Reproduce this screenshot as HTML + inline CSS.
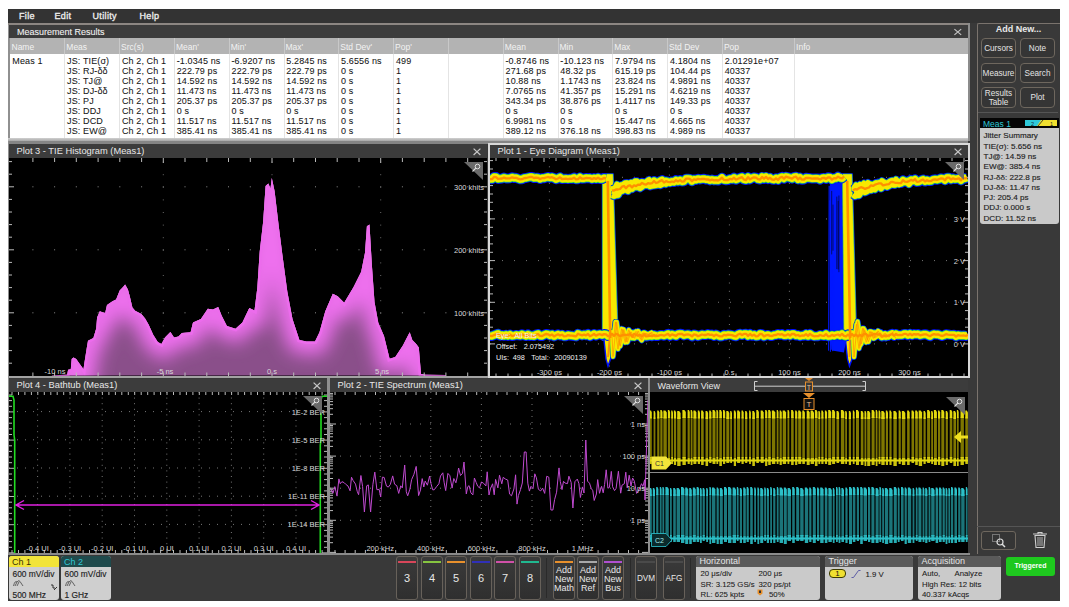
<!DOCTYPE html><html><head><meta charset="utf-8"><style>
html,body{margin:0;padding:0;background:#fff;width:1069px;height:607px;overflow:hidden;position:relative}
.b{position:absolute;box-sizing:border-box}
.t{position:absolute;white-space:pre;font-family:"Liberation Sans",sans-serif;line-height:1}
.s{-webkit-text-stroke:0.15px currentColor}
svg{position:absolute}
</style></head><body>
<div class="b" style="left:8px;top:9px;width:1052px;height:592px;background:#393939"></div>
<div class="b" style="left:8px;top:9px;width:1052px;height:14px;background:#333"></div>
<div class="t " style="left:19px;top:12.08px;font-size:9px;color:#ececec;font-weight:400;letter-spacing:0.35px;-webkit-text-stroke:0.35px #ececec">File</div>
<div class="t " style="left:54.5px;top:12.08px;font-size:9px;color:#ececec;font-weight:400;letter-spacing:0.35px;-webkit-text-stroke:0.35px #ececec">Edit</div>
<div class="t " style="left:92.5px;top:12.08px;font-size:9px;color:#ececec;font-weight:400;letter-spacing:0.35px;-webkit-text-stroke:0.35px #ececec">Utility</div>
<div class="t " style="left:139.5px;top:12.08px;font-size:9px;color:#ececec;font-weight:400;letter-spacing:0.35px;-webkit-text-stroke:0.35px #ececec">Help</div>
<div class="b" style="left:8px;top:23px;width:962px;height:2px;background:#8c8682"></div>
<div class="b" style="left:8px;top:25px;width:2px;height:116px;background:#909090"></div>
<div class="b" style="left:9px;top:25px;width:959px;height:13px;background:#3c3c3c"></div>
<div class="t " style="left:17px;top:28.08px;font-size:9px;color:#f0f0f0;font-weight:400;-webkit-text-stroke:0.1px #f0f0f0">Measurement Results</div>
<svg style="left:953px;top:27px" width="10" height="10"><path d="M1.4 2.1L8.2 7.9M8.2 2.1L1.4 7.9" stroke="#c4c4c4" stroke-width="1.2"/></svg>
<div class="b" style="left:968px;top:23px;width:2px;height:118px;background:#8c8c8c"></div>
<div class="b" style="left:10px;top:38px;width:958px;height:16px;background:#b3b3b3"></div>
<div class="b" style="left:10px;top:54px;width:958px;height:84px;background:#fff"></div>
<div class="b" style="left:8px;top:138px;width:960px;height:3px;background:linear-gradient(#d0d0d0,#a8a8a8)"></div>
<div class="b" style="left:8px;top:141px;width:960px;height:3px;background:#858585"></div>
<div class="t " style="left:11.5px;top:43.00px;font-size:8.5px;color:#f2f2f2;font-weight:400;">Name</div>
<div class="b" style="left:64px;top:38px;width:1px;height:16px;background:#c8c8c8"></div>
<div class="b" style="left:64px;top:54px;width:1px;height:84px;background:#e4e4e4"></div>
<div class="t " style="left:66.3px;top:43.00px;font-size:8.5px;color:#f2f2f2;font-weight:400;">Meas</div>
<div class="b" style="left:119px;top:38px;width:1px;height:16px;background:#c8c8c8"></div>
<div class="b" style="left:119px;top:54px;width:1px;height:84px;background:#e4e4e4"></div>
<div class="t " style="left:121.1px;top:43.00px;font-size:8.5px;color:#f2f2f2;font-weight:400;">Src(s)</div>
<div class="b" style="left:174px;top:38px;width:1px;height:16px;background:#c8c8c8"></div>
<div class="b" style="left:174px;top:54px;width:1px;height:84px;background:#e4e4e4"></div>
<div class="t " style="left:175.89999999999998px;top:43.00px;font-size:8.5px;color:#f2f2f2;font-weight:400;">Mean'</div>
<div class="b" style="left:229px;top:38px;width:1px;height:16px;background:#c8c8c8"></div>
<div class="b" style="left:229px;top:54px;width:1px;height:84px;background:#e4e4e4"></div>
<div class="t " style="left:230.7px;top:43.00px;font-size:8.5px;color:#f2f2f2;font-weight:400;">Min'</div>
<div class="b" style="left:284px;top:38px;width:1px;height:16px;background:#c8c8c8"></div>
<div class="b" style="left:284px;top:54px;width:1px;height:84px;background:#e4e4e4"></div>
<div class="t " style="left:285.5px;top:43.00px;font-size:8.5px;color:#f2f2f2;font-weight:400;">Max'</div>
<div class="b" style="left:338px;top:38px;width:1px;height:16px;background:#c8c8c8"></div>
<div class="b" style="left:338px;top:54px;width:1px;height:84px;background:#e4e4e4"></div>
<div class="t " style="left:340.29999999999995px;top:43.00px;font-size:8.5px;color:#f2f2f2;font-weight:400;">Std Dev'</div>
<div class="b" style="left:393px;top:38px;width:1px;height:16px;background:#c8c8c8"></div>
<div class="b" style="left:393px;top:54px;width:1px;height:84px;background:#e4e4e4"></div>
<div class="t " style="left:395.09999999999997px;top:43.00px;font-size:8.5px;color:#f2f2f2;font-weight:400;">Pop'</div>
<div class="b" style="left:448px;top:38px;width:1px;height:16px;background:#c8c8c8"></div>
<div class="b" style="left:448px;top:54px;width:1px;height:84px;background:#e4e4e4"></div>
<div class="t " style="left:449.9px;top:43.00px;font-size:8.5px;color:#f2f2f2;font-weight:400;"></div>
<div class="b" style="left:503px;top:38px;width:1px;height:16px;background:#c8c8c8"></div>
<div class="b" style="left:503px;top:54px;width:1px;height:84px;background:#e4e4e4"></div>
<div class="t " style="left:504.7px;top:43.00px;font-size:8.5px;color:#f2f2f2;font-weight:400;">Mean</div>
<div class="b" style="left:558px;top:38px;width:1px;height:16px;background:#c8c8c8"></div>
<div class="b" style="left:558px;top:54px;width:1px;height:84px;background:#e4e4e4"></div>
<div class="t " style="left:559.5px;top:43.00px;font-size:8.5px;color:#f2f2f2;font-weight:400;">Min</div>
<div class="b" style="left:612px;top:38px;width:1px;height:16px;background:#c8c8c8"></div>
<div class="b" style="left:612px;top:54px;width:1px;height:84px;background:#e4e4e4"></div>
<div class="t " style="left:614.3px;top:43.00px;font-size:8.5px;color:#f2f2f2;font-weight:400;">Max</div>
<div class="b" style="left:667px;top:38px;width:1px;height:16px;background:#c8c8c8"></div>
<div class="b" style="left:667px;top:54px;width:1px;height:84px;background:#e4e4e4"></div>
<div class="t " style="left:669.0999999999999px;top:43.00px;font-size:8.5px;color:#f2f2f2;font-weight:400;">Std Dev</div>
<div class="b" style="left:722px;top:38px;width:1px;height:16px;background:#c8c8c8"></div>
<div class="b" style="left:722px;top:54px;width:1px;height:84px;background:#e4e4e4"></div>
<div class="t " style="left:723.9px;top:43.00px;font-size:8.5px;color:#f2f2f2;font-weight:400;">Pop</div>
<div class="b" style="left:794px;top:38px;width:1px;height:16px;background:#c8c8c8"></div>
<div class="b" style="left:794px;top:54px;width:1px;height:84px;background:#e4e4e4"></div>
<div class="t " style="left:796.0999999999999px;top:43.00px;font-size:8.5px;color:#f2f2f2;font-weight:400;">Info</div>
<div class="t " style="left:12.299999999999999px;top:57.28px;font-size:9px;color:#141414;font-weight:400;letter-spacing:0.12px;-webkit-text-stroke:0.05px #141414">Meas 1</div>
<div class="t " style="left:67.1px;top:57.28px;font-size:9px;color:#141414;font-weight:400;letter-spacing:0.12px;-webkit-text-stroke:0.05px #141414">JS: TIE(σ)</div>
<div class="t " style="left:121.89999999999999px;top:57.28px;font-size:9px;color:#141414;font-weight:400;letter-spacing:0.12px;-webkit-text-stroke:0.05px #141414">Ch 2, Ch 1</div>
<div class="t " style="left:176.69999999999996px;top:57.28px;font-size:9px;color:#141414;font-weight:400;letter-spacing:0.12px;-webkit-text-stroke:0.05px #141414">-1.0345 ns</div>
<div class="t " style="left:231.49999999999997px;top:57.28px;font-size:9px;color:#141414;font-weight:400;letter-spacing:0.12px;-webkit-text-stroke:0.05px #141414">-6.9207 ns</div>
<div class="t " style="left:286.3px;top:57.28px;font-size:9px;color:#141414;font-weight:400;letter-spacing:0.12px;-webkit-text-stroke:0.05px #141414">5.2845 ns</div>
<div class="t " style="left:341.09999999999997px;top:57.28px;font-size:9px;color:#141414;font-weight:400;letter-spacing:0.12px;-webkit-text-stroke:0.05px #141414">5.6556 ns</div>
<div class="t " style="left:395.9px;top:57.28px;font-size:9px;color:#141414;font-weight:400;letter-spacing:0.12px;-webkit-text-stroke:0.05px #141414">499</div>
<div class="t " style="left:505.5px;top:57.28px;font-size:9px;color:#141414;font-weight:400;letter-spacing:0.12px;-webkit-text-stroke:0.05px #141414">-0.8746 ns</div>
<div class="t " style="left:560.3000000000001px;top:57.28px;font-size:9px;color:#141414;font-weight:400;letter-spacing:0.12px;-webkit-text-stroke:0.05px #141414">-10.123 ns</div>
<div class="t " style="left:615.1px;top:57.28px;font-size:9px;color:#141414;font-weight:400;letter-spacing:0.12px;-webkit-text-stroke:0.05px #141414">7.9794 ns</div>
<div class="t " style="left:669.9px;top:57.28px;font-size:9px;color:#141414;font-weight:400;letter-spacing:0.12px;-webkit-text-stroke:0.05px #141414">4.1804 ns</div>
<div class="t " style="left:724.7px;top:57.28px;font-size:9px;color:#141414;font-weight:400;letter-spacing:0.12px;-webkit-text-stroke:0.05px #141414">2.01291e+07</div>
<div class="t " style="left:67.1px;top:67.18px;font-size:9px;color:#141414;font-weight:400;letter-spacing:0.12px;-webkit-text-stroke:0.05px #141414">JS: RJ-δδ</div>
<div class="t " style="left:121.89999999999999px;top:67.18px;font-size:9px;color:#141414;font-weight:400;letter-spacing:0.12px;-webkit-text-stroke:0.05px #141414">Ch 2, Ch 1</div>
<div class="t " style="left:176.69999999999996px;top:67.18px;font-size:9px;color:#141414;font-weight:400;letter-spacing:0.12px;-webkit-text-stroke:0.05px #141414">222.79 ps</div>
<div class="t " style="left:231.49999999999997px;top:67.18px;font-size:9px;color:#141414;font-weight:400;letter-spacing:0.12px;-webkit-text-stroke:0.05px #141414">222.79 ps</div>
<div class="t " style="left:286.3px;top:67.18px;font-size:9px;color:#141414;font-weight:400;letter-spacing:0.12px;-webkit-text-stroke:0.05px #141414">222.79 ps</div>
<div class="t " style="left:341.09999999999997px;top:67.18px;font-size:9px;color:#141414;font-weight:400;letter-spacing:0.12px;-webkit-text-stroke:0.05px #141414">0 s</div>
<div class="t " style="left:395.9px;top:67.18px;font-size:9px;color:#141414;font-weight:400;letter-spacing:0.12px;-webkit-text-stroke:0.05px #141414">1</div>
<div class="t " style="left:505.5px;top:67.18px;font-size:9px;color:#141414;font-weight:400;letter-spacing:0.12px;-webkit-text-stroke:0.05px #141414">271.68 ps</div>
<div class="t " style="left:560.3000000000001px;top:67.18px;font-size:9px;color:#141414;font-weight:400;letter-spacing:0.12px;-webkit-text-stroke:0.05px #141414">48.32 ps</div>
<div class="t " style="left:615.1px;top:67.18px;font-size:9px;color:#141414;font-weight:400;letter-spacing:0.12px;-webkit-text-stroke:0.05px #141414">615.19 ps</div>
<div class="t " style="left:669.9px;top:67.18px;font-size:9px;color:#141414;font-weight:400;letter-spacing:0.12px;-webkit-text-stroke:0.05px #141414">104.44 ps</div>
<div class="t " style="left:724.7px;top:67.18px;font-size:9px;color:#141414;font-weight:400;letter-spacing:0.12px;-webkit-text-stroke:0.05px #141414">40337</div>
<div class="t " style="left:67.1px;top:77.08px;font-size:9px;color:#141414;font-weight:400;letter-spacing:0.12px;-webkit-text-stroke:0.05px #141414">JS: TJ@</div>
<div class="t " style="left:121.89999999999999px;top:77.08px;font-size:9px;color:#141414;font-weight:400;letter-spacing:0.12px;-webkit-text-stroke:0.05px #141414">Ch 2, Ch 1</div>
<div class="t " style="left:176.69999999999996px;top:77.08px;font-size:9px;color:#141414;font-weight:400;letter-spacing:0.12px;-webkit-text-stroke:0.05px #141414">14.592 ns</div>
<div class="t " style="left:231.49999999999997px;top:77.08px;font-size:9px;color:#141414;font-weight:400;letter-spacing:0.12px;-webkit-text-stroke:0.05px #141414">14.592 ns</div>
<div class="t " style="left:286.3px;top:77.08px;font-size:9px;color:#141414;font-weight:400;letter-spacing:0.12px;-webkit-text-stroke:0.05px #141414">14.592 ns</div>
<div class="t " style="left:341.09999999999997px;top:77.08px;font-size:9px;color:#141414;font-weight:400;letter-spacing:0.12px;-webkit-text-stroke:0.05px #141414">0 s</div>
<div class="t " style="left:395.9px;top:77.08px;font-size:9px;color:#141414;font-weight:400;letter-spacing:0.12px;-webkit-text-stroke:0.05px #141414">1</div>
<div class="t " style="left:505.5px;top:77.08px;font-size:9px;color:#141414;font-weight:400;letter-spacing:0.12px;-webkit-text-stroke:0.05px #141414">10.88 ns</div>
<div class="t " style="left:560.3000000000001px;top:77.08px;font-size:9px;color:#141414;font-weight:400;letter-spacing:0.12px;-webkit-text-stroke:0.05px #141414">1.1743 ns</div>
<div class="t " style="left:615.1px;top:77.08px;font-size:9px;color:#141414;font-weight:400;letter-spacing:0.12px;-webkit-text-stroke:0.05px #141414">23.824 ns</div>
<div class="t " style="left:669.9px;top:77.08px;font-size:9px;color:#141414;font-weight:400;letter-spacing:0.12px;-webkit-text-stroke:0.05px #141414">4.9891 ns</div>
<div class="t " style="left:724.7px;top:77.08px;font-size:9px;color:#141414;font-weight:400;letter-spacing:0.12px;-webkit-text-stroke:0.05px #141414">40337</div>
<div class="t " style="left:67.1px;top:86.98px;font-size:9px;color:#141414;font-weight:400;letter-spacing:0.12px;-webkit-text-stroke:0.05px #141414">JS: DJ-δδ</div>
<div class="t " style="left:121.89999999999999px;top:86.98px;font-size:9px;color:#141414;font-weight:400;letter-spacing:0.12px;-webkit-text-stroke:0.05px #141414">Ch 2, Ch 1</div>
<div class="t " style="left:176.69999999999996px;top:86.98px;font-size:9px;color:#141414;font-weight:400;letter-spacing:0.12px;-webkit-text-stroke:0.05px #141414">11.473 ns</div>
<div class="t " style="left:231.49999999999997px;top:86.98px;font-size:9px;color:#141414;font-weight:400;letter-spacing:0.12px;-webkit-text-stroke:0.05px #141414">11.473 ns</div>
<div class="t " style="left:286.3px;top:86.98px;font-size:9px;color:#141414;font-weight:400;letter-spacing:0.12px;-webkit-text-stroke:0.05px #141414">11.473 ns</div>
<div class="t " style="left:341.09999999999997px;top:86.98px;font-size:9px;color:#141414;font-weight:400;letter-spacing:0.12px;-webkit-text-stroke:0.05px #141414">0 s</div>
<div class="t " style="left:395.9px;top:86.98px;font-size:9px;color:#141414;font-weight:400;letter-spacing:0.12px;-webkit-text-stroke:0.05px #141414">1</div>
<div class="t " style="left:505.5px;top:86.98px;font-size:9px;color:#141414;font-weight:400;letter-spacing:0.12px;-webkit-text-stroke:0.05px #141414">7.0765 ns</div>
<div class="t " style="left:560.3000000000001px;top:86.98px;font-size:9px;color:#141414;font-weight:400;letter-spacing:0.12px;-webkit-text-stroke:0.05px #141414">41.357 ps</div>
<div class="t " style="left:615.1px;top:86.98px;font-size:9px;color:#141414;font-weight:400;letter-spacing:0.12px;-webkit-text-stroke:0.05px #141414">15.291 ns</div>
<div class="t " style="left:669.9px;top:86.98px;font-size:9px;color:#141414;font-weight:400;letter-spacing:0.12px;-webkit-text-stroke:0.05px #141414">4.6219 ns</div>
<div class="t " style="left:724.7px;top:86.98px;font-size:9px;color:#141414;font-weight:400;letter-spacing:0.12px;-webkit-text-stroke:0.05px #141414">40337</div>
<div class="t " style="left:67.1px;top:96.88px;font-size:9px;color:#141414;font-weight:400;letter-spacing:0.12px;-webkit-text-stroke:0.05px #141414">JS: PJ</div>
<div class="t " style="left:121.89999999999999px;top:96.88px;font-size:9px;color:#141414;font-weight:400;letter-spacing:0.12px;-webkit-text-stroke:0.05px #141414">Ch 2, Ch 1</div>
<div class="t " style="left:176.69999999999996px;top:96.88px;font-size:9px;color:#141414;font-weight:400;letter-spacing:0.12px;-webkit-text-stroke:0.05px #141414">205.37 ps</div>
<div class="t " style="left:231.49999999999997px;top:96.88px;font-size:9px;color:#141414;font-weight:400;letter-spacing:0.12px;-webkit-text-stroke:0.05px #141414">205.37 ps</div>
<div class="t " style="left:286.3px;top:96.88px;font-size:9px;color:#141414;font-weight:400;letter-spacing:0.12px;-webkit-text-stroke:0.05px #141414">205.37 ps</div>
<div class="t " style="left:341.09999999999997px;top:96.88px;font-size:9px;color:#141414;font-weight:400;letter-spacing:0.12px;-webkit-text-stroke:0.05px #141414">0 s</div>
<div class="t " style="left:395.9px;top:96.88px;font-size:9px;color:#141414;font-weight:400;letter-spacing:0.12px;-webkit-text-stroke:0.05px #141414">1</div>
<div class="t " style="left:505.5px;top:96.88px;font-size:9px;color:#141414;font-weight:400;letter-spacing:0.12px;-webkit-text-stroke:0.05px #141414">343.34 ps</div>
<div class="t " style="left:560.3000000000001px;top:96.88px;font-size:9px;color:#141414;font-weight:400;letter-spacing:0.12px;-webkit-text-stroke:0.05px #141414">38.876 ps</div>
<div class="t " style="left:615.1px;top:96.88px;font-size:9px;color:#141414;font-weight:400;letter-spacing:0.12px;-webkit-text-stroke:0.05px #141414">1.4117 ns</div>
<div class="t " style="left:669.9px;top:96.88px;font-size:9px;color:#141414;font-weight:400;letter-spacing:0.12px;-webkit-text-stroke:0.05px #141414">149.33 ps</div>
<div class="t " style="left:724.7px;top:96.88px;font-size:9px;color:#141414;font-weight:400;letter-spacing:0.12px;-webkit-text-stroke:0.05px #141414">40337</div>
<div class="t " style="left:67.1px;top:106.78px;font-size:9px;color:#141414;font-weight:400;letter-spacing:0.12px;-webkit-text-stroke:0.05px #141414">JS: DDJ</div>
<div class="t " style="left:121.89999999999999px;top:106.78px;font-size:9px;color:#141414;font-weight:400;letter-spacing:0.12px;-webkit-text-stroke:0.05px #141414">Ch 2, Ch 1</div>
<div class="t " style="left:176.69999999999996px;top:106.78px;font-size:9px;color:#141414;font-weight:400;letter-spacing:0.12px;-webkit-text-stroke:0.05px #141414">0 s</div>
<div class="t " style="left:231.49999999999997px;top:106.78px;font-size:9px;color:#141414;font-weight:400;letter-spacing:0.12px;-webkit-text-stroke:0.05px #141414">0 s</div>
<div class="t " style="left:286.3px;top:106.78px;font-size:9px;color:#141414;font-weight:400;letter-spacing:0.12px;-webkit-text-stroke:0.05px #141414">0 s</div>
<div class="t " style="left:341.09999999999997px;top:106.78px;font-size:9px;color:#141414;font-weight:400;letter-spacing:0.12px;-webkit-text-stroke:0.05px #141414">0 s</div>
<div class="t " style="left:395.9px;top:106.78px;font-size:9px;color:#141414;font-weight:400;letter-spacing:0.12px;-webkit-text-stroke:0.05px #141414">1</div>
<div class="t " style="left:505.5px;top:106.78px;font-size:9px;color:#141414;font-weight:400;letter-spacing:0.12px;-webkit-text-stroke:0.05px #141414">0 s</div>
<div class="t " style="left:560.3000000000001px;top:106.78px;font-size:9px;color:#141414;font-weight:400;letter-spacing:0.12px;-webkit-text-stroke:0.05px #141414">0 s</div>
<div class="t " style="left:615.1px;top:106.78px;font-size:9px;color:#141414;font-weight:400;letter-spacing:0.12px;-webkit-text-stroke:0.05px #141414">0 s</div>
<div class="t " style="left:669.9px;top:106.78px;font-size:9px;color:#141414;font-weight:400;letter-spacing:0.12px;-webkit-text-stroke:0.05px #141414">0 s</div>
<div class="t " style="left:724.7px;top:106.78px;font-size:9px;color:#141414;font-weight:400;letter-spacing:0.12px;-webkit-text-stroke:0.05px #141414">40337</div>
<div class="t " style="left:67.1px;top:116.68px;font-size:9px;color:#141414;font-weight:400;letter-spacing:0.12px;-webkit-text-stroke:0.05px #141414">JS: DCD</div>
<div class="t " style="left:121.89999999999999px;top:116.68px;font-size:9px;color:#141414;font-weight:400;letter-spacing:0.12px;-webkit-text-stroke:0.05px #141414">Ch 2, Ch 1</div>
<div class="t " style="left:176.69999999999996px;top:116.68px;font-size:9px;color:#141414;font-weight:400;letter-spacing:0.12px;-webkit-text-stroke:0.05px #141414">11.517 ns</div>
<div class="t " style="left:231.49999999999997px;top:116.68px;font-size:9px;color:#141414;font-weight:400;letter-spacing:0.12px;-webkit-text-stroke:0.05px #141414">11.517 ns</div>
<div class="t " style="left:286.3px;top:116.68px;font-size:9px;color:#141414;font-weight:400;letter-spacing:0.12px;-webkit-text-stroke:0.05px #141414">11.517 ns</div>
<div class="t " style="left:341.09999999999997px;top:116.68px;font-size:9px;color:#141414;font-weight:400;letter-spacing:0.12px;-webkit-text-stroke:0.05px #141414">0 s</div>
<div class="t " style="left:395.9px;top:116.68px;font-size:9px;color:#141414;font-weight:400;letter-spacing:0.12px;-webkit-text-stroke:0.05px #141414">1</div>
<div class="t " style="left:505.5px;top:116.68px;font-size:9px;color:#141414;font-weight:400;letter-spacing:0.12px;-webkit-text-stroke:0.05px #141414">6.9981 ns</div>
<div class="t " style="left:560.3000000000001px;top:116.68px;font-size:9px;color:#141414;font-weight:400;letter-spacing:0.12px;-webkit-text-stroke:0.05px #141414">0 s</div>
<div class="t " style="left:615.1px;top:116.68px;font-size:9px;color:#141414;font-weight:400;letter-spacing:0.12px;-webkit-text-stroke:0.05px #141414">15.447 ns</div>
<div class="t " style="left:669.9px;top:116.68px;font-size:9px;color:#141414;font-weight:400;letter-spacing:0.12px;-webkit-text-stroke:0.05px #141414">4.665 ns</div>
<div class="t " style="left:724.7px;top:116.68px;font-size:9px;color:#141414;font-weight:400;letter-spacing:0.12px;-webkit-text-stroke:0.05px #141414">40337</div>
<div class="t " style="left:67.1px;top:126.58px;font-size:9px;color:#141414;font-weight:400;letter-spacing:0.12px;-webkit-text-stroke:0.05px #141414">JS: EW@</div>
<div class="t " style="left:121.89999999999999px;top:126.58px;font-size:9px;color:#141414;font-weight:400;letter-spacing:0.12px;-webkit-text-stroke:0.05px #141414">Ch 2, Ch 1</div>
<div class="t " style="left:176.69999999999996px;top:126.58px;font-size:9px;color:#141414;font-weight:400;letter-spacing:0.12px;-webkit-text-stroke:0.05px #141414">385.41 ns</div>
<div class="t " style="left:231.49999999999997px;top:126.58px;font-size:9px;color:#141414;font-weight:400;letter-spacing:0.12px;-webkit-text-stroke:0.05px #141414">385.41 ns</div>
<div class="t " style="left:286.3px;top:126.58px;font-size:9px;color:#141414;font-weight:400;letter-spacing:0.12px;-webkit-text-stroke:0.05px #141414">385.41 ns</div>
<div class="t " style="left:341.09999999999997px;top:126.58px;font-size:9px;color:#141414;font-weight:400;letter-spacing:0.12px;-webkit-text-stroke:0.05px #141414">0 s</div>
<div class="t " style="left:395.9px;top:126.58px;font-size:9px;color:#141414;font-weight:400;letter-spacing:0.12px;-webkit-text-stroke:0.05px #141414">1</div>
<div class="t " style="left:505.5px;top:126.58px;font-size:9px;color:#141414;font-weight:400;letter-spacing:0.12px;-webkit-text-stroke:0.05px #141414">389.12 ns</div>
<div class="t " style="left:560.3000000000001px;top:126.58px;font-size:9px;color:#141414;font-weight:400;letter-spacing:0.12px;-webkit-text-stroke:0.05px #141414">376.18 ns</div>
<div class="t " style="left:615.1px;top:126.58px;font-size:9px;color:#141414;font-weight:400;letter-spacing:0.12px;-webkit-text-stroke:0.05px #141414">398.83 ns</div>
<div class="t " style="left:669.9px;top:126.58px;font-size:9px;color:#141414;font-weight:400;letter-spacing:0.12px;-webkit-text-stroke:0.05px #141414">4.989 ns</div>
<div class="t " style="left:724.7px;top:126.58px;font-size:9px;color:#141414;font-weight:400;letter-spacing:0.12px;-webkit-text-stroke:0.05px #141414">40337</div>
<div class="b" style="left:977px;top:23px;width:83px;height:531px;background:#393939;border-left:1px solid #7a736d;border-top:1px solid #7a736d;border-top-left-radius:2px"></div>
<div class="t " style="left:918.5px;width:200px;text-align:center;top:24.58px;font-size:9px;color:#e8e8e8;font-weight:700;">Add New...</div>
<div class="b" style="left:981px;top:38px;width:35px;height:20px;background:#353535;border:1px solid #6e675e;border-radius:4px"></div>
<div class="t " style="left:898.5px;width:200px;text-align:center;top:44.96px;font-size:8.2px;color:#e4e4e4;font-weight:400;">Cursors</div>
<div class="b" style="left:1020px;top:38px;width:35px;height:20px;background:#353535;border:1px solid #6e675e;border-radius:4px"></div>
<div class="t " style="left:937.5px;width:200px;text-align:center;top:44.96px;font-size:8.2px;color:#e4e4e4;font-weight:400;">Note</div>
<div class="b" style="left:981px;top:63px;width:35px;height:20px;background:#353535;border:1px solid #6e675e;border-radius:4px"></div>
<div class="t " style="left:898.5px;width:200px;text-align:center;top:69.96px;font-size:8.2px;color:#e4e4e4;font-weight:400;">Measure</div>
<div class="b" style="left:1020px;top:63px;width:35px;height:20px;background:#353535;border:1px solid #6e675e;border-radius:4px"></div>
<div class="t " style="left:937.5px;width:200px;text-align:center;top:69.96px;font-size:8.2px;color:#e4e4e4;font-weight:400;">Search</div>
<div class="b" style="left:981px;top:87px;width:35px;height:21px;background:#353535;border:1px solid #6e675e;border-radius:4px"></div>
<div class="t " style="left:898.5px;width:200px;text-align:center;top:89.76px;font-size:8.2px;color:#e4e4e4;font-weight:400;">Results</div>
<div class="t " style="left:898.5px;width:200px;text-align:center;top:98.96px;font-size:8.2px;color:#e4e4e4;font-weight:400;">Table</div>
<div class="b" style="left:1020px;top:87px;width:35px;height:21px;background:#353535;border:1px solid #6e675e;border-radius:4px"></div>
<div class="t " style="left:937.5px;width:200px;text-align:center;top:94.46px;font-size:8.2px;color:#e4e4e4;font-weight:400;">Plot</div>
<div class="b" style="left:978px;top:112px;width:80px;height:1px;background:#555"></div>
<div class="b" style="left:980px;top:118px;width:79px;height:10px;background:#050505"></div>
<div class="t " style="left:983px;top:120.30px;font-size:8.5px;color:#2ec8d8;font-weight:400;">Meas 1</div>
<svg style="left:1025px;top:120px" width="32" height="7"><rect x="0" y="0" width="32" height="6" fill="#2ec8d8"/><polygon points="16,0 32,0 32,6 12,6" fill="#f0e030"/><line x1="13" y1="6" x2="18" y2="0" stroke="#222" stroke-width="0.8"/><text x="6" y="5.5" font-size="5.5" font-family="Liberation Sans" fill="#123">2</text><text x="25" y="5.5" font-size="5.5" font-family="Liberation Sans" fill="#222">1</text></svg>
<div class="b" style="left:980px;top:128px;width:79px;height:95.5px;background:#c9c9c9;border-radius:0 0 3px 3px"></div>
<div class="t s" style="left:983.5px;top:132.34px;font-size:8.1px;color:#1e1e1e;font-weight:400;">Jitter Summary</div>
<div class="t s" style="left:983.5px;top:142.64px;font-size:8.1px;color:#1e1e1e;font-weight:400;">TIE(σ): 5.656 ns</div>
<div class="t s" style="left:983.5px;top:152.94px;font-size:8.1px;color:#1e1e1e;font-weight:400;">TJ@: 14.59 ns</div>
<div class="t s" style="left:983.5px;top:163.24px;font-size:8.1px;color:#1e1e1e;font-weight:400;">EW@: 385.4 ns</div>
<div class="t s" style="left:983.5px;top:173.54px;font-size:8.1px;color:#1e1e1e;font-weight:400;">RJ-δδ: 222.8 ps</div>
<div class="t s" style="left:983.5px;top:183.84px;font-size:8.1px;color:#1e1e1e;font-weight:400;">DJ-δδ: 11.47 ns</div>
<div class="t s" style="left:983.5px;top:194.14px;font-size:8.1px;color:#1e1e1e;font-weight:400;">PJ: 205.4 ps</div>
<div class="t s" style="left:983.5px;top:204.44px;font-size:8.1px;color:#1e1e1e;font-weight:400;">DDJ: 0.000 s</div>
<div class="t s" style="left:983.5px;top:214.74px;font-size:8.1px;color:#1e1e1e;font-weight:400;">DCD: 11.52 ns</div>
<div class="b" style="left:977px;top:526px;width:83px;height:1px;background:#555"></div>
<div class="b" style="left:981px;top:531px;width:35px;height:19px;background:#353535;border:1px solid #6e675e;border-radius:3px"></div>
<svg style="left:989px;top:532px" width="22" height="17"><rect x="3.5" y="2.5" width="7" height="7" fill="none" stroke="#bbb" stroke-dasharray="1,1"/><circle cx="11" cy="10" r="3" fill="none" stroke="#ddd" stroke-width="1.2"/><line x1="13" y1="12" x2="16" y2="15" stroke="#ddd" stroke-width="1.5"/></svg>
<svg style="left:1031px;top:530px" width="18" height="20"><path d="M2 4h14M7 4V2.5h4V4M4 5.5l1 12h8l1-12z" fill="none" stroke="#d0d0d0" stroke-width="1.1"/><path d="M7 7v9M9 7v9M11 7v9" stroke="#d0d0d0" stroke-width="0.8"/></svg>
<div class="b" style="left:8px;top:553px;width:962px;height:2px;background:#8a8a8a"></div>
<div class="b" style="left:9px;top:556px;width:50px;height:44px;background:#cfcfcf;border-radius:3px;overflow:hidden"></div>
<div class="b" style="left:9px;top:556px;width:50px;height:11px;background:#f2e43a;border-radius:3px 3px 0 0"></div>
<div class="t " style="left:12px;top:558.08px;font-size:9px;color:#3a3000;font-weight:400;">Ch 1</div>
<div class="t s" style="left:12.5px;top:569.79px;font-size:8.4px;color:#1e1e1e;font-weight:400;">600 mV/div</div>
<svg style="left:13px;top:579px" width="12" height="8"><path d="M0.5 7 Q2 1 4 3 Q6 0 8 4 L10 7 M2 7l2-4M4 7l2-4" fill="none" stroke="#333" stroke-width="0.7"/></svg>
<div class="t s" style="left:12.5px;top:590.59px;font-size:8.4px;color:#1e1e1e;font-weight:400;">500 MHz</div>
<svg style="left:50px;top:584px" width="8" height="8"><path d="M1 1h2v3h2M4 6l3-3" fill="none" stroke="#222" stroke-width="0.9"/></svg>
<div class="b" style="left:61px;top:556px;width:50px;height:44px;background:#cfcfcf;border-radius:3px;overflow:hidden"></div>
<div class="b" style="left:61px;top:556px;width:50px;height:11px;background:#1f4a4c;border-radius:3px 3px 0 0"></div>
<div class="t " style="left:64px;top:558.08px;font-size:9px;color:#2ec8d4;font-weight:400;">Ch 2</div>
<div class="t s" style="left:64.5px;top:569.79px;font-size:8.4px;color:#1e1e1e;font-weight:400;">600 mV/div</div>
<svg style="left:65px;top:579px" width="12" height="8"><path d="M0.5 7 Q2 1 4 3 Q6 0 8 4 L10 7 M2 7l2-4M4 7l2-4" fill="none" stroke="#333" stroke-width="0.7"/></svg>
<div class="t s" style="left:64.5px;top:590.59px;font-size:8.4px;color:#1e1e1e;font-weight:400;">1 GHz</div>
<div class="b" style="left:396px;top:556px;width:22px;height:44px;background:linear-gradient(#3a3a3a,#2f2f2f);border:1px solid #67615a;border-radius:3px"></div>
<div class="b" style="left:398px;top:560.5px;width:18px;height:2.0px;background:#d8465a"></div>
<div class="t " style="left:307.0px;width:200px;text-align:center;top:572.89px;font-size:11px;color:#e8e8e8;font-weight:400;">3</div>
<div class="b" style="left:421px;top:556px;width:22px;height:44px;background:linear-gradient(#3a3a3a,#2f2f2f);border:1px solid #67615a;border-radius:3px"></div>
<div class="b" style="left:423px;top:560.5px;width:18px;height:2.0px;background:#86c440"></div>
<div class="t " style="left:332.0px;width:200px;text-align:center;top:572.89px;font-size:11px;color:#e8e8e8;font-weight:400;">4</div>
<div class="b" style="left:445px;top:556px;width:22px;height:44px;background:linear-gradient(#3a3a3a,#2f2f2f);border:1px solid #67615a;border-radius:3px"></div>
<div class="b" style="left:447px;top:560.5px;width:18px;height:2.0px;background:#e8902c"></div>
<div class="t " style="left:356.0px;width:200px;text-align:center;top:572.89px;font-size:11px;color:#e8e8e8;font-weight:400;">5</div>
<div class="b" style="left:470px;top:556px;width:22px;height:44px;background:linear-gradient(#3a3a3a,#2f2f2f);border:1px solid #67615a;border-radius:3px"></div>
<div class="b" style="left:472px;top:560.5px;width:18px;height:2.0px;background:#3030b8"></div>
<div class="t " style="left:381.0px;width:200px;text-align:center;top:572.89px;font-size:11px;color:#e8e8e8;font-weight:400;">6</div>
<div class="b" style="left:494px;top:556px;width:22px;height:44px;background:linear-gradient(#3a3a3a,#2f2f2f);border:1px solid #67615a;border-radius:3px"></div>
<div class="b" style="left:496px;top:560.5px;width:18px;height:2.0px;background:#d050a8"></div>
<div class="t " style="left:405.0px;width:200px;text-align:center;top:572.89px;font-size:11px;color:#e8e8e8;font-weight:400;">7</div>
<div class="b" style="left:519px;top:556px;width:22px;height:44px;background:linear-gradient(#3a3a3a,#2f2f2f);border:1px solid #67615a;border-radius:3px"></div>
<div class="b" style="left:521px;top:560.5px;width:18px;height:2.0px;background:#20b890"></div>
<div class="t " style="left:430.0px;width:200px;text-align:center;top:572.89px;font-size:11px;color:#e8e8e8;font-weight:400;">8</div>
<div class="b" style="left:546px;top:558px;width:1px;height:40px;background:#2a2a2a"></div>
<div class="b" style="left:553px;top:556px;width:22px;height:44px;background:linear-gradient(#3a3a3a,#2f2f2f);border:1px solid #67615a;border-radius:3px"></div>
<div class="b" style="left:555px;top:560.5px;width:18px;height:2.0px;background:#e8902c"></div>
<div class="t " style="left:464.0px;width:200px;text-align:center;top:566.38px;font-size:9px;color:#e8e8e8;font-weight:400;">Add</div>
<div class="t " style="left:464.0px;width:200px;text-align:center;top:575.08px;font-size:9px;color:#e8e8e8;font-weight:400;">New</div>
<div class="t " style="left:464.0px;width:200px;text-align:center;top:583.78px;font-size:9px;color:#e8e8e8;font-weight:400;">Math</div>
<div class="b" style="left:577px;top:556px;width:22px;height:44px;background:linear-gradient(#3a3a3a,#2f2f2f);border:1px solid #67615a;border-radius:3px"></div>
<div class="b" style="left:579px;top:560.5px;width:18px;height:2.0px;background:#a8a8a8"></div>
<div class="t " style="left:488.0px;width:200px;text-align:center;top:566.38px;font-size:9px;color:#e8e8e8;font-weight:400;">Add</div>
<div class="t " style="left:488.0px;width:200px;text-align:center;top:575.08px;font-size:9px;color:#e8e8e8;font-weight:400;">New</div>
<div class="t " style="left:488.0px;width:200px;text-align:center;top:583.78px;font-size:9px;color:#e8e8e8;font-weight:400;">Ref</div>
<div class="b" style="left:602px;top:556px;width:22px;height:44px;background:linear-gradient(#3a3a3a,#2f2f2f);border:1px solid #67615a;border-radius:3px"></div>
<div class="b" style="left:604px;top:560.5px;width:18px;height:2.0px;background:#b050d0"></div>
<div class="t " style="left:513.0px;width:200px;text-align:center;top:566.38px;font-size:9px;color:#e8e8e8;font-weight:400;">Add</div>
<div class="t " style="left:513.0px;width:200px;text-align:center;top:575.08px;font-size:9px;color:#e8e8e8;font-weight:400;">New</div>
<div class="t " style="left:513.0px;width:200px;text-align:center;top:583.78px;font-size:9px;color:#e8e8e8;font-weight:400;">Bus</div>
<div class="b" style="left:630px;top:558px;width:1px;height:40px;background:#2a2a2a"></div>
<div class="b" style="left:635px;top:556px;width:22px;height:44px;background:linear-gradient(#3a3a3a,#2f2f2f);border:1px solid #67615a;border-radius:3px"></div>
<div class="b" style="left:637px;top:560.5px;width:18px;height:2.0px;background:#4a4a4a"></div>
<div class="t " style="left:546.0px;width:200px;text-align:center;top:574.76px;font-size:8.2px;color:#e8e8e8;font-weight:400;">DVM</div>
<div class="b" style="left:663px;top:556px;width:22px;height:44px;background:linear-gradient(#3a3a3a,#2f2f2f);border:1px solid #67615a;border-radius:3px"></div>
<div class="b" style="left:665px;top:560.5px;width:18px;height:2.0px;background:#4a4a4a"></div>
<div class="t " style="left:574.0px;width:200px;text-align:center;top:574.76px;font-size:8.2px;color:#e8e8e8;font-weight:400;">AFG</div>
<div class="b" style="left:690px;top:558px;width:1px;height:40px;background:#2a2a2a"></div>
<div class="b" style="left:696px;top:556px;width:124px;height:44px;background:#cacaca;border-radius:3px;overflow:hidden"></div>
<div class="b" style="left:696px;top:556px;width:124px;height:10.5px;background:#5a5a5a;border-radius:3px 3px 0 0"></div>
<div class="t " style="left:699.5px;top:557.28px;font-size:9px;color:#e6e6e6;font-weight:400;">Horizontal</div>
<div class="t " style="left:700.5px;top:570.40px;font-size:7.8px;color:#1a1a1a;font-weight:400;-webkit-text-stroke:0.07px #1a1a1a">20 μs/div</div>
<div class="t " style="left:758.5px;top:570.40px;font-size:7.8px;color:#1a1a1a;font-weight:400;-webkit-text-stroke:0.07px #1a1a1a">200 μs</div>
<div class="t " style="left:700.5px;top:580.60px;font-size:7.8px;color:#1a1a1a;font-weight:400;-webkit-text-stroke:0.07px #1a1a1a">SR: 3.125 GS/s</div>
<div class="t " style="left:758.5px;top:580.60px;font-size:7.8px;color:#1a1a1a;font-weight:400;-webkit-text-stroke:0.07px #1a1a1a">320 ps/pt</div>
<div class="t " style="left:700.5px;top:590.60px;font-size:7.8px;color:#1a1a1a;font-weight:400;-webkit-text-stroke:0.07px #1a1a1a">RL: 625 kpts</div>
<svg style="left:757px;top:589px" width="6" height="7"><path d="M0.5 0.5h5v4l-2.5 2l-2.5-2z" fill="#e8902c"/><rect x="2" y="1.5" width="2" height="2.5" fill="#333"/></svg>
<div class="t " style="left:769px;top:590.60px;font-size:7.8px;color:#1a1a1a;font-weight:400;-webkit-text-stroke:0.07px #1a1a1a">50%</div>
<div class="b" style="left:825px;top:556px;width:88px;height:44px;background:#cacaca;border-radius:3px;overflow:hidden"></div>
<div class="b" style="left:825px;top:556px;width:88px;height:10.5px;background:#5a5a5a;border-radius:3px 3px 0 0"></div>
<div class="t " style="left:828.5px;top:557.28px;font-size:9px;color:#e6e6e6;font-weight:400;">Trigger</div>
<div class="b" style="left:829px;top:569px;width:17px;height:9px;background:#f0e030;border:1px solid #3a3a00;border-radius:4px"></div>
<div class="t " style="left:737.5px;width:200px;text-align:center;top:570.43px;font-size:8px;color:#111;font-weight:400;">1</div>
<svg style="left:851px;top:570px" width="10" height="8"><path d="M0.5 7.5h2l5-7h2" fill="none" stroke="#5050a0" stroke-width="0.9"/></svg>
<div class="t " style="left:865.5px;top:570.60px;font-size:7.8px;color:#1a1a1a;font-weight:400;-webkit-text-stroke:0.07px #1a1a1a">1.9 V</div>
<div class="b" style="left:918px;top:556px;width:83px;height:44px;background:#cacaca;border-radius:3px;overflow:hidden"></div>
<div class="b" style="left:918px;top:556px;width:83px;height:10.5px;background:#5a5a5a;border-radius:3px 3px 0 0"></div>
<div class="t " style="left:921.5px;top:557.28px;font-size:9px;color:#e6e6e6;font-weight:400;">Acquisition</div>
<div class="t " style="left:922px;top:570.40px;font-size:7.8px;color:#1a1a1a;font-weight:400;-webkit-text-stroke:0.07px #1a1a1a">Auto,</div>
<div class="t " style="left:954.5px;top:570.40px;font-size:7.8px;color:#1a1a1a;font-weight:400;-webkit-text-stroke:0.07px #1a1a1a">Analyze</div>
<div class="t " style="left:922px;top:580.60px;font-size:7.8px;color:#1a1a1a;font-weight:400;-webkit-text-stroke:0.07px #1a1a1a">High Res: 12 bits</div>
<div class="t " style="left:922px;top:590.60px;font-size:7.8px;color:#1a1a1a;font-weight:400;-webkit-text-stroke:0.07px #1a1a1a">40.337 kAcqs</div>
<div class="b" style="left:1006px;top:556.5px;width:49px;height:19.0px;background:#1ec81e;border-radius:3px"></div>
<div class="t " style="left:930.5px;width:200px;text-align:center;top:562.37px;font-size:7px;color:#fff;font-weight:700;">Triggered</div>
<div class="b" style="left:9px;top:144px;width:478px;height:13.5px;background:#3c3c3c"></div>
<div class="b" style="left:9px;top:157.5px;width:478px;height:218.5px;background:#000"></div>
<div class="t " style="left:16.5px;top:146.83px;font-size:9.3px;color:#e8e8e8;font-weight:400;">Plot 3 - TIE Histogram (Meas1)</div>
<svg style="left:472px;top:146.7px" width="10" height="10"><path d="M1.6 1.6L8.4 8.0M8.4 1.6L1.6 8.0" stroke="#c8c8c8" stroke-width="1.2"/></svg>
<div class="b" style="left:8px;top:376px;width:480px;height:1.5px;background:#a2a2a2"></div>
<div class="b" style="left:8px;top:141px;width:1px;height:412px;background:#8e8e8e"></div>
<svg style="left:9px;top:157.5px" width="478" height="218.5" viewBox="0 0 478 218.5"><g fill="#8a8a8a"><rect x="23.4" y="28.3" width="1" height="1"/><rect x="45.1" y="28.3" width="1" height="1"/><rect x="66.8" y="28.3" width="1" height="1"/><rect x="88.6" y="28.3" width="1" height="1"/><rect x="110.3" y="28.3" width="1" height="1"/><rect x="132.1" y="28.3" width="1" height="1"/><rect x="153.8" y="28.3" width="1" height="1"/><rect x="175.5" y="28.3" width="1" height="1"/><rect x="197.3" y="28.3" width="1" height="1"/><rect x="219.0" y="28.3" width="1" height="1"/><rect x="240.8" y="28.3" width="1" height="1"/><rect x="262.5" y="28.3" width="1" height="1"/><rect x="284.2" y="28.3" width="1" height="1"/><rect x="306.0" y="28.3" width="1" height="1"/><rect x="327.7" y="28.3" width="1" height="1"/><rect x="349.5" y="28.3" width="1" height="1"/><rect x="371.2" y="28.3" width="1" height="1"/><rect x="392.9" y="28.3" width="1" height="1"/><rect x="414.7" y="28.3" width="1" height="1"/><rect x="436.4" y="28.3" width="1" height="1"/><rect x="458.2" y="28.3" width="1" height="1"/></g><g fill="#8a8a8a"><rect x="23.4" y="91.3" width="1" height="1"/><rect x="45.1" y="91.3" width="1" height="1"/><rect x="66.8" y="91.3" width="1" height="1"/><rect x="88.6" y="91.3" width="1" height="1"/><rect x="110.3" y="91.3" width="1" height="1"/><rect x="132.1" y="91.3" width="1" height="1"/><rect x="153.8" y="91.3" width="1" height="1"/><rect x="175.5" y="91.3" width="1" height="1"/><rect x="197.3" y="91.3" width="1" height="1"/><rect x="219.0" y="91.3" width="1" height="1"/><rect x="240.8" y="91.3" width="1" height="1"/><rect x="262.5" y="91.3" width="1" height="1"/><rect x="284.2" y="91.3" width="1" height="1"/><rect x="306.0" y="91.3" width="1" height="1"/><rect x="327.7" y="91.3" width="1" height="1"/><rect x="349.5" y="91.3" width="1" height="1"/><rect x="371.2" y="91.3" width="1" height="1"/><rect x="392.9" y="91.3" width="1" height="1"/><rect x="414.7" y="91.3" width="1" height="1"/><rect x="436.4" y="91.3" width="1" height="1"/><rect x="458.2" y="91.3" width="1" height="1"/></g><g fill="#8a8a8a"><rect x="23.4" y="154.3" width="1" height="1"/><rect x="45.1" y="154.3" width="1" height="1"/><rect x="66.8" y="154.3" width="1" height="1"/><rect x="88.6" y="154.3" width="1" height="1"/><rect x="110.3" y="154.3" width="1" height="1"/><rect x="132.1" y="154.3" width="1" height="1"/><rect x="153.8" y="154.3" width="1" height="1"/><rect x="175.5" y="154.3" width="1" height="1"/><rect x="197.3" y="154.3" width="1" height="1"/><rect x="219.0" y="154.3" width="1" height="1"/><rect x="240.8" y="154.3" width="1" height="1"/><rect x="262.5" y="154.3" width="1" height="1"/><rect x="284.2" y="154.3" width="1" height="1"/><rect x="306.0" y="154.3" width="1" height="1"/><rect x="327.7" y="154.3" width="1" height="1"/><rect x="349.5" y="154.3" width="1" height="1"/><rect x="371.2" y="154.3" width="1" height="1"/><rect x="392.9" y="154.3" width="1" height="1"/><rect x="414.7" y="154.3" width="1" height="1"/><rect x="436.4" y="154.3" width="1" height="1"/><rect x="458.2" y="154.3" width="1" height="1"/></g><g fill="#6a6a6a"><rect x="153.8" y="3.6" width="1" height="1"/><rect x="153.8" y="16.2" width="1" height="1"/><rect x="153.8" y="28.8" width="1" height="1"/><rect x="153.8" y="41.4" width="1" height="1"/><rect x="153.8" y="54.0" width="1" height="1"/><rect x="153.8" y="66.6" width="1" height="1"/><rect x="153.8" y="79.2" width="1" height="1"/><rect x="153.8" y="91.8" width="1" height="1"/><rect x="153.8" y="104.4" width="1" height="1"/><rect x="153.8" y="117.0" width="1" height="1"/><rect x="153.8" y="129.6" width="1" height="1"/><rect x="153.8" y="142.2" width="1" height="1"/><rect x="153.8" y="154.8" width="1" height="1"/><rect x="153.8" y="167.4" width="1" height="1"/><rect x="153.8" y="180.0" width="1" height="1"/><rect x="153.8" y="192.6" width="1" height="1"/><rect x="153.8" y="205.2" width="1" height="1"/></g><g fill="#6a6a6a"><rect x="262.5" y="3.6" width="1" height="1"/><rect x="262.5" y="16.2" width="1" height="1"/><rect x="262.5" y="28.8" width="1" height="1"/><rect x="262.5" y="41.4" width="1" height="1"/><rect x="262.5" y="54.0" width="1" height="1"/><rect x="262.5" y="66.6" width="1" height="1"/><rect x="262.5" y="79.2" width="1" height="1"/><rect x="262.5" y="91.8" width="1" height="1"/><rect x="262.5" y="104.4" width="1" height="1"/><rect x="262.5" y="117.0" width="1" height="1"/><rect x="262.5" y="129.6" width="1" height="1"/><rect x="262.5" y="142.2" width="1" height="1"/><rect x="262.5" y="154.8" width="1" height="1"/><rect x="262.5" y="167.4" width="1" height="1"/><rect x="262.5" y="180.0" width="1" height="1"/><rect x="262.5" y="192.6" width="1" height="1"/><rect x="262.5" y="205.2" width="1" height="1"/></g><g fill="#6a6a6a"><rect x="371.2" y="3.6" width="1" height="1"/><rect x="371.2" y="16.2" width="1" height="1"/><rect x="371.2" y="28.8" width="1" height="1"/><rect x="371.2" y="41.4" width="1" height="1"/><rect x="371.2" y="54.0" width="1" height="1"/><rect x="371.2" y="66.6" width="1" height="1"/><rect x="371.2" y="79.2" width="1" height="1"/><rect x="371.2" y="91.8" width="1" height="1"/><rect x="371.2" y="104.4" width="1" height="1"/><rect x="371.2" y="117.0" width="1" height="1"/><rect x="371.2" y="129.6" width="1" height="1"/><rect x="371.2" y="142.2" width="1" height="1"/><rect x="371.2" y="154.8" width="1" height="1"/><rect x="371.2" y="167.4" width="1" height="1"/><rect x="371.2" y="180.0" width="1" height="1"/><rect x="371.2" y="192.6" width="1" height="1"/><rect x="371.2" y="205.2" width="1" height="1"/></g><defs><clipPath id="c3"><path d="M42.8,217.5 L42.8,217.2 L58.2,216.7 L59.1,211.8 L61.8,211.2 L62.7,200.9 L64.5,199.5 L67.2,200.9 L70.0,204.9 L74.5,211.2 L75.4,204.9 L77.7,190.4 L79.0,182.8 L84.4,179.9 L87.2,170.5 L88.1,159.6 L90.8,153.3 L93.5,154.2 L96.2,155.1 L98.0,146.9 L103.5,143.3 L107.1,141.5 L110.7,132.4 L114.3,128.8 L116.1,126.6 L118.9,131.5 L120.7,137.9 L123.4,149.6 L126.1,152.7 L132.4,156.0 L136.1,160.5 L139.7,166.8 L144.2,176.8 L148.8,184.1 L152.4,185.9 L156.0,179.5 L161.4,174.1 L165.0,179.5 L169.5,178.5 L172.9,175.0 L181.6,174.3 L184.0,164.6 L191.9,161.1 L198.8,150.8 L204.0,151.5 L209.2,149.0 L212.7,157.7 L217.9,168.0 L226.5,170.8 L233.4,164.6 L240.3,150.1 L245.5,152.5 L248.3,130.0 L250.7,93.7 L254.1,64.3 L256.6,28.1 L259.3,25.6 L261.5,30.5 L262.8,20.1 L265.6,33.2 L269.7,67.8 L273.2,95.5 L278.3,133.5 L283.5,161.1 L290.4,181.9 L297.4,183.6 L306.0,183.6 L310.5,174.3 L316.2,153.5 L323.8,135.7 L328.7,138.3 L335.2,144.8 L344.6,128.9 L352.2,113.7 L356.0,94.8 L357.9,68.3 L360.5,66.4 L362.8,106.1 L365.5,144.0 L369.3,164.8 L375.0,178.1 L380.6,200.8 L386.3,198.9 L393.9,187.5 L400.7,174.3 L403.3,181.9 L407.0,185.7 L409.8,189.5 L412.0,216.0 L416.6,216.7 L437.0,217.0 L437.0,217.5 Z"/></clipPath><filter id="bl3" x="-20%" y="-20%" width="140%" height="140%"><feGaussianBlur stdDeviation="9"/></filter></defs><path d="M42.8,217.5 L42.8,217.2 L58.2,216.7 L59.1,211.8 L61.8,211.2 L62.7,200.9 L64.5,199.5 L67.2,200.9 L70.0,204.9 L74.5,211.2 L75.4,204.9 L77.7,190.4 L79.0,182.8 L84.4,179.9 L87.2,170.5 L88.1,159.6 L90.8,153.3 L93.5,154.2 L96.2,155.1 L98.0,146.9 L103.5,143.3 L107.1,141.5 L110.7,132.4 L114.3,128.8 L116.1,126.6 L118.9,131.5 L120.7,137.9 L123.4,149.6 L126.1,152.7 L132.4,156.0 L136.1,160.5 L139.7,166.8 L144.2,176.8 L148.8,184.1 L152.4,185.9 L156.0,179.5 L161.4,174.1 L165.0,179.5 L169.5,178.5 L172.9,175.0 L181.6,174.3 L184.0,164.6 L191.9,161.1 L198.8,150.8 L204.0,151.5 L209.2,149.0 L212.7,157.7 L217.9,168.0 L226.5,170.8 L233.4,164.6 L240.3,150.1 L245.5,152.5 L248.3,130.0 L250.7,93.7 L254.1,64.3 L256.6,28.1 L259.3,25.6 L261.5,30.5 L262.8,20.1 L265.6,33.2 L269.7,67.8 L273.2,95.5 L278.3,133.5 L283.5,161.1 L290.4,181.9 L297.4,183.6 L306.0,183.6 L310.5,174.3 L316.2,153.5 L323.8,135.7 L328.7,138.3 L335.2,144.8 L344.6,128.9 L352.2,113.7 L356.0,94.8 L357.9,68.3 L360.5,66.4 L362.8,106.1 L365.5,144.0 L369.3,164.8 L375.0,178.1 L380.6,200.8 L386.3,198.9 L393.9,187.5 L400.7,174.3 L403.3,181.9 L407.0,185.7 L409.8,189.5 L412.0,216.0 L416.6,216.7 L437.0,217.0 L437.0,217.5 Z" fill="#8a4f8a"/><g clip-path="url(#c3)"><path d="M42.8,217.2 L58.2,216.7 L59.1,211.8 L61.8,211.2 L62.7,200.9 L64.5,199.5 L67.2,200.9 L70.0,204.9 L74.5,211.2 L75.4,204.9 L77.7,190.4 L79.0,182.8 L84.4,179.9 L87.2,170.5 L88.1,159.6 L90.8,153.3 L93.5,154.2 L96.2,155.1 L98.0,146.9 L103.5,143.3 L107.1,141.5 L110.7,132.4 L114.3,128.8 L116.1,126.6 L118.9,131.5 L120.7,137.9 L123.4,149.6 L126.1,152.7 L132.4,156.0 L136.1,160.5 L139.7,166.8 L144.2,176.8 L148.8,184.1 L152.4,185.9 L156.0,179.5 L161.4,174.1 L165.0,179.5 L169.5,178.5 L172.9,175.0 L181.6,174.3 L184.0,164.6 L191.9,161.1 L198.8,150.8 L204.0,151.5 L209.2,149.0 L212.7,157.7 L217.9,168.0 L226.5,170.8 L233.4,164.6 L240.3,150.1 L245.5,152.5 L248.3,130.0 L250.7,93.7 L254.1,64.3 L256.6,28.1 L259.3,25.6 L261.5,30.5 L262.8,20.1 L265.6,33.2 L269.7,67.8 L273.2,95.5 L278.3,133.5 L283.5,161.1 L290.4,181.9 L297.4,183.6 L306.0,183.6 L310.5,174.3 L316.2,153.5 L323.8,135.7 L328.7,138.3 L335.2,144.8 L344.6,128.9 L352.2,113.7 L356.0,94.8 L357.9,68.3 L360.5,66.4 L362.8,106.1 L365.5,144.0 L369.3,164.8 L375.0,178.1 L380.6,200.8 L386.3,198.9 L393.9,187.5 L400.7,174.3 L403.3,181.9 L407.0,185.7 L409.8,189.5 L412.0,216.0 L416.6,216.7 L437.0,217.0" fill="none" stroke="#ee70ee" stroke-width="26" filter="url(#bl3)"/><path d="M42.8,217.2 L58.2,216.7 L59.1,211.8 L61.8,211.2 L62.7,200.9 L64.5,199.5 L67.2,200.9 L70.0,204.9 L74.5,211.2 L75.4,204.9 L77.7,190.4 L79.0,182.8 L84.4,179.9 L87.2,170.5 L88.1,159.6 L90.8,153.3 L93.5,154.2 L96.2,155.1 L98.0,146.9 L103.5,143.3 L107.1,141.5 L110.7,132.4 L114.3,128.8 L116.1,126.6 L118.9,131.5 L120.7,137.9 L123.4,149.6 L126.1,152.7 L132.4,156.0 L136.1,160.5 L139.7,166.8 L144.2,176.8 L148.8,184.1 L152.4,185.9 L156.0,179.5 L161.4,174.1 L165.0,179.5 L169.5,178.5 L172.9,175.0 L181.6,174.3 L184.0,164.6 L191.9,161.1 L198.8,150.8 L204.0,151.5 L209.2,149.0 L212.7,157.7 L217.9,168.0 L226.5,170.8 L233.4,164.6 L240.3,150.1 L245.5,152.5 L248.3,130.0 L250.7,93.7 L254.1,64.3 L256.6,28.1 L259.3,25.6 L261.5,30.5 L262.8,20.1 L265.6,33.2 L269.7,67.8 L273.2,95.5 L278.3,133.5 L283.5,161.1 L290.4,181.9 L297.4,183.6 L306.0,183.6 L310.5,174.3 L316.2,153.5 L323.8,135.7 L328.7,138.3 L335.2,144.8 L344.6,128.9 L352.2,113.7 L356.0,94.8 L357.9,68.3 L360.5,66.4 L362.8,106.1 L365.5,144.0 L369.3,164.8 L375.0,178.1 L380.6,200.8 L386.3,198.9 L393.9,187.5 L400.7,174.3 L403.3,181.9 L407.0,185.7 L409.8,189.5 L412.0,216.0 L416.6,216.7 L437.0,217.0" fill="none" stroke="#ec6cec" stroke-width="5"/></g><line x1="23.9" y1="0" x2="23.9" y2="4" stroke="#bbb"/><line x1="23.9" y1="214.5" x2="23.9" y2="218.5" stroke="#bbb"/><line x1="45.6" y1="0" x2="45.6" y2="4" stroke="#bbb"/><line x1="45.6" y1="214.5" x2="45.6" y2="218.5" stroke="#bbb"/><line x1="67.3" y1="0" x2="67.3" y2="4" stroke="#bbb"/><line x1="67.3" y1="214.5" x2="67.3" y2="218.5" stroke="#bbb"/><line x1="89.1" y1="0" x2="89.1" y2="4" stroke="#bbb"/><line x1="89.1" y1="214.5" x2="89.1" y2="218.5" stroke="#bbb"/><line x1="110.8" y1="0" x2="110.8" y2="4" stroke="#bbb"/><line x1="110.8" y1="214.5" x2="110.8" y2="218.5" stroke="#bbb"/><line x1="132.6" y1="0" x2="132.6" y2="4" stroke="#bbb"/><line x1="132.6" y1="214.5" x2="132.6" y2="218.5" stroke="#bbb"/><line x1="154.3" y1="0" x2="154.3" y2="5" stroke="#bbb"/><line x1="154.3" y1="214.5" x2="154.3" y2="218.5" stroke="#bbb"/><line x1="176.0" y1="0" x2="176.0" y2="4" stroke="#bbb"/><line x1="176.0" y1="214.5" x2="176.0" y2="218.5" stroke="#bbb"/><line x1="197.8" y1="0" x2="197.8" y2="4" stroke="#bbb"/><line x1="197.8" y1="214.5" x2="197.8" y2="218.5" stroke="#bbb"/><line x1="219.5" y1="0" x2="219.5" y2="4" stroke="#bbb"/><line x1="219.5" y1="214.5" x2="219.5" y2="218.5" stroke="#bbb"/><line x1="241.3" y1="0" x2="241.3" y2="4" stroke="#bbb"/><line x1="241.3" y1="214.5" x2="241.3" y2="218.5" stroke="#bbb"/><line x1="263.0" y1="0" x2="263.0" y2="5" stroke="#bbb"/><line x1="263.0" y1="214.5" x2="263.0" y2="218.5" stroke="#bbb"/><line x1="284.7" y1="0" x2="284.7" y2="4" stroke="#bbb"/><line x1="284.7" y1="214.5" x2="284.7" y2="218.5" stroke="#bbb"/><line x1="306.5" y1="0" x2="306.5" y2="4" stroke="#bbb"/><line x1="306.5" y1="214.5" x2="306.5" y2="218.5" stroke="#bbb"/><line x1="328.2" y1="0" x2="328.2" y2="4" stroke="#bbb"/><line x1="328.2" y1="214.5" x2="328.2" y2="218.5" stroke="#bbb"/><line x1="350.0" y1="0" x2="350.0" y2="4" stroke="#bbb"/><line x1="350.0" y1="214.5" x2="350.0" y2="218.5" stroke="#bbb"/><line x1="371.7" y1="0" x2="371.7" y2="5" stroke="#bbb"/><line x1="371.7" y1="214.5" x2="371.7" y2="218.5" stroke="#bbb"/><line x1="393.4" y1="0" x2="393.4" y2="4" stroke="#bbb"/><line x1="393.4" y1="214.5" x2="393.4" y2="218.5" stroke="#bbb"/><line x1="415.2" y1="0" x2="415.2" y2="4" stroke="#bbb"/><line x1="415.2" y1="214.5" x2="415.2" y2="218.5" stroke="#bbb"/><line x1="436.9" y1="0" x2="436.9" y2="4" stroke="#bbb"/><line x1="436.9" y1="214.5" x2="436.9" y2="218.5" stroke="#bbb"/><line x1="458.7" y1="0" x2="458.7" y2="4" stroke="#bbb"/><line x1="458.7" y1="214.5" x2="458.7" y2="218.5" stroke="#bbb"/><line x1="0" y1="3.6" x2="3" y2="3.6" stroke="#bbb"/><line x1="475" y1="3.6" x2="478" y2="3.6" stroke="#bbb"/><line x1="0" y1="16.2" x2="3" y2="16.2" stroke="#bbb"/><line x1="475" y1="16.2" x2="478" y2="16.2" stroke="#bbb"/><line x1="0" y1="28.8" x2="5" y2="28.8" stroke="#bbb"/><line x1="473" y1="28.8" x2="478" y2="28.8" stroke="#bbb"/><line x1="0" y1="41.4" x2="3" y2="41.4" stroke="#bbb"/><line x1="475" y1="41.4" x2="478" y2="41.4" stroke="#bbb"/><line x1="0" y1="54.0" x2="3" y2="54.0" stroke="#bbb"/><line x1="475" y1="54.0" x2="478" y2="54.0" stroke="#bbb"/><line x1="0" y1="66.6" x2="3" y2="66.6" stroke="#bbb"/><line x1="475" y1="66.6" x2="478" y2="66.6" stroke="#bbb"/><line x1="0" y1="79.2" x2="3" y2="79.2" stroke="#bbb"/><line x1="475" y1="79.2" x2="478" y2="79.2" stroke="#bbb"/><line x1="0" y1="91.8" x2="5" y2="91.8" stroke="#bbb"/><line x1="473" y1="91.8" x2="478" y2="91.8" stroke="#bbb"/><line x1="0" y1="104.4" x2="3" y2="104.4" stroke="#bbb"/><line x1="475" y1="104.4" x2="478" y2="104.4" stroke="#bbb"/><line x1="0" y1="117.0" x2="3" y2="117.0" stroke="#bbb"/><line x1="475" y1="117.0" x2="478" y2="117.0" stroke="#bbb"/><line x1="0" y1="129.6" x2="3" y2="129.6" stroke="#bbb"/><line x1="475" y1="129.6" x2="478" y2="129.6" stroke="#bbb"/><line x1="0" y1="142.2" x2="3" y2="142.2" stroke="#bbb"/><line x1="475" y1="142.2" x2="478" y2="142.2" stroke="#bbb"/><line x1="0" y1="154.8" x2="5" y2="154.8" stroke="#bbb"/><line x1="473" y1="154.8" x2="478" y2="154.8" stroke="#bbb"/><line x1="0" y1="167.4" x2="3" y2="167.4" stroke="#bbb"/><line x1="475" y1="167.4" x2="478" y2="167.4" stroke="#bbb"/><line x1="0" y1="180.0" x2="3" y2="180.0" stroke="#bbb"/><line x1="475" y1="180.0" x2="478" y2="180.0" stroke="#bbb"/><line x1="0" y1="192.6" x2="3" y2="192.6" stroke="#bbb"/><line x1="475" y1="192.6" x2="478" y2="192.6" stroke="#bbb"/><line x1="0" y1="205.2" x2="3" y2="205.2" stroke="#bbb"/><line x1="475" y1="205.2" x2="478" y2="205.2" stroke="#bbb"/><text x="46" y="215.5" font-family="Liberation Sans" font-size="7.5" fill="#d8d8d8" text-anchor="middle">-10 ns</text><text x="156" y="215.5" font-family="Liberation Sans" font-size="7.5" fill="#d8d8d8" text-anchor="middle">-5 ns</text><text x="263" y="215.5" font-family="Liberation Sans" font-size="7.5" fill="#d8d8d8" text-anchor="middle">0 s</text><text x="373" y="215.5" font-family="Liberation Sans" font-size="7.5" fill="#d8d8d8" text-anchor="middle">5 ns</text><text x="475" y="31.80000000000001" font-family="Liberation Sans" font-size="7.5" fill="#d8d8d8" text-anchor="end">300 khits</text><text x="475" y="94.80000000000001" font-family="Liberation Sans" font-size="7.5" fill="#d8d8d8" text-anchor="end">200 khits</text><text x="475" y="157.8" font-family="Liberation Sans" font-size="7.5" fill="#d8d8d8" text-anchor="end">100 khits</text></svg>
<svg style="left:464px;top:162px" width="19" height="18"><polygon points="0,0 19,0 19,18" fill="#6a6a6a"/><circle cx="13.5" cy="4.5" r="2.3" fill="none" stroke="#e0e0e0" stroke-width="1"/><line x1="11.8" y1="6.2" x2="8.5" y2="9.5" stroke="#e0e0e0" stroke-width="1.2"/></svg>
<div class="b" style="left:490px;top:144px;width:478px;height:13.5px;background:#3c3c3c"></div>
<div class="b" style="left:490px;top:157.5px;width:478px;height:218.5px;background:#000"></div>
<div class="t " style="left:497.5px;top:146.83px;font-size:9.3px;color:#e8e8e8;font-weight:400;">Plot 1 - Eye Diagram (Meas1)</div>
<svg style="left:953px;top:146.7px" width="10" height="10"><path d="M1.6 1.6L8.4 8.0M8.4 1.6L1.6 8.0" stroke="#c8c8c8" stroke-width="1.2"/></svg>
<div class="b" style="left:488px;top:143px;width:2px;height:234px;background:#d8d8d8"></div>
<div class="b" style="left:968px;top:143px;width:2px;height:234px;background:#d8d8d8"></div>
<div class="b" style="left:488px;top:143px;width:482px;height:1.5px;background:#d8d8d8"></div>
<div class="b" style="left:488px;top:376px;width:482px;height:1.5px;background:#d8d8d8"></div>
<svg style="left:490px;top:157.5px" width="478" height="218.5" viewBox="490 157.5 478 218.5"><line x1="549.4" y1="157.5" x2="549.4" y2="376.0" stroke="#777" stroke-dasharray="1,7.3"/><line x1="609.4" y1="157.5" x2="609.4" y2="376.0" stroke="#777" stroke-dasharray="1,7.3"/><line x1="669.4" y1="157.5" x2="669.4" y2="376.0" stroke="#777" stroke-dasharray="1,7.3"/><line x1="729.4" y1="157.5" x2="729.4" y2="376.0" stroke="#777" stroke-dasharray="1,7.3"/><line x1="789.4" y1="157.5" x2="789.4" y2="376.0" stroke="#777" stroke-dasharray="1,7.3"/><line x1="849.4" y1="157.5" x2="849.4" y2="376.0" stroke="#777" stroke-dasharray="1,7.3"/><line x1="909.4" y1="157.5" x2="909.4" y2="376.0" stroke="#777" stroke-dasharray="1,7.3"/><line x1="490" y1="343.4" x2="968" y2="343.4" stroke="#777" stroke-dasharray="1,11"/><line x1="490" y1="301.75" x2="968" y2="301.75" stroke="#777" stroke-dasharray="1,11"/><line x1="490" y1="260.09999999999997" x2="968" y2="260.09999999999997" stroke="#777" stroke-dasharray="1,11"/><line x1="490" y1="218.45" x2="968" y2="218.45" stroke="#777" stroke-dasharray="1,11"/><line x1="490" y1="176.79999999999998" x2="968" y2="176.79999999999998" stroke="#777" stroke-dasharray="1,11"/><line x1="496" y1="157.5" x2="496" y2="160.5" stroke="#bbb"/><line x1="496" y1="373.0" x2="496" y2="376.0" stroke="#bbb"/><line x1="508" y1="157.5" x2="508" y2="160.5" stroke="#bbb"/><line x1="508" y1="373.0" x2="508" y2="376.0" stroke="#bbb"/><line x1="520" y1="157.5" x2="520" y2="160.5" stroke="#bbb"/><line x1="520" y1="373.0" x2="520" y2="376.0" stroke="#bbb"/><line x1="532" y1="157.5" x2="532" y2="160.5" stroke="#bbb"/><line x1="532" y1="373.0" x2="532" y2="376.0" stroke="#bbb"/><line x1="544" y1="157.5" x2="544" y2="161.5" stroke="#bbb"/><line x1="544" y1="373.0" x2="544" y2="376.0" stroke="#bbb"/><line x1="556" y1="157.5" x2="556" y2="160.5" stroke="#bbb"/><line x1="556" y1="373.0" x2="556" y2="376.0" stroke="#bbb"/><line x1="568" y1="157.5" x2="568" y2="160.5" stroke="#bbb"/><line x1="568" y1="373.0" x2="568" y2="376.0" stroke="#bbb"/><line x1="580" y1="157.5" x2="580" y2="160.5" stroke="#bbb"/><line x1="580" y1="373.0" x2="580" y2="376.0" stroke="#bbb"/><line x1="592" y1="157.5" x2="592" y2="160.5" stroke="#bbb"/><line x1="592" y1="373.0" x2="592" y2="376.0" stroke="#bbb"/><line x1="604" y1="157.5" x2="604" y2="161.5" stroke="#bbb"/><line x1="604" y1="373.0" x2="604" y2="376.0" stroke="#bbb"/><line x1="616" y1="157.5" x2="616" y2="160.5" stroke="#bbb"/><line x1="616" y1="373.0" x2="616" y2="376.0" stroke="#bbb"/><line x1="628" y1="157.5" x2="628" y2="160.5" stroke="#bbb"/><line x1="628" y1="373.0" x2="628" y2="376.0" stroke="#bbb"/><line x1="640" y1="157.5" x2="640" y2="160.5" stroke="#bbb"/><line x1="640" y1="373.0" x2="640" y2="376.0" stroke="#bbb"/><line x1="652" y1="157.5" x2="652" y2="160.5" stroke="#bbb"/><line x1="652" y1="373.0" x2="652" y2="376.0" stroke="#bbb"/><line x1="664" y1="157.5" x2="664" y2="161.5" stroke="#bbb"/><line x1="664" y1="373.0" x2="664" y2="376.0" stroke="#bbb"/><line x1="676" y1="157.5" x2="676" y2="160.5" stroke="#bbb"/><line x1="676" y1="373.0" x2="676" y2="376.0" stroke="#bbb"/><line x1="688" y1="157.5" x2="688" y2="160.5" stroke="#bbb"/><line x1="688" y1="373.0" x2="688" y2="376.0" stroke="#bbb"/><line x1="700" y1="157.5" x2="700" y2="160.5" stroke="#bbb"/><line x1="700" y1="373.0" x2="700" y2="376.0" stroke="#bbb"/><line x1="712" y1="157.5" x2="712" y2="160.5" stroke="#bbb"/><line x1="712" y1="373.0" x2="712" y2="376.0" stroke="#bbb"/><line x1="724" y1="157.5" x2="724" y2="161.5" stroke="#bbb"/><line x1="724" y1="373.0" x2="724" y2="376.0" stroke="#bbb"/><line x1="736" y1="157.5" x2="736" y2="160.5" stroke="#bbb"/><line x1="736" y1="373.0" x2="736" y2="376.0" stroke="#bbb"/><line x1="748" y1="157.5" x2="748" y2="160.5" stroke="#bbb"/><line x1="748" y1="373.0" x2="748" y2="376.0" stroke="#bbb"/><line x1="760" y1="157.5" x2="760" y2="160.5" stroke="#bbb"/><line x1="760" y1="373.0" x2="760" y2="376.0" stroke="#bbb"/><line x1="772" y1="157.5" x2="772" y2="160.5" stroke="#bbb"/><line x1="772" y1="373.0" x2="772" y2="376.0" stroke="#bbb"/><line x1="784" y1="157.5" x2="784" y2="161.5" stroke="#bbb"/><line x1="784" y1="373.0" x2="784" y2="376.0" stroke="#bbb"/><line x1="796" y1="157.5" x2="796" y2="160.5" stroke="#bbb"/><line x1="796" y1="373.0" x2="796" y2="376.0" stroke="#bbb"/><line x1="808" y1="157.5" x2="808" y2="160.5" stroke="#bbb"/><line x1="808" y1="373.0" x2="808" y2="376.0" stroke="#bbb"/><line x1="820" y1="157.5" x2="820" y2="160.5" stroke="#bbb"/><line x1="820" y1="373.0" x2="820" y2="376.0" stroke="#bbb"/><line x1="832" y1="157.5" x2="832" y2="160.5" stroke="#bbb"/><line x1="832" y1="373.0" x2="832" y2="376.0" stroke="#bbb"/><line x1="844" y1="157.5" x2="844" y2="161.5" stroke="#bbb"/><line x1="844" y1="373.0" x2="844" y2="376.0" stroke="#bbb"/><line x1="856" y1="157.5" x2="856" y2="160.5" stroke="#bbb"/><line x1="856" y1="373.0" x2="856" y2="376.0" stroke="#bbb"/><line x1="868" y1="157.5" x2="868" y2="160.5" stroke="#bbb"/><line x1="868" y1="373.0" x2="868" y2="376.0" stroke="#bbb"/><line x1="880" y1="157.5" x2="880" y2="160.5" stroke="#bbb"/><line x1="880" y1="373.0" x2="880" y2="376.0" stroke="#bbb"/><line x1="892" y1="157.5" x2="892" y2="160.5" stroke="#bbb"/><line x1="892" y1="373.0" x2="892" y2="376.0" stroke="#bbb"/><line x1="904" y1="157.5" x2="904" y2="161.5" stroke="#bbb"/><line x1="904" y1="373.0" x2="904" y2="376.0" stroke="#bbb"/><line x1="916" y1="157.5" x2="916" y2="160.5" stroke="#bbb"/><line x1="916" y1="373.0" x2="916" y2="376.0" stroke="#bbb"/><line x1="928" y1="157.5" x2="928" y2="160.5" stroke="#bbb"/><line x1="928" y1="373.0" x2="928" y2="376.0" stroke="#bbb"/><line x1="940" y1="157.5" x2="940" y2="160.5" stroke="#bbb"/><line x1="940" y1="373.0" x2="940" y2="376.0" stroke="#bbb"/><line x1="952" y1="157.5" x2="952" y2="160.5" stroke="#bbb"/><line x1="952" y1="373.0" x2="952" y2="376.0" stroke="#bbb"/><line x1="964" y1="157.5" x2="964" y2="161.5" stroke="#bbb"/><line x1="964" y1="373.0" x2="964" y2="376.0" stroke="#bbb"/><line x1="490" y1="343.4" x2="495" y2="343.4" stroke="#bbb"/><line x1="963" y1="343.4" x2="968" y2="343.4" stroke="#bbb"/><line x1="490" y1="335.1" x2="493" y2="335.1" stroke="#bbb"/><line x1="965" y1="335.1" x2="968" y2="335.1" stroke="#bbb"/><line x1="490" y1="326.7" x2="493" y2="326.7" stroke="#bbb"/><line x1="965" y1="326.7" x2="968" y2="326.7" stroke="#bbb"/><line x1="490" y1="318.4" x2="493" y2="318.4" stroke="#bbb"/><line x1="965" y1="318.4" x2="968" y2="318.4" stroke="#bbb"/><line x1="490" y1="310.1" x2="493" y2="310.1" stroke="#bbb"/><line x1="965" y1="310.1" x2="968" y2="310.1" stroke="#bbb"/><line x1="490" y1="301.8" x2="495" y2="301.8" stroke="#bbb"/><line x1="963" y1="301.8" x2="968" y2="301.8" stroke="#bbb"/><line x1="490" y1="293.4" x2="493" y2="293.4" stroke="#bbb"/><line x1="965" y1="293.4" x2="968" y2="293.4" stroke="#bbb"/><line x1="490" y1="285.1" x2="493" y2="285.1" stroke="#bbb"/><line x1="965" y1="285.1" x2="968" y2="285.1" stroke="#bbb"/><line x1="490" y1="276.8" x2="493" y2="276.8" stroke="#bbb"/><line x1="965" y1="276.8" x2="968" y2="276.8" stroke="#bbb"/><line x1="490" y1="268.4" x2="493" y2="268.4" stroke="#bbb"/><line x1="965" y1="268.4" x2="968" y2="268.4" stroke="#bbb"/><line x1="490" y1="260.1" x2="495" y2="260.1" stroke="#bbb"/><line x1="963" y1="260.1" x2="968" y2="260.1" stroke="#bbb"/><line x1="490" y1="251.8" x2="493" y2="251.8" stroke="#bbb"/><line x1="965" y1="251.8" x2="968" y2="251.8" stroke="#bbb"/><line x1="490" y1="243.4" x2="493" y2="243.4" stroke="#bbb"/><line x1="965" y1="243.4" x2="968" y2="243.4" stroke="#bbb"/><line x1="490" y1="235.1" x2="493" y2="235.1" stroke="#bbb"/><line x1="965" y1="235.1" x2="968" y2="235.1" stroke="#bbb"/><line x1="490" y1="226.8" x2="493" y2="226.8" stroke="#bbb"/><line x1="965" y1="226.8" x2="968" y2="226.8" stroke="#bbb"/><line x1="490" y1="218.4" x2="495" y2="218.4" stroke="#bbb"/><line x1="963" y1="218.4" x2="968" y2="218.4" stroke="#bbb"/><line x1="490" y1="210.1" x2="493" y2="210.1" stroke="#bbb"/><line x1="965" y1="210.1" x2="968" y2="210.1" stroke="#bbb"/><line x1="490" y1="201.8" x2="493" y2="201.8" stroke="#bbb"/><line x1="965" y1="201.8" x2="968" y2="201.8" stroke="#bbb"/><line x1="490" y1="193.5" x2="493" y2="193.5" stroke="#bbb"/><line x1="965" y1="193.5" x2="968" y2="193.5" stroke="#bbb"/><line x1="490" y1="185.1" x2="493" y2="185.1" stroke="#bbb"/><line x1="965" y1="185.1" x2="968" y2="185.1" stroke="#bbb"/><line x1="490" y1="176.8" x2="495" y2="176.8" stroke="#bbb"/><line x1="963" y1="176.8" x2="968" y2="176.8" stroke="#bbb"/><line x1="490" y1="168.5" x2="493" y2="168.5" stroke="#bbb"/><line x1="965" y1="168.5" x2="968" y2="168.5" stroke="#bbb"/><line x1="490" y1="160.1" x2="493" y2="160.1" stroke="#bbb"/><line x1="965" y1="160.1" x2="968" y2="160.1" stroke="#bbb"/><path d="M830,182 L845,182 L846,340 L844,352 L832,350 L830,335 Z" fill="#0018ff"/><line x1="832.1" y1="195.8" x2="832.7" y2="350.7" stroke="#0018ff" stroke-width="1"/><line x1="832.7" y1="199.4" x2="831.8" y2="340.2" stroke="#0018ff" stroke-width="1"/><line x1="833.7" y1="194.0" x2="834.5" y2="332.5" stroke="#0018ff" stroke-width="1"/><line x1="831.3" y1="185.9" x2="831.4" y2="342.6" stroke="#0018ff" stroke-width="1"/><line x1="829.1" y1="185.3" x2="828.6" y2="350.2" stroke="#0018ff" stroke-width="1"/><line x1="832.8" y1="184.2" x2="833.4" y2="333.1" stroke="#0018ff" stroke-width="1"/><line x1="832.1" y1="183.5" x2="831.1" y2="349.2" stroke="#0018ff" stroke-width="1"/><line x1="830.0" y1="185.3" x2="831.0" y2="349.2" stroke="#0018ff" stroke-width="1"/><line x1="830.4" y1="200.2" x2="830.5" y2="344.9" stroke="#0018ff" stroke-width="1"/><line x1="830.0" y1="199.8" x2="830.4" y2="351.3" stroke="#0018ff" stroke-width="1"/><line x1="838.9" y1="195.0" x2="838.9" y2="271.7" stroke="#000" stroke-width="0.8" opacity="0.7"/><line x1="831.7" y1="190.4" x2="831.7" y2="253.9" stroke="#000" stroke-width="0.8" opacity="0.7"/><line x1="833.0" y1="204.1" x2="833.0" y2="250.2" stroke="#000" stroke-width="0.8" opacity="0.7"/><line x1="836.8" y1="196.1" x2="836.8" y2="268.6" stroke="#000" stroke-width="0.8" opacity="0.7"/><line x1="838.2" y1="200.4" x2="838.2" y2="268.9" stroke="#000" stroke-width="0.8" opacity="0.7"/><path d="M602.5,173.6 L613.0,173.6 L618.0,339.6 L602.5,339.6 Z" fill="#f8e800" stroke="#0010ff" stroke-width="1.6"/><path d="M602.5,173.6 L613.0,173.6 L618.0,339.6 L602.5,339.6 Z" fill="#f8e800" stroke="#40e040" stroke-width="0.6"/><path d="M603.5,334.6 L606.0,358.6 L608.0,365.6 L610.5,358.6 L617.0,334.6" fill="#f8e800" stroke="#0010ff" stroke-width="1.4"/><path d="M842.5,173.6 L852.0,173.6 L856.5,339.6 L844.0,339.6 Z" fill="#f8e800" stroke="#0010ff" stroke-width="1.6"/><path d="M842.5,173.6 L852.0,173.6 L856.5,339.6 L844.0,339.6 Z" fill="#f8e800" stroke="#40e040" stroke-width="0.6"/><path d="M845.0,334.6 L847.5,358.6 L849.5,365.6 L852.0,358.6 L855.5,334.6" fill="#f8e800" stroke="#0010ff" stroke-width="1.4"/><path d="M490.0,178.7 L492.0,178.7 L494.0,176.5 L496.0,176.6 L498.0,178.4 L500.0,178.2 L502.0,178.0 L504.0,177.1 L506.0,177.9 L508.0,177.9 L510.0,177.8 L512.0,176.8 L514.0,177.4 L516.0,177.3 L518.0,178.1 L520.0,178.8 L522.0,178.7 L524.0,177.7 L526.0,177.5 L528.0,177.0 L530.0,176.5 L532.0,176.5 L534.0,177.5 L536.0,177.2 L538.0,177.3 L540.0,178.5 L542.0,177.7 L544.0,177.7 L546.0,177.0 L548.0,176.5 L550.0,177.2 L552.0,176.7 L554.0,177.6 L556.0,178.8 L558.0,178.0 L560.0,176.8 L562.0,178.5 L564.0,178.3 L566.0,178.2 L568.0,178.6 L570.0,178.2 L572.0,178.3 L574.0,177.2 L576.0,178.8 L578.0,178.7 L580.0,176.8 L582.0,178.2 L584.0,178.1 L586.0,177.5 L588.0,177.7 L590.0,177.6 L592.0,178.6 L594.0,177.6 L596.0,178.4 L598.0,177.2 L600.0,178.5 L602.0,178.6 L604.0,177.5 L606.0,177.8" fill="none" stroke="#0010ff" stroke-width="10.00" stroke-linejoin="round"/><path d="M490.0,335.4 L492.0,335.5 L494.0,334.6 L496.0,333.9 L498.0,333.2 L500.0,335.1 L502.0,334.5 L504.0,335.3 L506.0,334.2 L508.0,335.4 L510.0,334.0 L512.0,335.4 L514.0,335.2 L516.0,334.4 L518.0,334.7 L520.0,335.1 L522.0,333.7 L524.0,334.8 L526.0,335.5 L528.0,333.9 L530.0,335.4 L532.0,335.1 L534.0,335.6 L536.0,334.1 L538.0,333.5 L540.0,335.4 L542.0,335.5 L544.0,334.4 L546.0,333.5 L548.0,333.8 L550.0,335.0 L552.0,334.0 L554.0,335.9 L556.0,334.8 L558.0,333.8 L560.0,335.0 L562.0,334.2 L564.0,335.8 L566.0,335.7 L568.0,334.6 L570.0,335.0 L572.0,335.2 L574.0,335.5 L576.0,335.9 L578.0,333.3 L580.0,334.2 L582.0,334.9 L584.0,334.1 L586.0,334.8 L588.0,333.5 L590.0,335.7 L592.0,334.7 L594.0,333.5 L596.0,335.1 L598.0,334.1 L600.0,333.7 L602.0,334.6 L604.0,333.6 L606.0,333.8 L608.0,335.6 L610.0,335.2 L612.0,333.2 L614.0,335.4 L616.0,333.2 L618.0,334.1 L620.0,335.7 L622.0,334.9 L624.0,334.1 L626.0,334.3 L628.0,334.3 L630.0,333.6 L632.0,336.0 L634.0,333.4 L636.0,334.4 L638.0,335.3 L640.0,334.3 L642.0,335.9 L644.0,333.9 L646.0,335.9 L648.0,335.7 L650.0,335.1 L652.0,335.7 L654.0,334.5 L656.0,335.5 L658.0,335.4 L660.0,334.6 L662.0,334.5 L664.0,335.2 L666.0,334.3 L668.0,333.4 L670.0,335.3 L672.0,333.9 L674.0,334.6 L676.0,335.4 L678.0,333.7 L680.0,333.3 L682.0,333.5 L684.0,334.9 L686.0,334.2 L688.0,333.9 L690.0,334.5 L692.0,335.8 L694.0,333.9 L696.0,334.3 L698.0,335.7 L700.0,334.9 L702.0,334.0 L704.0,334.5 L706.0,334.5 L708.0,333.6 L710.0,334.3 L712.0,334.1 L714.0,335.5 L716.0,334.1 L718.0,335.0 L720.0,335.9 L722.0,335.8 L724.0,334.3 L726.0,334.9 L728.0,334.1 L730.0,334.3 L732.0,334.6 L734.0,335.4 L736.0,335.8 L738.0,334.0 L740.0,333.2 L742.0,334.5 L744.0,333.4 L746.0,333.3 L748.0,335.4 L750.0,333.5 L752.0,335.2 L754.0,334.2 L756.0,335.8 L758.0,335.6 L760.0,333.4 L762.0,333.7 L764.0,335.9 L766.0,334.9 L768.0,334.4 L770.0,335.4 L772.0,335.5 L774.0,334.6 L776.0,334.5 L778.0,333.5 L780.0,334.2 L782.0,333.6 L784.0,335.0 L786.0,334.9 L788.0,333.6 L790.0,335.0 L792.0,333.5 L794.0,333.5 L796.0,335.0 L798.0,334.5 L800.0,335.7 L802.0,335.0 L804.0,335.2 L806.0,333.6 L808.0,335.5 L810.0,333.4 L812.0,334.9 L814.0,335.8 L816.0,335.7 L818.0,335.7 L820.0,334.5 L822.0,335.1 L824.0,335.4 L826.0,333.6 L828.0,335.8 L830.0,335.7 L832.0,334.4 L834.0,335.4 L836.0,334.5 L838.0,334.0 L840.0,335.2 L842.0,333.4 L844.0,335.4 L846.0,335.9 L848.0,334.0 L850.0,335.8 L852.0,333.4 L854.0,335.6 L856.0,334.0 L858.0,335.9 L860.0,334.4 L862.0,335.8 L864.0,333.3 L866.0,333.4 L868.0,335.5 L870.0,335.0 L872.0,334.7 L874.0,333.3 L876.0,333.7 L878.0,334.2 L880.0,333.3 L882.0,336.0 L884.0,335.3 L886.0,335.9 L888.0,335.2 L890.0,334.2 L892.0,333.4 L894.0,335.2 L896.0,333.5 L898.0,334.7 L900.0,334.5 L902.0,334.6 L904.0,333.4 L906.0,333.4 L908.0,334.7 L910.0,333.3 L912.0,334.7 L914.0,333.6 L916.0,334.0 L918.0,333.6 L920.0,334.8 L922.0,334.3 L924.0,333.8 L926.0,333.8 L928.0,334.8 L930.0,335.7 L932.0,334.4 L934.0,333.7 L936.0,334.1 L938.0,333.9 L940.0,334.8 L942.0,335.4 L944.0,334.8 L946.0,333.7 L948.0,334.1 L950.0,334.3 L952.0,334.4 L954.0,334.3 L956.0,336.0 L958.0,334.7 L960.0,335.1 L962.0,335.2 L964.0,335.0 L966.0,335.5 L968.0,334.2" fill="none" stroke="#0010ff" stroke-width="10.00" stroke-linejoin="round"/><path d="M612.0,189.8 L614.0,190.1 L616.0,188.9 L618.0,189.0 L620.0,188.5 L622.0,186.2 L624.0,185.5 L626.0,187.7 L628.0,185.4 L630.0,184.8 L632.0,186.9 L634.0,184.8 L636.0,185.6 L638.0,184.1 L640.0,184.3 L642.0,182.4 L644.0,183.6 L646.0,184.1 L648.0,182.7 L650.0,183.2 L652.0,182.7 L654.0,180.5 L656.0,182.5 L658.0,181.8 L660.0,180.6 L662.0,179.6 L664.0,182.1 L666.0,180.7 L668.0,181.3 L670.0,181.6 L672.0,181.0 L674.0,181.5 L676.0,179.7 L678.0,180.9 L680.0,179.6 L682.0,181.1 L684.0,180.8 L686.0,178.2 L688.0,178.2 L690.0,178.4 L692.0,180.7 L694.0,178.9 L696.0,179.4 L698.0,178.3 L700.0,178.9 L702.0,178.5 L704.0,178.3 L706.0,179.0 L708.0,178.9 L710.0,179.9 L712.0,179.1 L714.0,179.9 L716.0,179.6 L718.0,180.0 L720.0,178.9 L722.0,177.2 L724.0,179.4 L726.0,179.7 L728.0,179.5 L730.0,178.4 L732.0,178.8 L734.0,177.2 L736.0,179.2 L738.0,178.3 L740.0,177.4 L742.0,176.6 L744.0,179.1 L746.0,179.5 L748.0,176.6 L750.0,178.9 L752.0,177.6 L754.0,176.8 L756.0,177.2 L758.0,178.7 L760.0,179.1 L762.0,176.4 L764.0,178.2 L766.0,176.4 L768.0,178.5 L770.0,177.3 L772.0,179.0 L774.0,179.3 L776.0,177.8 L778.0,179.4 L780.0,177.1 L782.0,176.4 L784.0,178.1 L786.0,176.2 L788.0,176.8 L790.0,177.4 L792.0,178.1 L794.0,176.6 L796.0,176.2 L798.0,178.9 L800.0,177.1 L802.0,179.2 L804.0,179.0 L806.0,177.3 L808.0,177.5 L810.0,177.7 L812.0,178.1 L814.0,178.0 L816.0,177.9 L818.0,178.0 L820.0,179.1 L822.0,177.7 L824.0,177.4 L826.0,178.4 L828.0,176.8 L830.0,177.0 L832.0,179.2 L834.0,177.7 L836.0,177.8 L838.0,176.1 L840.0,177.4 L842.0,177.9 L844.0,176.1" fill="none" stroke="#0010ff" stroke-width="10.00" stroke-linejoin="round"/><path d="M612.0,194.6 L614.0,195.4 L616.0,194.5 L618.0,194.4 L620.0,190.9 L622.0,190.4 L624.0,189.3 L626.0,189.0 L628.0,190.4 L630.0,187.3 L632.0,188.4 L634.0,186.5 L636.0,186.4 L638.0,186.4 L640.0,187.6 L642.0,186.2 L644.0,183.4 L646.0,184.1 L648.0,183.2 L650.0,185.7 L652.0,185.1 L654.0,184.8 L656.0,184.6 L658.0,183.9 L660.0,184.5 L662.0,183.6 L664.0,181.2 L666.0,183.3 L668.0,181.7 L670.0,182.5 L672.0,181.6" fill="none" stroke="#0010ff" stroke-width="8.50" stroke-linejoin="round"/><path d="M611.0,188.3 L613.0,188.2 L615.0,187.5 L617.0,183.8 L619.0,185.5 L621.0,184.4 L623.0,184.5 L625.0,182.5 L627.0,182.4 L629.0,183.1 L631.0,181.9 L633.0,182.6 L635.0,180.6 L637.0,180.6 L639.0,182.9 L641.0,181.5 L643.0,181.6 L645.0,182.3 L647.0,180.6 L649.0,179.2 L651.0,182.0 L653.0,181.0 L655.0,181.1 L657.0,180.8" fill="none" stroke="#0010ff" stroke-width="7.50" stroke-linejoin="round"/><path d="M853.0,189.8 L855.0,188.7 L857.0,189.0 L859.0,187.6 L861.0,186.7 L863.0,187.3 L865.0,188.4 L867.0,187.6 L869.0,187.0 L871.0,184.8 L873.0,185.4 L875.0,184.2 L877.0,183.5 L879.0,182.9 L881.0,182.9 L883.0,184.9 L885.0,184.3 L887.0,183.9 L889.0,183.6 L891.0,181.4 L893.0,181.5 L895.0,182.3 L897.0,182.4 L899.0,182.6 L901.0,182.5 L903.0,179.8 L905.0,181.2 L907.0,181.3 L909.0,180.6 L911.0,179.4 L913.0,180.2 L915.0,178.8 L917.0,181.4 L919.0,181.1 L921.0,179.9 L923.0,179.0 L925.0,180.9 L927.0,179.7 L929.0,180.6 L931.0,180.4 L933.0,179.2 L935.0,178.8 L937.0,179.3 L939.0,178.7 L941.0,177.8 L943.0,178.2 L945.0,179.8 L947.0,177.2 L949.0,177.2 L951.0,179.0 L953.0,177.8 L955.0,178.6 L957.0,178.4 L959.0,177.9 L961.0,179.9 L963.0,177.3 L965.0,178.0 L967.0,177.3" fill="none" stroke="#0010ff" stroke-width="10.00" stroke-linejoin="round"/><path d="M853.0,194.0 L855.0,195.5 L857.0,194.4 L859.0,194.7 L861.0,191.3 L863.0,190.5 L865.0,191.7 L867.0,190.7 L869.0,188.6 L871.0,189.5 L873.0,187.8 L875.0,188.8 L877.0,185.6 L879.0,185.6 L881.0,187.8 L883.0,185.2 L885.0,184.4 L887.0,186.2 L889.0,185.1 L891.0,182.8 L893.0,184.1 L895.0,184.2 L897.0,181.9 L899.0,183.6 L901.0,181.2 L903.0,181.8 L905.0,180.5 L907.0,180.8 L909.0,183.6 L911.0,181.1 L913.0,183.3" fill="none" stroke="#0010ff" stroke-width="8.50" stroke-linejoin="round"/><path d="M852.0,187.4 L854.0,187.7 L856.0,184.6 L858.0,187.5 L860.0,183.9 L862.0,185.4 L864.0,182.7 L866.0,185.0 L868.0,182.3 L870.0,184.2 L872.0,184.0 L874.0,183.8 L876.0,182.3 L878.0,183.7 L880.0,184.0 L882.0,180.3 L884.0,181.6 L886.0,183.2 L888.0,182.1 L890.0,180.8 L892.0,180.0 L894.0,182.5 L896.0,178.8 L898.0,181.4" fill="none" stroke="#0010ff" stroke-width="7.50" stroke-linejoin="round"/><path d="M612.0,334.6 L613.0,356.1 L616.6,321.4 L620.2,345.7 L623.8,329.1 L627.4,341.7 L631.0,331.4 L634.6,337.8 L638.2,330.5 L641.8,339.9 L645.4,332.9 L649.0,334.0 L652.6,331.8" fill="none" stroke="#0010ff" stroke-width="6.00" stroke-linejoin="round"/><path d="M614.0,334.6 L615.5,321.4 L619.1,344.8 L622.7,329.0 L626.3,341.3 L629.9,331.3 L633.5,337.5 L637.1,332.5 L640.7,338.8 L644.3,332.5 L647.9,334.6 L651.5,332.2 L655.1,337.0" fill="none" stroke="#0010ff" stroke-width="6.00" stroke-linejoin="round"/><path d="M616.0,334.6 L618.0,348.5 L621.6,328.3 L625.2,341.9 L628.8,329.4 L632.4,337.4 L636.0,330.9 L639.6,335.4 L643.2,332.5 L646.8,334.7 L650.4,332.8 L654.0,336.2 L657.6,333.0" fill="none" stroke="#0010ff" stroke-width="6.00" stroke-linejoin="round"/><path d="M853.0,334.6 L854.0,356.5 L857.6,321.0 L861.2,343.5 L864.8,329.8 L868.4,341.3 L872.0,331.4 L875.6,336.8 L879.2,334.3 L882.8,336.7 L886.4,334.5 L890.0,335.8 L893.6,330.9" fill="none" stroke="#0010ff" stroke-width="6.00" stroke-linejoin="round"/><path d="M855.0,334.6 L856.5,323.7 L860.1,345.1 L863.7,328.0 L867.3,339.4 L870.9,331.1 L874.5,337.6 L878.1,330.4 L881.7,337.1 L885.3,332.8 L888.9,336.8 L892.5,332.0 L896.1,338.4" fill="none" stroke="#0010ff" stroke-width="6.00" stroke-linejoin="round"/><path d="M857.0,334.6 L859.0,348.0 L862.6,327.9 L866.2,341.8 L869.8,331.0 L873.4,337.9 L877.0,331.5 L880.6,336.6 L884.2,333.1 L887.8,335.5 L891.4,334.2 L895.0,335.3 L898.6,334.6" fill="none" stroke="#0010ff" stroke-width="6.00" stroke-linejoin="round"/><path d="M490.0,178.7 L492.0,178.7 L494.0,176.5 L496.0,176.6 L498.0,178.4 L500.0,178.2 L502.0,178.0 L504.0,177.1 L506.0,177.9 L508.0,177.9 L510.0,177.8 L512.0,176.8 L514.0,177.4 L516.0,177.3 L518.0,178.1 L520.0,178.8 L522.0,178.7 L524.0,177.7 L526.0,177.5 L528.0,177.0 L530.0,176.5 L532.0,176.5 L534.0,177.5 L536.0,177.2 L538.0,177.3 L540.0,178.5 L542.0,177.7 L544.0,177.7 L546.0,177.0 L548.0,176.5 L550.0,177.2 L552.0,176.7 L554.0,177.6 L556.0,178.8 L558.0,178.0 L560.0,176.8 L562.0,178.5 L564.0,178.3 L566.0,178.2 L568.0,178.6 L570.0,178.2 L572.0,178.3 L574.0,177.2 L576.0,178.8 L578.0,178.7 L580.0,176.8 L582.0,178.2 L584.0,178.1 L586.0,177.5 L588.0,177.7 L590.0,177.6 L592.0,178.6 L594.0,177.6 L596.0,178.4 L598.0,177.2 L600.0,178.5 L602.0,178.6 L604.0,177.5 L606.0,177.8" fill="none" stroke="#30e040" stroke-width="8.20" stroke-linejoin="round"/><path d="M490.0,335.4 L492.0,335.5 L494.0,334.6 L496.0,333.9 L498.0,333.2 L500.0,335.1 L502.0,334.5 L504.0,335.3 L506.0,334.2 L508.0,335.4 L510.0,334.0 L512.0,335.4 L514.0,335.2 L516.0,334.4 L518.0,334.7 L520.0,335.1 L522.0,333.7 L524.0,334.8 L526.0,335.5 L528.0,333.9 L530.0,335.4 L532.0,335.1 L534.0,335.6 L536.0,334.1 L538.0,333.5 L540.0,335.4 L542.0,335.5 L544.0,334.4 L546.0,333.5 L548.0,333.8 L550.0,335.0 L552.0,334.0 L554.0,335.9 L556.0,334.8 L558.0,333.8 L560.0,335.0 L562.0,334.2 L564.0,335.8 L566.0,335.7 L568.0,334.6 L570.0,335.0 L572.0,335.2 L574.0,335.5 L576.0,335.9 L578.0,333.3 L580.0,334.2 L582.0,334.9 L584.0,334.1 L586.0,334.8 L588.0,333.5 L590.0,335.7 L592.0,334.7 L594.0,333.5 L596.0,335.1 L598.0,334.1 L600.0,333.7 L602.0,334.6 L604.0,333.6 L606.0,333.8 L608.0,335.6 L610.0,335.2 L612.0,333.2 L614.0,335.4 L616.0,333.2 L618.0,334.1 L620.0,335.7 L622.0,334.9 L624.0,334.1 L626.0,334.3 L628.0,334.3 L630.0,333.6 L632.0,336.0 L634.0,333.4 L636.0,334.4 L638.0,335.3 L640.0,334.3 L642.0,335.9 L644.0,333.9 L646.0,335.9 L648.0,335.7 L650.0,335.1 L652.0,335.7 L654.0,334.5 L656.0,335.5 L658.0,335.4 L660.0,334.6 L662.0,334.5 L664.0,335.2 L666.0,334.3 L668.0,333.4 L670.0,335.3 L672.0,333.9 L674.0,334.6 L676.0,335.4 L678.0,333.7 L680.0,333.3 L682.0,333.5 L684.0,334.9 L686.0,334.2 L688.0,333.9 L690.0,334.5 L692.0,335.8 L694.0,333.9 L696.0,334.3 L698.0,335.7 L700.0,334.9 L702.0,334.0 L704.0,334.5 L706.0,334.5 L708.0,333.6 L710.0,334.3 L712.0,334.1 L714.0,335.5 L716.0,334.1 L718.0,335.0 L720.0,335.9 L722.0,335.8 L724.0,334.3 L726.0,334.9 L728.0,334.1 L730.0,334.3 L732.0,334.6 L734.0,335.4 L736.0,335.8 L738.0,334.0 L740.0,333.2 L742.0,334.5 L744.0,333.4 L746.0,333.3 L748.0,335.4 L750.0,333.5 L752.0,335.2 L754.0,334.2 L756.0,335.8 L758.0,335.6 L760.0,333.4 L762.0,333.7 L764.0,335.9 L766.0,334.9 L768.0,334.4 L770.0,335.4 L772.0,335.5 L774.0,334.6 L776.0,334.5 L778.0,333.5 L780.0,334.2 L782.0,333.6 L784.0,335.0 L786.0,334.9 L788.0,333.6 L790.0,335.0 L792.0,333.5 L794.0,333.5 L796.0,335.0 L798.0,334.5 L800.0,335.7 L802.0,335.0 L804.0,335.2 L806.0,333.6 L808.0,335.5 L810.0,333.4 L812.0,334.9 L814.0,335.8 L816.0,335.7 L818.0,335.7 L820.0,334.5 L822.0,335.1 L824.0,335.4 L826.0,333.6 L828.0,335.8 L830.0,335.7 L832.0,334.4 L834.0,335.4 L836.0,334.5 L838.0,334.0 L840.0,335.2 L842.0,333.4 L844.0,335.4 L846.0,335.9 L848.0,334.0 L850.0,335.8 L852.0,333.4 L854.0,335.6 L856.0,334.0 L858.0,335.9 L860.0,334.4 L862.0,335.8 L864.0,333.3 L866.0,333.4 L868.0,335.5 L870.0,335.0 L872.0,334.7 L874.0,333.3 L876.0,333.7 L878.0,334.2 L880.0,333.3 L882.0,336.0 L884.0,335.3 L886.0,335.9 L888.0,335.2 L890.0,334.2 L892.0,333.4 L894.0,335.2 L896.0,333.5 L898.0,334.7 L900.0,334.5 L902.0,334.6 L904.0,333.4 L906.0,333.4 L908.0,334.7 L910.0,333.3 L912.0,334.7 L914.0,333.6 L916.0,334.0 L918.0,333.6 L920.0,334.8 L922.0,334.3 L924.0,333.8 L926.0,333.8 L928.0,334.8 L930.0,335.7 L932.0,334.4 L934.0,333.7 L936.0,334.1 L938.0,333.9 L940.0,334.8 L942.0,335.4 L944.0,334.8 L946.0,333.7 L948.0,334.1 L950.0,334.3 L952.0,334.4 L954.0,334.3 L956.0,336.0 L958.0,334.7 L960.0,335.1 L962.0,335.2 L964.0,335.0 L966.0,335.5 L968.0,334.2" fill="none" stroke="#30e040" stroke-width="8.20" stroke-linejoin="round"/><path d="M612.0,189.8 L614.0,190.1 L616.0,188.9 L618.0,189.0 L620.0,188.5 L622.0,186.2 L624.0,185.5 L626.0,187.7 L628.0,185.4 L630.0,184.8 L632.0,186.9 L634.0,184.8 L636.0,185.6 L638.0,184.1 L640.0,184.3 L642.0,182.4 L644.0,183.6 L646.0,184.1 L648.0,182.7 L650.0,183.2 L652.0,182.7 L654.0,180.5 L656.0,182.5 L658.0,181.8 L660.0,180.6 L662.0,179.6 L664.0,182.1 L666.0,180.7 L668.0,181.3 L670.0,181.6 L672.0,181.0 L674.0,181.5 L676.0,179.7 L678.0,180.9 L680.0,179.6 L682.0,181.1 L684.0,180.8 L686.0,178.2 L688.0,178.2 L690.0,178.4 L692.0,180.7 L694.0,178.9 L696.0,179.4 L698.0,178.3 L700.0,178.9 L702.0,178.5 L704.0,178.3 L706.0,179.0 L708.0,178.9 L710.0,179.9 L712.0,179.1 L714.0,179.9 L716.0,179.6 L718.0,180.0 L720.0,178.9 L722.0,177.2 L724.0,179.4 L726.0,179.7 L728.0,179.5 L730.0,178.4 L732.0,178.8 L734.0,177.2 L736.0,179.2 L738.0,178.3 L740.0,177.4 L742.0,176.6 L744.0,179.1 L746.0,179.5 L748.0,176.6 L750.0,178.9 L752.0,177.6 L754.0,176.8 L756.0,177.2 L758.0,178.7 L760.0,179.1 L762.0,176.4 L764.0,178.2 L766.0,176.4 L768.0,178.5 L770.0,177.3 L772.0,179.0 L774.0,179.3 L776.0,177.8 L778.0,179.4 L780.0,177.1 L782.0,176.4 L784.0,178.1 L786.0,176.2 L788.0,176.8 L790.0,177.4 L792.0,178.1 L794.0,176.6 L796.0,176.2 L798.0,178.9 L800.0,177.1 L802.0,179.2 L804.0,179.0 L806.0,177.3 L808.0,177.5 L810.0,177.7 L812.0,178.1 L814.0,178.0 L816.0,177.9 L818.0,178.0 L820.0,179.1 L822.0,177.7 L824.0,177.4 L826.0,178.4 L828.0,176.8 L830.0,177.0 L832.0,179.2 L834.0,177.7 L836.0,177.8 L838.0,176.1 L840.0,177.4 L842.0,177.9 L844.0,176.1" fill="none" stroke="#30e040" stroke-width="8.20" stroke-linejoin="round"/><path d="M612.0,194.6 L614.0,195.4 L616.0,194.5 L618.0,194.4 L620.0,190.9 L622.0,190.4 L624.0,189.3 L626.0,189.0 L628.0,190.4 L630.0,187.3 L632.0,188.4 L634.0,186.5 L636.0,186.4 L638.0,186.4 L640.0,187.6 L642.0,186.2 L644.0,183.4 L646.0,184.1 L648.0,183.2 L650.0,185.7 L652.0,185.1 L654.0,184.8 L656.0,184.6 L658.0,183.9 L660.0,184.5 L662.0,183.6 L664.0,181.2 L666.0,183.3 L668.0,181.7 L670.0,182.5 L672.0,181.6" fill="none" stroke="#30e040" stroke-width="6.97" stroke-linejoin="round"/><path d="M611.0,188.3 L613.0,188.2 L615.0,187.5 L617.0,183.8 L619.0,185.5 L621.0,184.4 L623.0,184.5 L625.0,182.5 L627.0,182.4 L629.0,183.1 L631.0,181.9 L633.0,182.6 L635.0,180.6 L637.0,180.6 L639.0,182.9 L641.0,181.5 L643.0,181.6 L645.0,182.3 L647.0,180.6 L649.0,179.2 L651.0,182.0 L653.0,181.0 L655.0,181.1 L657.0,180.8" fill="none" stroke="#30e040" stroke-width="6.15" stroke-linejoin="round"/><path d="M853.0,189.8 L855.0,188.7 L857.0,189.0 L859.0,187.6 L861.0,186.7 L863.0,187.3 L865.0,188.4 L867.0,187.6 L869.0,187.0 L871.0,184.8 L873.0,185.4 L875.0,184.2 L877.0,183.5 L879.0,182.9 L881.0,182.9 L883.0,184.9 L885.0,184.3 L887.0,183.9 L889.0,183.6 L891.0,181.4 L893.0,181.5 L895.0,182.3 L897.0,182.4 L899.0,182.6 L901.0,182.5 L903.0,179.8 L905.0,181.2 L907.0,181.3 L909.0,180.6 L911.0,179.4 L913.0,180.2 L915.0,178.8 L917.0,181.4 L919.0,181.1 L921.0,179.9 L923.0,179.0 L925.0,180.9 L927.0,179.7 L929.0,180.6 L931.0,180.4 L933.0,179.2 L935.0,178.8 L937.0,179.3 L939.0,178.7 L941.0,177.8 L943.0,178.2 L945.0,179.8 L947.0,177.2 L949.0,177.2 L951.0,179.0 L953.0,177.8 L955.0,178.6 L957.0,178.4 L959.0,177.9 L961.0,179.9 L963.0,177.3 L965.0,178.0 L967.0,177.3" fill="none" stroke="#30e040" stroke-width="8.20" stroke-linejoin="round"/><path d="M853.0,194.0 L855.0,195.5 L857.0,194.4 L859.0,194.7 L861.0,191.3 L863.0,190.5 L865.0,191.7 L867.0,190.7 L869.0,188.6 L871.0,189.5 L873.0,187.8 L875.0,188.8 L877.0,185.6 L879.0,185.6 L881.0,187.8 L883.0,185.2 L885.0,184.4 L887.0,186.2 L889.0,185.1 L891.0,182.8 L893.0,184.1 L895.0,184.2 L897.0,181.9 L899.0,183.6 L901.0,181.2 L903.0,181.8 L905.0,180.5 L907.0,180.8 L909.0,183.6 L911.0,181.1 L913.0,183.3" fill="none" stroke="#30e040" stroke-width="6.97" stroke-linejoin="round"/><path d="M852.0,187.4 L854.0,187.7 L856.0,184.6 L858.0,187.5 L860.0,183.9 L862.0,185.4 L864.0,182.7 L866.0,185.0 L868.0,182.3 L870.0,184.2 L872.0,184.0 L874.0,183.8 L876.0,182.3 L878.0,183.7 L880.0,184.0 L882.0,180.3 L884.0,181.6 L886.0,183.2 L888.0,182.1 L890.0,180.8 L892.0,180.0 L894.0,182.5 L896.0,178.8 L898.0,181.4" fill="none" stroke="#30e040" stroke-width="6.15" stroke-linejoin="round"/><path d="M612.0,334.6 L613.0,356.1 L616.6,321.4 L620.2,345.7 L623.8,329.1 L627.4,341.7 L631.0,331.4 L634.6,337.8 L638.2,330.5 L641.8,339.9 L645.4,332.9 L649.0,334.0 L652.6,331.8" fill="none" stroke="#30e040" stroke-width="4.92" stroke-linejoin="round"/><path d="M614.0,334.6 L615.5,321.4 L619.1,344.8 L622.7,329.0 L626.3,341.3 L629.9,331.3 L633.5,337.5 L637.1,332.5 L640.7,338.8 L644.3,332.5 L647.9,334.6 L651.5,332.2 L655.1,337.0" fill="none" stroke="#30e040" stroke-width="4.92" stroke-linejoin="round"/><path d="M616.0,334.6 L618.0,348.5 L621.6,328.3 L625.2,341.9 L628.8,329.4 L632.4,337.4 L636.0,330.9 L639.6,335.4 L643.2,332.5 L646.8,334.7 L650.4,332.8 L654.0,336.2 L657.6,333.0" fill="none" stroke="#30e040" stroke-width="4.92" stroke-linejoin="round"/><path d="M853.0,334.6 L854.0,356.5 L857.6,321.0 L861.2,343.5 L864.8,329.8 L868.4,341.3 L872.0,331.4 L875.6,336.8 L879.2,334.3 L882.8,336.7 L886.4,334.5 L890.0,335.8 L893.6,330.9" fill="none" stroke="#30e040" stroke-width="4.92" stroke-linejoin="round"/><path d="M855.0,334.6 L856.5,323.7 L860.1,345.1 L863.7,328.0 L867.3,339.4 L870.9,331.1 L874.5,337.6 L878.1,330.4 L881.7,337.1 L885.3,332.8 L888.9,336.8 L892.5,332.0 L896.1,338.4" fill="none" stroke="#30e040" stroke-width="4.92" stroke-linejoin="round"/><path d="M857.0,334.6 L859.0,348.0 L862.6,327.9 L866.2,341.8 L869.8,331.0 L873.4,337.9 L877.0,331.5 L880.6,336.6 L884.2,333.1 L887.8,335.5 L891.4,334.2 L895.0,335.3 L898.6,334.6" fill="none" stroke="#30e040" stroke-width="4.92" stroke-linejoin="round"/><path d="M490.0,178.7 L492.0,178.7 L494.0,176.5 L496.0,176.6 L498.0,178.4 L500.0,178.2 L502.0,178.0 L504.0,177.1 L506.0,177.9 L508.0,177.9 L510.0,177.8 L512.0,176.8 L514.0,177.4 L516.0,177.3 L518.0,178.1 L520.0,178.8 L522.0,178.7 L524.0,177.7 L526.0,177.5 L528.0,177.0 L530.0,176.5 L532.0,176.5 L534.0,177.5 L536.0,177.2 L538.0,177.3 L540.0,178.5 L542.0,177.7 L544.0,177.7 L546.0,177.0 L548.0,176.5 L550.0,177.2 L552.0,176.7 L554.0,177.6 L556.0,178.8 L558.0,178.0 L560.0,176.8 L562.0,178.5 L564.0,178.3 L566.0,178.2 L568.0,178.6 L570.0,178.2 L572.0,178.3 L574.0,177.2 L576.0,178.8 L578.0,178.7 L580.0,176.8 L582.0,178.2 L584.0,178.1 L586.0,177.5 L588.0,177.7 L590.0,177.6 L592.0,178.6 L594.0,177.6 L596.0,178.4 L598.0,177.2 L600.0,178.5 L602.0,178.6 L604.0,177.5 L606.0,177.8" fill="none" stroke="#f8e800" stroke-width="6.80" stroke-linejoin="round"/><path d="M490.0,335.4 L492.0,335.5 L494.0,334.6 L496.0,333.9 L498.0,333.2 L500.0,335.1 L502.0,334.5 L504.0,335.3 L506.0,334.2 L508.0,335.4 L510.0,334.0 L512.0,335.4 L514.0,335.2 L516.0,334.4 L518.0,334.7 L520.0,335.1 L522.0,333.7 L524.0,334.8 L526.0,335.5 L528.0,333.9 L530.0,335.4 L532.0,335.1 L534.0,335.6 L536.0,334.1 L538.0,333.5 L540.0,335.4 L542.0,335.5 L544.0,334.4 L546.0,333.5 L548.0,333.8 L550.0,335.0 L552.0,334.0 L554.0,335.9 L556.0,334.8 L558.0,333.8 L560.0,335.0 L562.0,334.2 L564.0,335.8 L566.0,335.7 L568.0,334.6 L570.0,335.0 L572.0,335.2 L574.0,335.5 L576.0,335.9 L578.0,333.3 L580.0,334.2 L582.0,334.9 L584.0,334.1 L586.0,334.8 L588.0,333.5 L590.0,335.7 L592.0,334.7 L594.0,333.5 L596.0,335.1 L598.0,334.1 L600.0,333.7 L602.0,334.6 L604.0,333.6 L606.0,333.8 L608.0,335.6 L610.0,335.2 L612.0,333.2 L614.0,335.4 L616.0,333.2 L618.0,334.1 L620.0,335.7 L622.0,334.9 L624.0,334.1 L626.0,334.3 L628.0,334.3 L630.0,333.6 L632.0,336.0 L634.0,333.4 L636.0,334.4 L638.0,335.3 L640.0,334.3 L642.0,335.9 L644.0,333.9 L646.0,335.9 L648.0,335.7 L650.0,335.1 L652.0,335.7 L654.0,334.5 L656.0,335.5 L658.0,335.4 L660.0,334.6 L662.0,334.5 L664.0,335.2 L666.0,334.3 L668.0,333.4 L670.0,335.3 L672.0,333.9 L674.0,334.6 L676.0,335.4 L678.0,333.7 L680.0,333.3 L682.0,333.5 L684.0,334.9 L686.0,334.2 L688.0,333.9 L690.0,334.5 L692.0,335.8 L694.0,333.9 L696.0,334.3 L698.0,335.7 L700.0,334.9 L702.0,334.0 L704.0,334.5 L706.0,334.5 L708.0,333.6 L710.0,334.3 L712.0,334.1 L714.0,335.5 L716.0,334.1 L718.0,335.0 L720.0,335.9 L722.0,335.8 L724.0,334.3 L726.0,334.9 L728.0,334.1 L730.0,334.3 L732.0,334.6 L734.0,335.4 L736.0,335.8 L738.0,334.0 L740.0,333.2 L742.0,334.5 L744.0,333.4 L746.0,333.3 L748.0,335.4 L750.0,333.5 L752.0,335.2 L754.0,334.2 L756.0,335.8 L758.0,335.6 L760.0,333.4 L762.0,333.7 L764.0,335.9 L766.0,334.9 L768.0,334.4 L770.0,335.4 L772.0,335.5 L774.0,334.6 L776.0,334.5 L778.0,333.5 L780.0,334.2 L782.0,333.6 L784.0,335.0 L786.0,334.9 L788.0,333.6 L790.0,335.0 L792.0,333.5 L794.0,333.5 L796.0,335.0 L798.0,334.5 L800.0,335.7 L802.0,335.0 L804.0,335.2 L806.0,333.6 L808.0,335.5 L810.0,333.4 L812.0,334.9 L814.0,335.8 L816.0,335.7 L818.0,335.7 L820.0,334.5 L822.0,335.1 L824.0,335.4 L826.0,333.6 L828.0,335.8 L830.0,335.7 L832.0,334.4 L834.0,335.4 L836.0,334.5 L838.0,334.0 L840.0,335.2 L842.0,333.4 L844.0,335.4 L846.0,335.9 L848.0,334.0 L850.0,335.8 L852.0,333.4 L854.0,335.6 L856.0,334.0 L858.0,335.9 L860.0,334.4 L862.0,335.8 L864.0,333.3 L866.0,333.4 L868.0,335.5 L870.0,335.0 L872.0,334.7 L874.0,333.3 L876.0,333.7 L878.0,334.2 L880.0,333.3 L882.0,336.0 L884.0,335.3 L886.0,335.9 L888.0,335.2 L890.0,334.2 L892.0,333.4 L894.0,335.2 L896.0,333.5 L898.0,334.7 L900.0,334.5 L902.0,334.6 L904.0,333.4 L906.0,333.4 L908.0,334.7 L910.0,333.3 L912.0,334.7 L914.0,333.6 L916.0,334.0 L918.0,333.6 L920.0,334.8 L922.0,334.3 L924.0,333.8 L926.0,333.8 L928.0,334.8 L930.0,335.7 L932.0,334.4 L934.0,333.7 L936.0,334.1 L938.0,333.9 L940.0,334.8 L942.0,335.4 L944.0,334.8 L946.0,333.7 L948.0,334.1 L950.0,334.3 L952.0,334.4 L954.0,334.3 L956.0,336.0 L958.0,334.7 L960.0,335.1 L962.0,335.2 L964.0,335.0 L966.0,335.5 L968.0,334.2" fill="none" stroke="#f8e800" stroke-width="6.80" stroke-linejoin="round"/><path d="M612.0,189.8 L614.0,190.1 L616.0,188.9 L618.0,189.0 L620.0,188.5 L622.0,186.2 L624.0,185.5 L626.0,187.7 L628.0,185.4 L630.0,184.8 L632.0,186.9 L634.0,184.8 L636.0,185.6 L638.0,184.1 L640.0,184.3 L642.0,182.4 L644.0,183.6 L646.0,184.1 L648.0,182.7 L650.0,183.2 L652.0,182.7 L654.0,180.5 L656.0,182.5 L658.0,181.8 L660.0,180.6 L662.0,179.6 L664.0,182.1 L666.0,180.7 L668.0,181.3 L670.0,181.6 L672.0,181.0 L674.0,181.5 L676.0,179.7 L678.0,180.9 L680.0,179.6 L682.0,181.1 L684.0,180.8 L686.0,178.2 L688.0,178.2 L690.0,178.4 L692.0,180.7 L694.0,178.9 L696.0,179.4 L698.0,178.3 L700.0,178.9 L702.0,178.5 L704.0,178.3 L706.0,179.0 L708.0,178.9 L710.0,179.9 L712.0,179.1 L714.0,179.9 L716.0,179.6 L718.0,180.0 L720.0,178.9 L722.0,177.2 L724.0,179.4 L726.0,179.7 L728.0,179.5 L730.0,178.4 L732.0,178.8 L734.0,177.2 L736.0,179.2 L738.0,178.3 L740.0,177.4 L742.0,176.6 L744.0,179.1 L746.0,179.5 L748.0,176.6 L750.0,178.9 L752.0,177.6 L754.0,176.8 L756.0,177.2 L758.0,178.7 L760.0,179.1 L762.0,176.4 L764.0,178.2 L766.0,176.4 L768.0,178.5 L770.0,177.3 L772.0,179.0 L774.0,179.3 L776.0,177.8 L778.0,179.4 L780.0,177.1 L782.0,176.4 L784.0,178.1 L786.0,176.2 L788.0,176.8 L790.0,177.4 L792.0,178.1 L794.0,176.6 L796.0,176.2 L798.0,178.9 L800.0,177.1 L802.0,179.2 L804.0,179.0 L806.0,177.3 L808.0,177.5 L810.0,177.7 L812.0,178.1 L814.0,178.0 L816.0,177.9 L818.0,178.0 L820.0,179.1 L822.0,177.7 L824.0,177.4 L826.0,178.4 L828.0,176.8 L830.0,177.0 L832.0,179.2 L834.0,177.7 L836.0,177.8 L838.0,176.1 L840.0,177.4 L842.0,177.9 L844.0,176.1" fill="none" stroke="#f8e800" stroke-width="6.80" stroke-linejoin="round"/><path d="M612.0,194.6 L614.0,195.4 L616.0,194.5 L618.0,194.4 L620.0,190.9 L622.0,190.4 L624.0,189.3 L626.0,189.0 L628.0,190.4 L630.0,187.3 L632.0,188.4 L634.0,186.5 L636.0,186.4 L638.0,186.4 L640.0,187.6 L642.0,186.2 L644.0,183.4 L646.0,184.1 L648.0,183.2 L650.0,185.7 L652.0,185.1 L654.0,184.8 L656.0,184.6 L658.0,183.9 L660.0,184.5 L662.0,183.6 L664.0,181.2 L666.0,183.3 L668.0,181.7 L670.0,182.5 L672.0,181.6" fill="none" stroke="#f8e800" stroke-width="5.78" stroke-linejoin="round"/><path d="M611.0,188.3 L613.0,188.2 L615.0,187.5 L617.0,183.8 L619.0,185.5 L621.0,184.4 L623.0,184.5 L625.0,182.5 L627.0,182.4 L629.0,183.1 L631.0,181.9 L633.0,182.6 L635.0,180.6 L637.0,180.6 L639.0,182.9 L641.0,181.5 L643.0,181.6 L645.0,182.3 L647.0,180.6 L649.0,179.2 L651.0,182.0 L653.0,181.0 L655.0,181.1 L657.0,180.8" fill="none" stroke="#f8e800" stroke-width="5.10" stroke-linejoin="round"/><path d="M853.0,189.8 L855.0,188.7 L857.0,189.0 L859.0,187.6 L861.0,186.7 L863.0,187.3 L865.0,188.4 L867.0,187.6 L869.0,187.0 L871.0,184.8 L873.0,185.4 L875.0,184.2 L877.0,183.5 L879.0,182.9 L881.0,182.9 L883.0,184.9 L885.0,184.3 L887.0,183.9 L889.0,183.6 L891.0,181.4 L893.0,181.5 L895.0,182.3 L897.0,182.4 L899.0,182.6 L901.0,182.5 L903.0,179.8 L905.0,181.2 L907.0,181.3 L909.0,180.6 L911.0,179.4 L913.0,180.2 L915.0,178.8 L917.0,181.4 L919.0,181.1 L921.0,179.9 L923.0,179.0 L925.0,180.9 L927.0,179.7 L929.0,180.6 L931.0,180.4 L933.0,179.2 L935.0,178.8 L937.0,179.3 L939.0,178.7 L941.0,177.8 L943.0,178.2 L945.0,179.8 L947.0,177.2 L949.0,177.2 L951.0,179.0 L953.0,177.8 L955.0,178.6 L957.0,178.4 L959.0,177.9 L961.0,179.9 L963.0,177.3 L965.0,178.0 L967.0,177.3" fill="none" stroke="#f8e800" stroke-width="6.80" stroke-linejoin="round"/><path d="M853.0,194.0 L855.0,195.5 L857.0,194.4 L859.0,194.7 L861.0,191.3 L863.0,190.5 L865.0,191.7 L867.0,190.7 L869.0,188.6 L871.0,189.5 L873.0,187.8 L875.0,188.8 L877.0,185.6 L879.0,185.6 L881.0,187.8 L883.0,185.2 L885.0,184.4 L887.0,186.2 L889.0,185.1 L891.0,182.8 L893.0,184.1 L895.0,184.2 L897.0,181.9 L899.0,183.6 L901.0,181.2 L903.0,181.8 L905.0,180.5 L907.0,180.8 L909.0,183.6 L911.0,181.1 L913.0,183.3" fill="none" stroke="#f8e800" stroke-width="5.78" stroke-linejoin="round"/><path d="M852.0,187.4 L854.0,187.7 L856.0,184.6 L858.0,187.5 L860.0,183.9 L862.0,185.4 L864.0,182.7 L866.0,185.0 L868.0,182.3 L870.0,184.2 L872.0,184.0 L874.0,183.8 L876.0,182.3 L878.0,183.7 L880.0,184.0 L882.0,180.3 L884.0,181.6 L886.0,183.2 L888.0,182.1 L890.0,180.8 L892.0,180.0 L894.0,182.5 L896.0,178.8 L898.0,181.4" fill="none" stroke="#f8e800" stroke-width="5.10" stroke-linejoin="round"/><path d="M612.0,334.6 L613.0,356.1 L616.6,321.4 L620.2,345.7 L623.8,329.1 L627.4,341.7 L631.0,331.4 L634.6,337.8 L638.2,330.5 L641.8,339.9 L645.4,332.9 L649.0,334.0 L652.6,331.8" fill="none" stroke="#f8e800" stroke-width="4.08" stroke-linejoin="round"/><path d="M614.0,334.6 L615.5,321.4 L619.1,344.8 L622.7,329.0 L626.3,341.3 L629.9,331.3 L633.5,337.5 L637.1,332.5 L640.7,338.8 L644.3,332.5 L647.9,334.6 L651.5,332.2 L655.1,337.0" fill="none" stroke="#f8e800" stroke-width="4.08" stroke-linejoin="round"/><path d="M616.0,334.6 L618.0,348.5 L621.6,328.3 L625.2,341.9 L628.8,329.4 L632.4,337.4 L636.0,330.9 L639.6,335.4 L643.2,332.5 L646.8,334.7 L650.4,332.8 L654.0,336.2 L657.6,333.0" fill="none" stroke="#f8e800" stroke-width="4.08" stroke-linejoin="round"/><path d="M853.0,334.6 L854.0,356.5 L857.6,321.0 L861.2,343.5 L864.8,329.8 L868.4,341.3 L872.0,331.4 L875.6,336.8 L879.2,334.3 L882.8,336.7 L886.4,334.5 L890.0,335.8 L893.6,330.9" fill="none" stroke="#f8e800" stroke-width="4.08" stroke-linejoin="round"/><path d="M855.0,334.6 L856.5,323.7 L860.1,345.1 L863.7,328.0 L867.3,339.4 L870.9,331.1 L874.5,337.6 L878.1,330.4 L881.7,337.1 L885.3,332.8 L888.9,336.8 L892.5,332.0 L896.1,338.4" fill="none" stroke="#f8e800" stroke-width="4.08" stroke-linejoin="round"/><path d="M857.0,334.6 L859.0,348.0 L862.6,327.9 L866.2,341.8 L869.8,331.0 L873.4,337.9 L877.0,331.5 L880.6,336.6 L884.2,333.1 L887.8,335.5 L891.4,334.2 L895.0,335.3 L898.6,334.6" fill="none" stroke="#f8e800" stroke-width="4.08" stroke-linejoin="round"/><path d="M490.0,178.7 L492.0,178.7 L494.0,176.5 L496.0,176.6 L498.0,178.4 L500.0,178.2 L502.0,178.0 L504.0,177.1 L506.0,177.9 L508.0,177.9 L510.0,177.8 L512.0,176.8 L514.0,177.4 L516.0,177.3 L518.0,178.1 L520.0,178.8 L522.0,178.7 L524.0,177.7 L526.0,177.5 L528.0,177.0 L530.0,176.5 L532.0,176.5 L534.0,177.5 L536.0,177.2 L538.0,177.3 L540.0,178.5 L542.0,177.7 L544.0,177.7 L546.0,177.0 L548.0,176.5 L550.0,177.2 L552.0,176.7 L554.0,177.6 L556.0,178.8 L558.0,178.0 L560.0,176.8 L562.0,178.5 L564.0,178.3 L566.0,178.2 L568.0,178.6 L570.0,178.2 L572.0,178.3 L574.0,177.2 L576.0,178.8 L578.0,178.7 L580.0,176.8 L582.0,178.2 L584.0,178.1 L586.0,177.5 L588.0,177.7 L590.0,177.6 L592.0,178.6 L594.0,177.6 L596.0,178.4 L598.0,177.2 L600.0,178.5 L602.0,178.6 L604.0,177.5 L606.0,177.8" fill="none" stroke="#ff9000" stroke-width="2.30" stroke-linejoin="round"/><path d="M490.0,335.4 L492.0,335.5 L494.0,334.6 L496.0,333.9 L498.0,333.2 L500.0,335.1 L502.0,334.5 L504.0,335.3 L506.0,334.2 L508.0,335.4 L510.0,334.0 L512.0,335.4 L514.0,335.2 L516.0,334.4 L518.0,334.7 L520.0,335.1 L522.0,333.7 L524.0,334.8 L526.0,335.5 L528.0,333.9 L530.0,335.4 L532.0,335.1 L534.0,335.6 L536.0,334.1 L538.0,333.5 L540.0,335.4 L542.0,335.5 L544.0,334.4 L546.0,333.5 L548.0,333.8 L550.0,335.0 L552.0,334.0 L554.0,335.9 L556.0,334.8 L558.0,333.8 L560.0,335.0 L562.0,334.2 L564.0,335.8 L566.0,335.7 L568.0,334.6 L570.0,335.0 L572.0,335.2 L574.0,335.5 L576.0,335.9 L578.0,333.3 L580.0,334.2 L582.0,334.9 L584.0,334.1 L586.0,334.8 L588.0,333.5 L590.0,335.7 L592.0,334.7 L594.0,333.5 L596.0,335.1 L598.0,334.1 L600.0,333.7 L602.0,334.6 L604.0,333.6 L606.0,333.8 L608.0,335.6 L610.0,335.2 L612.0,333.2 L614.0,335.4 L616.0,333.2 L618.0,334.1 L620.0,335.7 L622.0,334.9 L624.0,334.1 L626.0,334.3 L628.0,334.3 L630.0,333.6 L632.0,336.0 L634.0,333.4 L636.0,334.4 L638.0,335.3 L640.0,334.3 L642.0,335.9 L644.0,333.9 L646.0,335.9 L648.0,335.7 L650.0,335.1 L652.0,335.7 L654.0,334.5 L656.0,335.5 L658.0,335.4 L660.0,334.6 L662.0,334.5 L664.0,335.2 L666.0,334.3 L668.0,333.4 L670.0,335.3 L672.0,333.9 L674.0,334.6 L676.0,335.4 L678.0,333.7 L680.0,333.3 L682.0,333.5 L684.0,334.9 L686.0,334.2 L688.0,333.9 L690.0,334.5 L692.0,335.8 L694.0,333.9 L696.0,334.3 L698.0,335.7 L700.0,334.9 L702.0,334.0 L704.0,334.5 L706.0,334.5 L708.0,333.6 L710.0,334.3 L712.0,334.1 L714.0,335.5 L716.0,334.1 L718.0,335.0 L720.0,335.9 L722.0,335.8 L724.0,334.3 L726.0,334.9 L728.0,334.1 L730.0,334.3 L732.0,334.6 L734.0,335.4 L736.0,335.8 L738.0,334.0 L740.0,333.2 L742.0,334.5 L744.0,333.4 L746.0,333.3 L748.0,335.4 L750.0,333.5 L752.0,335.2 L754.0,334.2 L756.0,335.8 L758.0,335.6 L760.0,333.4 L762.0,333.7 L764.0,335.9 L766.0,334.9 L768.0,334.4 L770.0,335.4 L772.0,335.5 L774.0,334.6 L776.0,334.5 L778.0,333.5 L780.0,334.2 L782.0,333.6 L784.0,335.0 L786.0,334.9 L788.0,333.6 L790.0,335.0 L792.0,333.5 L794.0,333.5 L796.0,335.0 L798.0,334.5 L800.0,335.7 L802.0,335.0 L804.0,335.2 L806.0,333.6 L808.0,335.5 L810.0,333.4 L812.0,334.9 L814.0,335.8 L816.0,335.7 L818.0,335.7 L820.0,334.5 L822.0,335.1 L824.0,335.4 L826.0,333.6 L828.0,335.8 L830.0,335.7 L832.0,334.4 L834.0,335.4 L836.0,334.5 L838.0,334.0 L840.0,335.2 L842.0,333.4 L844.0,335.4 L846.0,335.9 L848.0,334.0 L850.0,335.8 L852.0,333.4 L854.0,335.6 L856.0,334.0 L858.0,335.9 L860.0,334.4 L862.0,335.8 L864.0,333.3 L866.0,333.4 L868.0,335.5 L870.0,335.0 L872.0,334.7 L874.0,333.3 L876.0,333.7 L878.0,334.2 L880.0,333.3 L882.0,336.0 L884.0,335.3 L886.0,335.9 L888.0,335.2 L890.0,334.2 L892.0,333.4 L894.0,335.2 L896.0,333.5 L898.0,334.7 L900.0,334.5 L902.0,334.6 L904.0,333.4 L906.0,333.4 L908.0,334.7 L910.0,333.3 L912.0,334.7 L914.0,333.6 L916.0,334.0 L918.0,333.6 L920.0,334.8 L922.0,334.3 L924.0,333.8 L926.0,333.8 L928.0,334.8 L930.0,335.7 L932.0,334.4 L934.0,333.7 L936.0,334.1 L938.0,333.9 L940.0,334.8 L942.0,335.4 L944.0,334.8 L946.0,333.7 L948.0,334.1 L950.0,334.3 L952.0,334.4 L954.0,334.3 L956.0,336.0 L958.0,334.7 L960.0,335.1 L962.0,335.2 L964.0,335.0 L966.0,335.5 L968.0,334.2" fill="none" stroke="#ff9000" stroke-width="2.30" stroke-linejoin="round"/><path d="M612.0,189.8 L614.0,190.1 L616.0,188.9 L618.0,189.0 L620.0,188.5 L622.0,186.2 L624.0,185.5 L626.0,187.7 L628.0,185.4 L630.0,184.8 L632.0,186.9 L634.0,184.8 L636.0,185.6 L638.0,184.1 L640.0,184.3 L642.0,182.4 L644.0,183.6 L646.0,184.1 L648.0,182.7 L650.0,183.2 L652.0,182.7 L654.0,180.5 L656.0,182.5 L658.0,181.8 L660.0,180.6 L662.0,179.6 L664.0,182.1 L666.0,180.7 L668.0,181.3 L670.0,181.6 L672.0,181.0 L674.0,181.5 L676.0,179.7 L678.0,180.9 L680.0,179.6 L682.0,181.1 L684.0,180.8 L686.0,178.2 L688.0,178.2 L690.0,178.4 L692.0,180.7 L694.0,178.9 L696.0,179.4 L698.0,178.3 L700.0,178.9 L702.0,178.5 L704.0,178.3 L706.0,179.0 L708.0,178.9 L710.0,179.9 L712.0,179.1 L714.0,179.9 L716.0,179.6 L718.0,180.0 L720.0,178.9 L722.0,177.2 L724.0,179.4 L726.0,179.7 L728.0,179.5 L730.0,178.4 L732.0,178.8 L734.0,177.2 L736.0,179.2 L738.0,178.3 L740.0,177.4 L742.0,176.6 L744.0,179.1 L746.0,179.5 L748.0,176.6 L750.0,178.9 L752.0,177.6 L754.0,176.8 L756.0,177.2 L758.0,178.7 L760.0,179.1 L762.0,176.4 L764.0,178.2 L766.0,176.4 L768.0,178.5 L770.0,177.3 L772.0,179.0 L774.0,179.3 L776.0,177.8 L778.0,179.4 L780.0,177.1 L782.0,176.4 L784.0,178.1 L786.0,176.2 L788.0,176.8 L790.0,177.4 L792.0,178.1 L794.0,176.6 L796.0,176.2 L798.0,178.9 L800.0,177.1 L802.0,179.2 L804.0,179.0 L806.0,177.3 L808.0,177.5 L810.0,177.7 L812.0,178.1 L814.0,178.0 L816.0,177.9 L818.0,178.0 L820.0,179.1 L822.0,177.7 L824.0,177.4 L826.0,178.4 L828.0,176.8 L830.0,177.0 L832.0,179.2 L834.0,177.7 L836.0,177.8 L838.0,176.1 L840.0,177.4 L842.0,177.9 L844.0,176.1" fill="none" stroke="#ff9000" stroke-width="2.30" stroke-linejoin="round"/><path d="M612.0,194.6 L614.0,195.4 L616.0,194.5 L618.0,194.4 L620.0,190.9 L622.0,190.4 L624.0,189.3 L626.0,189.0 L628.0,190.4 L630.0,187.3 L632.0,188.4 L634.0,186.5 L636.0,186.4 L638.0,186.4 L640.0,187.6 L642.0,186.2 L644.0,183.4 L646.0,184.1 L648.0,183.2 L650.0,185.7 L652.0,185.1 L654.0,184.8 L656.0,184.6 L658.0,183.9 L660.0,184.5 L662.0,183.6 L664.0,181.2 L666.0,183.3 L668.0,181.7 L670.0,182.5 L672.0,181.6" fill="none" stroke="#ff9000" stroke-width="0.00" stroke-linejoin="round"/><path d="M611.0,188.3 L613.0,188.2 L615.0,187.5 L617.0,183.8 L619.0,185.5 L621.0,184.4 L623.0,184.5 L625.0,182.5 L627.0,182.4 L629.0,183.1 L631.0,181.9 L633.0,182.6 L635.0,180.6 L637.0,180.6 L639.0,182.9 L641.0,181.5 L643.0,181.6 L645.0,182.3 L647.0,180.6 L649.0,179.2 L651.0,182.0 L653.0,181.0 L655.0,181.1 L657.0,180.8" fill="none" stroke="#ff9000" stroke-width="0.00" stroke-linejoin="round"/><path d="M853.0,189.8 L855.0,188.7 L857.0,189.0 L859.0,187.6 L861.0,186.7 L863.0,187.3 L865.0,188.4 L867.0,187.6 L869.0,187.0 L871.0,184.8 L873.0,185.4 L875.0,184.2 L877.0,183.5 L879.0,182.9 L881.0,182.9 L883.0,184.9 L885.0,184.3 L887.0,183.9 L889.0,183.6 L891.0,181.4 L893.0,181.5 L895.0,182.3 L897.0,182.4 L899.0,182.6 L901.0,182.5 L903.0,179.8 L905.0,181.2 L907.0,181.3 L909.0,180.6 L911.0,179.4 L913.0,180.2 L915.0,178.8 L917.0,181.4 L919.0,181.1 L921.0,179.9 L923.0,179.0 L925.0,180.9 L927.0,179.7 L929.0,180.6 L931.0,180.4 L933.0,179.2 L935.0,178.8 L937.0,179.3 L939.0,178.7 L941.0,177.8 L943.0,178.2 L945.0,179.8 L947.0,177.2 L949.0,177.2 L951.0,179.0 L953.0,177.8 L955.0,178.6 L957.0,178.4 L959.0,177.9 L961.0,179.9 L963.0,177.3 L965.0,178.0 L967.0,177.3" fill="none" stroke="#ff9000" stroke-width="2.30" stroke-linejoin="round"/><path d="M853.0,194.0 L855.0,195.5 L857.0,194.4 L859.0,194.7 L861.0,191.3 L863.0,190.5 L865.0,191.7 L867.0,190.7 L869.0,188.6 L871.0,189.5 L873.0,187.8 L875.0,188.8 L877.0,185.6 L879.0,185.6 L881.0,187.8 L883.0,185.2 L885.0,184.4 L887.0,186.2 L889.0,185.1 L891.0,182.8 L893.0,184.1 L895.0,184.2 L897.0,181.9 L899.0,183.6 L901.0,181.2 L903.0,181.8 L905.0,180.5 L907.0,180.8 L909.0,183.6 L911.0,181.1 L913.0,183.3" fill="none" stroke="#ff9000" stroke-width="0.00" stroke-linejoin="round"/><path d="M852.0,187.4 L854.0,187.7 L856.0,184.6 L858.0,187.5 L860.0,183.9 L862.0,185.4 L864.0,182.7 L866.0,185.0 L868.0,182.3 L870.0,184.2 L872.0,184.0 L874.0,183.8 L876.0,182.3 L878.0,183.7 L880.0,184.0 L882.0,180.3 L884.0,181.6 L886.0,183.2 L888.0,182.1 L890.0,180.8 L892.0,180.0 L894.0,182.5 L896.0,178.8 L898.0,181.4" fill="none" stroke="#ff9000" stroke-width="0.00" stroke-linejoin="round"/><path d="M612.0,334.6 L613.0,356.1 L616.6,321.4 L620.2,345.7 L623.8,329.1 L627.4,341.7 L631.0,331.4 L634.6,337.8 L638.2,330.5 L641.8,339.9 L645.4,332.9 L649.0,334.0 L652.6,331.8" fill="none" stroke="#ff9000" stroke-width="0.70" stroke-linejoin="round"/><path d="M614.0,334.6 L615.5,321.4 L619.1,344.8 L622.7,329.0 L626.3,341.3 L629.9,331.3 L633.5,337.5 L637.1,332.5 L640.7,338.8 L644.3,332.5 L647.9,334.6 L651.5,332.2 L655.1,337.0" fill="none" stroke="#ff9000" stroke-width="0.70" stroke-linejoin="round"/><path d="M616.0,334.6 L618.0,348.5 L621.6,328.3 L625.2,341.9 L628.8,329.4 L632.4,337.4 L636.0,330.9 L639.6,335.4 L643.2,332.5 L646.8,334.7 L650.4,332.8 L654.0,336.2 L657.6,333.0" fill="none" stroke="#ff9000" stroke-width="0.70" stroke-linejoin="round"/><path d="M853.0,334.6 L854.0,356.5 L857.6,321.0 L861.2,343.5 L864.8,329.8 L868.4,341.3 L872.0,331.4 L875.6,336.8 L879.2,334.3 L882.8,336.7 L886.4,334.5 L890.0,335.8 L893.6,330.9" fill="none" stroke="#ff9000" stroke-width="0.70" stroke-linejoin="round"/><path d="M855.0,334.6 L856.5,323.7 L860.1,345.1 L863.7,328.0 L867.3,339.4 L870.9,331.1 L874.5,337.6 L878.1,330.4 L881.7,337.1 L885.3,332.8 L888.9,336.8 L892.5,332.0 L896.1,338.4" fill="none" stroke="#ff9000" stroke-width="0.70" stroke-linejoin="round"/><path d="M857.0,334.6 L859.0,348.0 L862.6,327.9 L866.2,341.8 L869.8,331.0 L873.4,337.9 L877.0,331.5 L880.6,336.6 L884.2,333.1 L887.8,335.5 L891.4,334.2 L895.0,335.3 L898.6,334.6" fill="none" stroke="#ff9000" stroke-width="0.70" stroke-linejoin="round"/><path d="M607.8,180.6 L610.2,337.6" stroke="#ff9000" stroke-width="2.6"/><path d="M609.8,334.6 L608.0,356.6" stroke="#ff9000" stroke-width="1.8"/><path d="M847.2,180.6 L850.2,337.6" stroke="#ff9000" stroke-width="2.6"/><path d="M849.8,334.6 L849.5,356.6" stroke="#ff9000" stroke-width="1.8"/><text x="549.4" y="374" font-family="Liberation Sans" font-size="7.5" fill="#d8d8d8" text-anchor="middle">-300 ns</text><text x="609.4" y="374" font-family="Liberation Sans" font-size="7.5" fill="#d8d8d8" text-anchor="middle">-200 ns</text><text x="669.4" y="374" font-family="Liberation Sans" font-size="7.5" fill="#d8d8d8" text-anchor="middle">-100 ns</text><text x="729.4" y="374" font-family="Liberation Sans" font-size="7.5" fill="#d8d8d8" text-anchor="middle">0 s</text><text x="789.4" y="374" font-family="Liberation Sans" font-size="7.5" fill="#d8d8d8" text-anchor="middle">100 ns</text><text x="849.4" y="374" font-family="Liberation Sans" font-size="7.5" fill="#d8d8d8" text-anchor="middle">200 ns</text><text x="909.4" y="374" font-family="Liberation Sans" font-size="7.5" fill="#d8d8d8" text-anchor="middle">300 ns</text><text x="965" y="346.4" font-family="Liberation Sans" font-size="7.5" fill="#d8d8d8" text-anchor="end">0 V</text><text x="965" y="304.75" font-family="Liberation Sans" font-size="7.5" fill="#d8d8d8" text-anchor="end">1 V</text><text x="965" y="263.09999999999997" font-family="Liberation Sans" font-size="7.5" fill="#d8d8d8" text-anchor="end">2 V</text><text x="965" y="221.45" font-family="Liberation Sans" font-size="7.5" fill="#d8d8d8" text-anchor="end">3 V</text><text x="496" y="337.6" font-family="Liberation Sans" font-size="7.3" fill="#f0f0f0" text-anchor="start">Eye:</text><text x="514.4" y="337.6" font-family="Liberation Sans" font-size="7.3" fill="#f0f0f0" text-anchor="start">All Bits</text><text x="496" y="348.2" font-family="Liberation Sans" font-size="7.3" fill="#f0f0f0" text-anchor="start">Offset:</text><text x="523.7" y="348.2" font-family="Liberation Sans" font-size="7.3" fill="#f0f0f0" text-anchor="start">2.075492</text><text x="496" y="359.4" font-family="Liberation Sans" font-size="7.3" fill="#f0f0f0" text-anchor="start">UIs:</text><text x="512.7" y="359.4" font-family="Liberation Sans" font-size="7.3" fill="#f0f0f0" text-anchor="start">498</text><text x="531.3" y="359.4" font-family="Liberation Sans" font-size="7.3" fill="#f0f0f0" text-anchor="start">Total:</text><text x="554.3" y="359.4" font-family="Liberation Sans" font-size="7.3" fill="#f0f0f0" text-anchor="start">20090139</text></svg>
<svg style="left:945px;top:162px" width="19" height="18"><polygon points="0,0 19,0 19,18" fill="#6a6a6a"/><circle cx="13.5" cy="4.5" r="2.3" fill="none" stroke="#e0e0e0" stroke-width="1"/><line x1="11.8" y1="6.2" x2="8.5" y2="9.5" stroke="#e0e0e0" stroke-width="1.2"/></svg>
<div class="b" style="left:9px;top:378.5px;width:318px;height:13.5px;background:#3c3c3c"></div>
<div class="b" style="left:9px;top:392px;width:318px;height:161px;background:#000"></div>
<div class="t " style="left:16.5px;top:381.33px;font-size:9.3px;color:#e8e8e8;font-weight:400;">Plot 4 - Bathtub (Meas1)</div>
<svg style="left:312px;top:381.2px" width="10" height="10"><path d="M1.6 1.6L8.4 8.0M8.4 1.6L1.6 8.0" stroke="#c8c8c8" stroke-width="1.2"/></svg>
<div class="b" style="left:327px;top:378px;width:3px;height:175px;background:#8e8e8e"></div>
<svg style="left:9px;top:392px" width="318" height="161" viewBox="9 392 318 161"><line x1="37.6" y1="392" x2="37.6" y2="553" stroke="#777" stroke-dasharray="1,4.6"/><line x1="69.9" y1="392" x2="69.9" y2="553" stroke="#777" stroke-dasharray="1,4.6"/><line x1="102.2" y1="392" x2="102.2" y2="553" stroke="#777" stroke-dasharray="1,4.6"/><line x1="134.5" y1="392" x2="134.5" y2="553" stroke="#777" stroke-dasharray="1,4.6"/><line x1="166.8" y1="392" x2="166.8" y2="553" stroke="#777" stroke-dasharray="1,4.6"/><line x1="199.1" y1="392" x2="199.1" y2="553" stroke="#777" stroke-dasharray="1,4.6"/><line x1="231.4" y1="392" x2="231.4" y2="553" stroke="#777" stroke-dasharray="1,4.6"/><line x1="263.7" y1="392" x2="263.7" y2="553" stroke="#777" stroke-dasharray="1,4.6"/><line x1="296.0" y1="392" x2="296.0" y2="553" stroke="#777" stroke-dasharray="1,4.6"/><line x1="9" y1="411.6" x2="327" y2="411.6" stroke="#777" stroke-dasharray="1,7"/><line x1="9" y1="439.8" x2="327" y2="439.8" stroke="#777" stroke-dasharray="1,7"/><line x1="9" y1="468.0" x2="327" y2="468.0" stroke="#777" stroke-dasharray="1,7"/><line x1="9" y1="496.2" x2="327" y2="496.2" stroke="#777" stroke-dasharray="1,7"/><line x1="9" y1="524.4" x2="327" y2="524.4" stroke="#777" stroke-dasharray="1,7"/><line x1="12.0" y1="392" x2="12.0" y2="395" stroke="#bbb"/><line x1="12.0" y1="550" x2="12.0" y2="553" stroke="#bbb"/><line x1="18.5" y1="392" x2="18.5" y2="395" stroke="#bbb"/><line x1="18.5" y1="550" x2="18.5" y2="553" stroke="#bbb"/><line x1="24.9" y1="392" x2="24.9" y2="395" stroke="#bbb"/><line x1="24.9" y1="550" x2="24.9" y2="553" stroke="#bbb"/><line x1="31.4" y1="392" x2="31.4" y2="395" stroke="#bbb"/><line x1="31.4" y1="550" x2="31.4" y2="553" stroke="#bbb"/><line x1="37.8" y1="392" x2="37.8" y2="395" stroke="#bbb"/><line x1="37.8" y1="550" x2="37.8" y2="553" stroke="#bbb"/><line x1="44.3" y1="392" x2="44.3" y2="395" stroke="#bbb"/><line x1="44.3" y1="550" x2="44.3" y2="553" stroke="#bbb"/><line x1="50.8" y1="392" x2="50.8" y2="395" stroke="#bbb"/><line x1="50.8" y1="550" x2="50.8" y2="553" stroke="#bbb"/><line x1="57.2" y1="392" x2="57.2" y2="395" stroke="#bbb"/><line x1="57.2" y1="550" x2="57.2" y2="553" stroke="#bbb"/><line x1="63.7" y1="392" x2="63.7" y2="395" stroke="#bbb"/><line x1="63.7" y1="550" x2="63.7" y2="553" stroke="#bbb"/><line x1="70.1" y1="392" x2="70.1" y2="395" stroke="#bbb"/><line x1="70.1" y1="550" x2="70.1" y2="553" stroke="#bbb"/><line x1="76.6" y1="392" x2="76.6" y2="395" stroke="#bbb"/><line x1="76.6" y1="550" x2="76.6" y2="553" stroke="#bbb"/><line x1="83.1" y1="392" x2="83.1" y2="395" stroke="#bbb"/><line x1="83.1" y1="550" x2="83.1" y2="553" stroke="#bbb"/><line x1="89.5" y1="392" x2="89.5" y2="395" stroke="#bbb"/><line x1="89.5" y1="550" x2="89.5" y2="553" stroke="#bbb"/><line x1="96.0" y1="392" x2="96.0" y2="395" stroke="#bbb"/><line x1="96.0" y1="550" x2="96.0" y2="553" stroke="#bbb"/><line x1="102.4" y1="392" x2="102.4" y2="395" stroke="#bbb"/><line x1="102.4" y1="550" x2="102.4" y2="553" stroke="#bbb"/><line x1="108.9" y1="392" x2="108.9" y2="395" stroke="#bbb"/><line x1="108.9" y1="550" x2="108.9" y2="553" stroke="#bbb"/><line x1="115.4" y1="392" x2="115.4" y2="395" stroke="#bbb"/><line x1="115.4" y1="550" x2="115.4" y2="553" stroke="#bbb"/><line x1="121.8" y1="392" x2="121.8" y2="395" stroke="#bbb"/><line x1="121.8" y1="550" x2="121.8" y2="553" stroke="#bbb"/><line x1="128.3" y1="392" x2="128.3" y2="395" stroke="#bbb"/><line x1="128.3" y1="550" x2="128.3" y2="553" stroke="#bbb"/><line x1="134.7" y1="392" x2="134.7" y2="395" stroke="#bbb"/><line x1="134.7" y1="550" x2="134.7" y2="553" stroke="#bbb"/><line x1="141.2" y1="392" x2="141.2" y2="395" stroke="#bbb"/><line x1="141.2" y1="550" x2="141.2" y2="553" stroke="#bbb"/><line x1="147.7" y1="392" x2="147.7" y2="395" stroke="#bbb"/><line x1="147.7" y1="550" x2="147.7" y2="553" stroke="#bbb"/><line x1="154.1" y1="392" x2="154.1" y2="395" stroke="#bbb"/><line x1="154.1" y1="550" x2="154.1" y2="553" stroke="#bbb"/><line x1="160.6" y1="392" x2="160.6" y2="395" stroke="#bbb"/><line x1="160.6" y1="550" x2="160.6" y2="553" stroke="#bbb"/><line x1="167.0" y1="392" x2="167.0" y2="395" stroke="#bbb"/><line x1="167.0" y1="550" x2="167.0" y2="553" stroke="#bbb"/><line x1="173.5" y1="392" x2="173.5" y2="395" stroke="#bbb"/><line x1="173.5" y1="550" x2="173.5" y2="553" stroke="#bbb"/><line x1="180.0" y1="392" x2="180.0" y2="395" stroke="#bbb"/><line x1="180.0" y1="550" x2="180.0" y2="553" stroke="#bbb"/><line x1="186.4" y1="392" x2="186.4" y2="395" stroke="#bbb"/><line x1="186.4" y1="550" x2="186.4" y2="553" stroke="#bbb"/><line x1="192.9" y1="392" x2="192.9" y2="395" stroke="#bbb"/><line x1="192.9" y1="550" x2="192.9" y2="553" stroke="#bbb"/><line x1="199.3" y1="392" x2="199.3" y2="395" stroke="#bbb"/><line x1="199.3" y1="550" x2="199.3" y2="553" stroke="#bbb"/><line x1="205.8" y1="392" x2="205.8" y2="395" stroke="#bbb"/><line x1="205.8" y1="550" x2="205.8" y2="553" stroke="#bbb"/><line x1="212.3" y1="392" x2="212.3" y2="395" stroke="#bbb"/><line x1="212.3" y1="550" x2="212.3" y2="553" stroke="#bbb"/><line x1="218.7" y1="392" x2="218.7" y2="395" stroke="#bbb"/><line x1="218.7" y1="550" x2="218.7" y2="553" stroke="#bbb"/><line x1="225.2" y1="392" x2="225.2" y2="395" stroke="#bbb"/><line x1="225.2" y1="550" x2="225.2" y2="553" stroke="#bbb"/><line x1="231.6" y1="392" x2="231.6" y2="395" stroke="#bbb"/><line x1="231.6" y1="550" x2="231.6" y2="553" stroke="#bbb"/><line x1="238.1" y1="392" x2="238.1" y2="395" stroke="#bbb"/><line x1="238.1" y1="550" x2="238.1" y2="553" stroke="#bbb"/><line x1="244.6" y1="392" x2="244.6" y2="395" stroke="#bbb"/><line x1="244.6" y1="550" x2="244.6" y2="553" stroke="#bbb"/><line x1="251.0" y1="392" x2="251.0" y2="395" stroke="#bbb"/><line x1="251.0" y1="550" x2="251.0" y2="553" stroke="#bbb"/><line x1="257.5" y1="392" x2="257.5" y2="395" stroke="#bbb"/><line x1="257.5" y1="550" x2="257.5" y2="553" stroke="#bbb"/><line x1="263.9" y1="392" x2="263.9" y2="395" stroke="#bbb"/><line x1="263.9" y1="550" x2="263.9" y2="553" stroke="#bbb"/><line x1="270.4" y1="392" x2="270.4" y2="395" stroke="#bbb"/><line x1="270.4" y1="550" x2="270.4" y2="553" stroke="#bbb"/><line x1="276.9" y1="392" x2="276.9" y2="395" stroke="#bbb"/><line x1="276.9" y1="550" x2="276.9" y2="553" stroke="#bbb"/><line x1="283.3" y1="392" x2="283.3" y2="395" stroke="#bbb"/><line x1="283.3" y1="550" x2="283.3" y2="553" stroke="#bbb"/><line x1="289.8" y1="392" x2="289.8" y2="395" stroke="#bbb"/><line x1="289.8" y1="550" x2="289.8" y2="553" stroke="#bbb"/><line x1="296.2" y1="392" x2="296.2" y2="395" stroke="#bbb"/><line x1="296.2" y1="550" x2="296.2" y2="553" stroke="#bbb"/><line x1="302.7" y1="392" x2="302.7" y2="395" stroke="#bbb"/><line x1="302.7" y1="550" x2="302.7" y2="553" stroke="#bbb"/><line x1="309.2" y1="392" x2="309.2" y2="395" stroke="#bbb"/><line x1="309.2" y1="550" x2="309.2" y2="553" stroke="#bbb"/><line x1="315.6" y1="392" x2="315.6" y2="395" stroke="#bbb"/><line x1="315.6" y1="550" x2="315.6" y2="553" stroke="#bbb"/><line x1="322.1" y1="392" x2="322.1" y2="395" stroke="#bbb"/><line x1="322.1" y1="550" x2="322.1" y2="553" stroke="#bbb"/><line x1="328.5" y1="392" x2="328.5" y2="395" stroke="#bbb"/><line x1="328.5" y1="550" x2="328.5" y2="553" stroke="#bbb"/><line x1="9" y1="395.0" x2="12" y2="395.0" stroke="#bbb"/><line x1="324" y1="395.0" x2="327" y2="395.0" stroke="#bbb"/><line x1="9" y1="400.6" x2="12" y2="400.6" stroke="#bbb"/><line x1="324" y1="400.6" x2="327" y2="400.6" stroke="#bbb"/><line x1="9" y1="406.3" x2="12" y2="406.3" stroke="#bbb"/><line x1="324" y1="406.3" x2="327" y2="406.3" stroke="#bbb"/><line x1="9" y1="411.9" x2="14" y2="411.9" stroke="#bbb"/><line x1="322" y1="411.9" x2="327" y2="411.9" stroke="#bbb"/><line x1="9" y1="417.6" x2="12" y2="417.6" stroke="#bbb"/><line x1="324" y1="417.6" x2="327" y2="417.6" stroke="#bbb"/><line x1="9" y1="423.2" x2="12" y2="423.2" stroke="#bbb"/><line x1="324" y1="423.2" x2="327" y2="423.2" stroke="#bbb"/><line x1="9" y1="428.8" x2="12" y2="428.8" stroke="#bbb"/><line x1="324" y1="428.8" x2="327" y2="428.8" stroke="#bbb"/><line x1="9" y1="434.5" x2="12" y2="434.5" stroke="#bbb"/><line x1="324" y1="434.5" x2="327" y2="434.5" stroke="#bbb"/><line x1="9" y1="440.1" x2="14" y2="440.1" stroke="#bbb"/><line x1="322" y1="440.1" x2="327" y2="440.1" stroke="#bbb"/><line x1="9" y1="445.8" x2="12" y2="445.8" stroke="#bbb"/><line x1="324" y1="445.8" x2="327" y2="445.8" stroke="#bbb"/><line x1="9" y1="451.4" x2="12" y2="451.4" stroke="#bbb"/><line x1="324" y1="451.4" x2="327" y2="451.4" stroke="#bbb"/><line x1="9" y1="457.0" x2="12" y2="457.0" stroke="#bbb"/><line x1="324" y1="457.0" x2="327" y2="457.0" stroke="#bbb"/><line x1="9" y1="462.7" x2="12" y2="462.7" stroke="#bbb"/><line x1="324" y1="462.7" x2="327" y2="462.7" stroke="#bbb"/><line x1="9" y1="468.3" x2="14" y2="468.3" stroke="#bbb"/><line x1="322" y1="468.3" x2="327" y2="468.3" stroke="#bbb"/><line x1="9" y1="474.0" x2="12" y2="474.0" stroke="#bbb"/><line x1="324" y1="474.0" x2="327" y2="474.0" stroke="#bbb"/><line x1="9" y1="479.6" x2="12" y2="479.6" stroke="#bbb"/><line x1="324" y1="479.6" x2="327" y2="479.6" stroke="#bbb"/><line x1="9" y1="485.2" x2="12" y2="485.2" stroke="#bbb"/><line x1="324" y1="485.2" x2="327" y2="485.2" stroke="#bbb"/><line x1="9" y1="490.9" x2="12" y2="490.9" stroke="#bbb"/><line x1="324" y1="490.9" x2="327" y2="490.9" stroke="#bbb"/><line x1="9" y1="496.5" x2="14" y2="496.5" stroke="#bbb"/><line x1="322" y1="496.5" x2="327" y2="496.5" stroke="#bbb"/><line x1="9" y1="502.2" x2="12" y2="502.2" stroke="#bbb"/><line x1="324" y1="502.2" x2="327" y2="502.2" stroke="#bbb"/><line x1="9" y1="507.8" x2="12" y2="507.8" stroke="#bbb"/><line x1="324" y1="507.8" x2="327" y2="507.8" stroke="#bbb"/><line x1="9" y1="513.4" x2="12" y2="513.4" stroke="#bbb"/><line x1="324" y1="513.4" x2="327" y2="513.4" stroke="#bbb"/><line x1="9" y1="519.1" x2="12" y2="519.1" stroke="#bbb"/><line x1="324" y1="519.1" x2="327" y2="519.1" stroke="#bbb"/><line x1="9" y1="524.7" x2="14" y2="524.7" stroke="#bbb"/><line x1="322" y1="524.7" x2="327" y2="524.7" stroke="#bbb"/><line x1="9" y1="530.4" x2="12" y2="530.4" stroke="#bbb"/><line x1="324" y1="530.4" x2="327" y2="530.4" stroke="#bbb"/><line x1="9" y1="536.0" x2="12" y2="536.0" stroke="#bbb"/><line x1="324" y1="536.0" x2="327" y2="536.0" stroke="#bbb"/><line x1="9" y1="541.6" x2="12" y2="541.6" stroke="#bbb"/><line x1="324" y1="541.6" x2="327" y2="541.6" stroke="#bbb"/><line x1="9" y1="547.3" x2="12" y2="547.3" stroke="#bbb"/><line x1="324" y1="547.3" x2="327" y2="547.3" stroke="#bbb"/><line x1="9" y1="552.9" x2="14" y2="552.9" stroke="#bbb"/><line x1="322" y1="552.9" x2="327" y2="552.9" stroke="#bbb"/><line x1="9" y1="558.6" x2="12" y2="558.6" stroke="#bbb"/><line x1="324" y1="558.6" x2="327" y2="558.6" stroke="#bbb"/><path d="M9,396.2 L13,396.2 L14,400 L14,435 L14.7,440 L14.7,553" fill="none" stroke="#22dd22" stroke-width="1.6"/><path d="M327,396.2 L322,396.2 L321,400 L321,440 L320.3,445 L320.3,553" fill="none" stroke="#22dd22" stroke-width="1.6"/><path d="M16,505 L319,505 M24,500.5 L16,505 L24,509.5 M311,500.5 L319,505 L311,509.5" fill="none" stroke="#e020e0" stroke-width="1.4"/><text x="37.60000000000002" y="551" font-family="Liberation Sans" font-size="7.5" fill="#d8d8d8" text-anchor="middle">-0.4 UI</text><text x="69.90000000000002" y="551" font-family="Liberation Sans" font-size="7.5" fill="#d8d8d8" text-anchor="middle">-0.3 UI</text><text x="102.20000000000002" y="551" font-family="Liberation Sans" font-size="7.5" fill="#d8d8d8" text-anchor="middle">-0.2 UI</text><text x="134.5" y="551" font-family="Liberation Sans" font-size="7.5" fill="#d8d8d8" text-anchor="middle">-0.1 UI</text><text x="166.8" y="551" font-family="Liberation Sans" font-size="7.5" fill="#d8d8d8" text-anchor="middle">0 UI</text><text x="199.10000000000002" y="551" font-family="Liberation Sans" font-size="7.5" fill="#d8d8d8" text-anchor="middle">0.1 UI</text><text x="231.4" y="551" font-family="Liberation Sans" font-size="7.5" fill="#d8d8d8" text-anchor="middle">0.2 UI</text><text x="263.7" y="551" font-family="Liberation Sans" font-size="7.5" fill="#d8d8d8" text-anchor="middle">0.3 UI</text><text x="296.0" y="551" font-family="Liberation Sans" font-size="7.5" fill="#d8d8d8" text-anchor="middle">0.4 UI</text><text x="325" y="414.6" font-family="Liberation Sans" font-size="7.5" fill="#d8d8d8" text-anchor="end">1E-2 BER</text><text x="325" y="442.8" font-family="Liberation Sans" font-size="7.5" fill="#d8d8d8" text-anchor="end">1E-5 BER</text><text x="325" y="471.0" font-family="Liberation Sans" font-size="7.5" fill="#d8d8d8" text-anchor="end">1E-8 BER</text><text x="325" y="499.20000000000005" font-family="Liberation Sans" font-size="7.5" fill="#d8d8d8" text-anchor="end">1E-11 BER</text><text x="325" y="527.4" font-family="Liberation Sans" font-size="7.5" fill="#d8d8d8" text-anchor="end">1E-14 BER</text></svg>
<svg style="left:303px;top:396px" width="19" height="18"><polygon points="0,0 19,0 19,18" fill="#6a6a6a"/><circle cx="13.5" cy="4.5" r="2.3" fill="none" stroke="#e0e0e0" stroke-width="1"/><line x1="11.8" y1="6.2" x2="8.5" y2="9.5" stroke="#e0e0e0" stroke-width="1.2"/></svg>
<div class="b" style="left:330px;top:378.5px;width:318px;height:13.5px;background:#3c3c3c"></div>
<div class="b" style="left:330px;top:392px;width:318px;height:161px;background:#000"></div>
<div class="t " style="left:337.5px;top:381.33px;font-size:9.3px;color:#e8e8e8;font-weight:400;">Plot 2 - TIE Spectrum (Meas1)</div>
<svg style="left:633px;top:381.2px" width="10" height="10"><path d="M1.6 1.6L8.4 8.0M8.4 1.6L1.6 8.0" stroke="#c8c8c8" stroke-width="1.2"/></svg>
<div class="b" style="left:648px;top:378px;width:2px;height:175px;background:#8e8e8e"></div>
<svg style="left:330px;top:392px" width="318" height="161" viewBox="330 392 318 161"><line x1="329.6" y1="392" x2="329.6" y2="553" stroke="#777" stroke-dasharray="1,5"/><line x1="380.2" y1="392" x2="380.2" y2="553" stroke="#777" stroke-dasharray="1,5"/><line x1="430.8" y1="392" x2="430.8" y2="553" stroke="#777" stroke-dasharray="1,5"/><line x1="481.4" y1="392" x2="481.4" y2="553" stroke="#777" stroke-dasharray="1,5"/><line x1="532.0" y1="392" x2="532.0" y2="553" stroke="#777" stroke-dasharray="1,5"/><line x1="582.6" y1="392" x2="582.6" y2="553" stroke="#777" stroke-dasharray="1,5"/><line x1="633.2" y1="392" x2="633.2" y2="553" stroke="#777" stroke-dasharray="1,5"/><line x1="330" y1="424.0" x2="648" y2="424.0" stroke="#777" stroke-dasharray="1,9"/><line x1="330" y1="456.1" x2="648" y2="456.1" stroke="#777" stroke-dasharray="1,9"/><line x1="330" y1="488.2" x2="648" y2="488.2" stroke="#777" stroke-dasharray="1,9"/><line x1="330" y1="520.3" x2="648" y2="520.3" stroke="#777" stroke-dasharray="1,9"/><line x1="335.0" y1="392" x2="335.0" y2="395" stroke="#bbb"/><line x1="335.0" y1="550" x2="335.0" y2="553" stroke="#bbb"/><line x1="345.1" y1="392" x2="345.1" y2="395" stroke="#bbb"/><line x1="345.1" y1="550" x2="345.1" y2="553" stroke="#bbb"/><line x1="355.2" y1="392" x2="355.2" y2="395" stroke="#bbb"/><line x1="355.2" y1="550" x2="355.2" y2="553" stroke="#bbb"/><line x1="365.4" y1="392" x2="365.4" y2="395" stroke="#bbb"/><line x1="365.4" y1="550" x2="365.4" y2="553" stroke="#bbb"/><line x1="375.5" y1="392" x2="375.5" y2="395" stroke="#bbb"/><line x1="375.5" y1="550" x2="375.5" y2="553" stroke="#bbb"/><line x1="385.6" y1="392" x2="385.6" y2="395" stroke="#bbb"/><line x1="385.6" y1="550" x2="385.6" y2="553" stroke="#bbb"/><line x1="395.7" y1="392" x2="395.7" y2="395" stroke="#bbb"/><line x1="395.7" y1="550" x2="395.7" y2="553" stroke="#bbb"/><line x1="405.8" y1="392" x2="405.8" y2="395" stroke="#bbb"/><line x1="405.8" y1="550" x2="405.8" y2="553" stroke="#bbb"/><line x1="416.0" y1="392" x2="416.0" y2="395" stroke="#bbb"/><line x1="416.0" y1="550" x2="416.0" y2="553" stroke="#bbb"/><line x1="426.1" y1="392" x2="426.1" y2="395" stroke="#bbb"/><line x1="426.1" y1="550" x2="426.1" y2="553" stroke="#bbb"/><line x1="436.2" y1="392" x2="436.2" y2="395" stroke="#bbb"/><line x1="436.2" y1="550" x2="436.2" y2="553" stroke="#bbb"/><line x1="446.3" y1="392" x2="446.3" y2="395" stroke="#bbb"/><line x1="446.3" y1="550" x2="446.3" y2="553" stroke="#bbb"/><line x1="456.4" y1="392" x2="456.4" y2="395" stroke="#bbb"/><line x1="456.4" y1="550" x2="456.4" y2="553" stroke="#bbb"/><line x1="466.6" y1="392" x2="466.6" y2="395" stroke="#bbb"/><line x1="466.6" y1="550" x2="466.6" y2="553" stroke="#bbb"/><line x1="476.7" y1="392" x2="476.7" y2="395" stroke="#bbb"/><line x1="476.7" y1="550" x2="476.7" y2="553" stroke="#bbb"/><line x1="486.8" y1="392" x2="486.8" y2="395" stroke="#bbb"/><line x1="486.8" y1="550" x2="486.8" y2="553" stroke="#bbb"/><line x1="496.9" y1="392" x2="496.9" y2="395" stroke="#bbb"/><line x1="496.9" y1="550" x2="496.9" y2="553" stroke="#bbb"/><line x1="507.0" y1="392" x2="507.0" y2="395" stroke="#bbb"/><line x1="507.0" y1="550" x2="507.0" y2="553" stroke="#bbb"/><line x1="517.2" y1="392" x2="517.2" y2="395" stroke="#bbb"/><line x1="517.2" y1="550" x2="517.2" y2="553" stroke="#bbb"/><line x1="527.3" y1="392" x2="527.3" y2="395" stroke="#bbb"/><line x1="527.3" y1="550" x2="527.3" y2="553" stroke="#bbb"/><line x1="537.4" y1="392" x2="537.4" y2="395" stroke="#bbb"/><line x1="537.4" y1="550" x2="537.4" y2="553" stroke="#bbb"/><line x1="547.5" y1="392" x2="547.5" y2="395" stroke="#bbb"/><line x1="547.5" y1="550" x2="547.5" y2="553" stroke="#bbb"/><line x1="557.6" y1="392" x2="557.6" y2="395" stroke="#bbb"/><line x1="557.6" y1="550" x2="557.6" y2="553" stroke="#bbb"/><line x1="567.8" y1="392" x2="567.8" y2="395" stroke="#bbb"/><line x1="567.8" y1="550" x2="567.8" y2="553" stroke="#bbb"/><line x1="577.9" y1="392" x2="577.9" y2="395" stroke="#bbb"/><line x1="577.9" y1="550" x2="577.9" y2="553" stroke="#bbb"/><line x1="588.0" y1="392" x2="588.0" y2="395" stroke="#bbb"/><line x1="588.0" y1="550" x2="588.0" y2="553" stroke="#bbb"/><line x1="598.1" y1="392" x2="598.1" y2="395" stroke="#bbb"/><line x1="598.1" y1="550" x2="598.1" y2="553" stroke="#bbb"/><line x1="608.2" y1="392" x2="608.2" y2="395" stroke="#bbb"/><line x1="608.2" y1="550" x2="608.2" y2="553" stroke="#bbb"/><line x1="618.4" y1="392" x2="618.4" y2="395" stroke="#bbb"/><line x1="618.4" y1="550" x2="618.4" y2="553" stroke="#bbb"/><line x1="628.5" y1="392" x2="628.5" y2="395" stroke="#bbb"/><line x1="628.5" y1="550" x2="628.5" y2="553" stroke="#bbb"/><line x1="638.6" y1="392" x2="638.6" y2="395" stroke="#bbb"/><line x1="638.6" y1="550" x2="638.6" y2="553" stroke="#bbb"/><line x1="648.7" y1="392" x2="648.7" y2="395" stroke="#bbb"/><line x1="648.7" y1="550" x2="648.7" y2="553" stroke="#bbb"/><line x1="330" y1="424.0" x2="336" y2="424.0" stroke="#bbb"/><line x1="642" y1="424.0" x2="648" y2="424.0" stroke="#bbb"/><line x1="330" y1="414.3" x2="333" y2="414.3" stroke="#bbb"/><line x1="645" y1="414.3" x2="648" y2="414.3" stroke="#bbb"/><line x1="330" y1="408.7" x2="333" y2="408.7" stroke="#bbb"/><line x1="645" y1="408.7" x2="648" y2="408.7" stroke="#bbb"/><line x1="330" y1="404.7" x2="333" y2="404.7" stroke="#bbb"/><line x1="645" y1="404.7" x2="648" y2="404.7" stroke="#bbb"/><line x1="330" y1="401.6" x2="333" y2="401.6" stroke="#bbb"/><line x1="645" y1="401.6" x2="648" y2="401.6" stroke="#bbb"/><line x1="330" y1="399.0" x2="333" y2="399.0" stroke="#bbb"/><line x1="645" y1="399.0" x2="648" y2="399.0" stroke="#bbb"/><line x1="330" y1="396.9" x2="333" y2="396.9" stroke="#bbb"/><line x1="645" y1="396.9" x2="648" y2="396.9" stroke="#bbb"/><line x1="330" y1="395.0" x2="333" y2="395.0" stroke="#bbb"/><line x1="645" y1="395.0" x2="648" y2="395.0" stroke="#bbb"/><line x1="330" y1="393.4" x2="333" y2="393.4" stroke="#bbb"/><line x1="645" y1="393.4" x2="648" y2="393.4" stroke="#bbb"/><line x1="330" y1="456.1" x2="336" y2="456.1" stroke="#bbb"/><line x1="642" y1="456.1" x2="648" y2="456.1" stroke="#bbb"/><line x1="330" y1="446.4" x2="333" y2="446.4" stroke="#bbb"/><line x1="645" y1="446.4" x2="648" y2="446.4" stroke="#bbb"/><line x1="330" y1="440.8" x2="333" y2="440.8" stroke="#bbb"/><line x1="645" y1="440.8" x2="648" y2="440.8" stroke="#bbb"/><line x1="330" y1="436.8" x2="333" y2="436.8" stroke="#bbb"/><line x1="645" y1="436.8" x2="648" y2="436.8" stroke="#bbb"/><line x1="330" y1="433.7" x2="333" y2="433.7" stroke="#bbb"/><line x1="645" y1="433.7" x2="648" y2="433.7" stroke="#bbb"/><line x1="330" y1="431.1" x2="333" y2="431.1" stroke="#bbb"/><line x1="645" y1="431.1" x2="648" y2="431.1" stroke="#bbb"/><line x1="330" y1="429.0" x2="333" y2="429.0" stroke="#bbb"/><line x1="645" y1="429.0" x2="648" y2="429.0" stroke="#bbb"/><line x1="330" y1="427.1" x2="333" y2="427.1" stroke="#bbb"/><line x1="645" y1="427.1" x2="648" y2="427.1" stroke="#bbb"/><line x1="330" y1="425.5" x2="333" y2="425.5" stroke="#bbb"/><line x1="645" y1="425.5" x2="648" y2="425.5" stroke="#bbb"/><line x1="330" y1="488.2" x2="336" y2="488.2" stroke="#bbb"/><line x1="642" y1="488.2" x2="648" y2="488.2" stroke="#bbb"/><line x1="330" y1="478.5" x2="333" y2="478.5" stroke="#bbb"/><line x1="645" y1="478.5" x2="648" y2="478.5" stroke="#bbb"/><line x1="330" y1="472.9" x2="333" y2="472.9" stroke="#bbb"/><line x1="645" y1="472.9" x2="648" y2="472.9" stroke="#bbb"/><line x1="330" y1="468.9" x2="333" y2="468.9" stroke="#bbb"/><line x1="645" y1="468.9" x2="648" y2="468.9" stroke="#bbb"/><line x1="330" y1="465.8" x2="333" y2="465.8" stroke="#bbb"/><line x1="645" y1="465.8" x2="648" y2="465.8" stroke="#bbb"/><line x1="330" y1="463.2" x2="333" y2="463.2" stroke="#bbb"/><line x1="645" y1="463.2" x2="648" y2="463.2" stroke="#bbb"/><line x1="330" y1="461.1" x2="333" y2="461.1" stroke="#bbb"/><line x1="645" y1="461.1" x2="648" y2="461.1" stroke="#bbb"/><line x1="330" y1="459.2" x2="333" y2="459.2" stroke="#bbb"/><line x1="645" y1="459.2" x2="648" y2="459.2" stroke="#bbb"/><line x1="330" y1="457.6" x2="333" y2="457.6" stroke="#bbb"/><line x1="645" y1="457.6" x2="648" y2="457.6" stroke="#bbb"/><line x1="330" y1="520.3" x2="336" y2="520.3" stroke="#bbb"/><line x1="642" y1="520.3" x2="648" y2="520.3" stroke="#bbb"/><line x1="330" y1="510.6" x2="333" y2="510.6" stroke="#bbb"/><line x1="645" y1="510.6" x2="648" y2="510.6" stroke="#bbb"/><line x1="330" y1="505.0" x2="333" y2="505.0" stroke="#bbb"/><line x1="645" y1="505.0" x2="648" y2="505.0" stroke="#bbb"/><line x1="330" y1="501.0" x2="333" y2="501.0" stroke="#bbb"/><line x1="645" y1="501.0" x2="648" y2="501.0" stroke="#bbb"/><line x1="330" y1="497.9" x2="333" y2="497.9" stroke="#bbb"/><line x1="645" y1="497.9" x2="648" y2="497.9" stroke="#bbb"/><line x1="330" y1="495.3" x2="333" y2="495.3" stroke="#bbb"/><line x1="645" y1="495.3" x2="648" y2="495.3" stroke="#bbb"/><line x1="330" y1="493.2" x2="333" y2="493.2" stroke="#bbb"/><line x1="645" y1="493.2" x2="648" y2="493.2" stroke="#bbb"/><line x1="330" y1="491.3" x2="333" y2="491.3" stroke="#bbb"/><line x1="645" y1="491.3" x2="648" y2="491.3" stroke="#bbb"/><line x1="330" y1="489.7" x2="333" y2="489.7" stroke="#bbb"/><line x1="645" y1="489.7" x2="648" y2="489.7" stroke="#bbb"/><line x1="330" y1="552.4" x2="336" y2="552.4" stroke="#bbb"/><line x1="642" y1="552.4" x2="648" y2="552.4" stroke="#bbb"/><line x1="330" y1="542.7" x2="333" y2="542.7" stroke="#bbb"/><line x1="645" y1="542.7" x2="648" y2="542.7" stroke="#bbb"/><line x1="330" y1="537.1" x2="333" y2="537.1" stroke="#bbb"/><line x1="645" y1="537.1" x2="648" y2="537.1" stroke="#bbb"/><line x1="330" y1="533.1" x2="333" y2="533.1" stroke="#bbb"/><line x1="645" y1="533.1" x2="648" y2="533.1" stroke="#bbb"/><line x1="330" y1="530.0" x2="333" y2="530.0" stroke="#bbb"/><line x1="645" y1="530.0" x2="648" y2="530.0" stroke="#bbb"/><line x1="330" y1="527.4" x2="333" y2="527.4" stroke="#bbb"/><line x1="645" y1="527.4" x2="648" y2="527.4" stroke="#bbb"/><line x1="330" y1="525.3" x2="333" y2="525.3" stroke="#bbb"/><line x1="645" y1="525.3" x2="648" y2="525.3" stroke="#bbb"/><line x1="330" y1="523.4" x2="333" y2="523.4" stroke="#bbb"/><line x1="645" y1="523.4" x2="648" y2="523.4" stroke="#bbb"/><line x1="330" y1="521.8" x2="333" y2="521.8" stroke="#bbb"/><line x1="645" y1="521.8" x2="648" y2="521.8" stroke="#bbb"/><path d="M331.0,489.5 L333.0,493.2 L334.8,486.6 L337.0,496.1 L338.9,478.9 L340.2,483.8 L341.9,481.7 L344.1,482.6 L345.6,484.2 L348.0,486.0 L350.1,490.8 L351.5,477.2 L353.1,480.5 L355.5,484.1 L357.2,491.3 L358.6,494.7 L360.9,475.5 L362.6,486.6 L364.4,512.0 L366.7,485.8 L368.3,484.9 L370.6,512.0 L372.9,484.4 L374.8,472.1 L376.9,489.7 L379.2,489.5 L380.7,497.0 L382.4,477.2 L384.1,477.4 L386.5,486.1 L388.3,487.1 L390.3,484.5 L392.7,475.9 L394.6,484.2 L396.8,485.7 L398.7,493.4 L400.7,485.8 L402.3,487.9 L404.7,465.0 L406.3,491.8 L407.7,495.8 L409.9,489.1 L411.6,479.7 L413.9,474.4 L416.2,466.4 L418.6,495.6 L420.5,490.0 L422.2,478.6 L423.8,487.0 L425.2,481.1 L427.4,485.2 L429.6,476.0 L431.0,483.7 L432.7,489.8 L434.2,489.8 L436.5,486.7 L438.9,483.8 L440.5,476.0 L442.8,472.8 L444.1,482.2 L445.7,490.6 L447.9,473.4 L449.9,475.7 L452.1,488.1 L453.8,478.5 L455.9,482.8 L457.2,477.1 L458.6,468.0 L460.5,475.5 L462.5,473.3 L464.0,462.0 L466.3,493.9 L467.8,486.6 L469.1,485.7 L470.9,492.9 L472.9,494.9 L474.4,478.0 L476.2,482.5 L477.7,486.2 L479.5,487.9 L481.5,482.0 L483.6,483.3 L485.9,485.9 L487.2,471.8 L489.0,495.0 L490.5,488.6 L492.6,483.8 L494.2,494.8 L495.6,479.4 L497.9,487.9 L499.5,475.2 L501.8,483.8 L503.2,477.3 L505.3,479.0 L507.7,480.0 L509.6,494.1 L511.5,495.8 L513.9,489.0 L515.6,474.8 L517.0,504.1 L518.4,495.5 L520.5,489.7 L522.3,483.0 L524.3,452.0 L526.1,452.0 L527.8,483.2 L529.4,491.1 L531.0,486.3 L533.0,488.6 L534.8,473.8 L536.4,477.9 L538.4,489.3 L540.7,490.9 L542.6,488.1 L544.7,493.4 L546.7,476.3 L548.8,477.2 L550.9,510.0 L552.9,510.0 L554.6,499.6 L556.6,492.2 L559.0,467.9 L560.3,481.7 L562.0,489.6 L563.5,481.3 L565.1,483.1 L567.5,483.6 L568.9,476.2 L571.2,482.6 L572.9,508.0 L574.9,481.7 L577.3,479.1 L578.9,483.6 L580.4,497.5 L582.4,486.9 L584.0,493.0 L585.8,440.0 L587.5,481.1 L589.5,483.2 L591.2,488.3 L592.8,490.7 L594.2,500.5 L596.4,494.0 L597.7,479.6 L599.5,493.3 L601.6,486.3 L603.2,492.8 L604.6,484.4 L606.2,469.8 L607.9,488.2 L609.4,487.4 L611.3,471.4 L612.6,486.7 L614.5,490.6 L616.1,488.4 L618.4,471.2 L620.7,493.2 L622.1,485.0 L624.3,483.8 L625.8,472.2 L627.2,487.8 L629.2,475.2 L631.0,486.0 L632.6,478.0 L634.3,481.1 L636.6,493.4 L638.0,491.6 L640.0,487.5 L641.5,483.7 L642.9,486.4 L644.7,479.7 L645.0,500.0 L647.0,430.0 L648.0,400.0" fill="none" stroke="#c04ad0" stroke-width="1"/><text x="380.2" y="551" font-family="Liberation Sans" font-size="7.5" fill="#d8d8d8" text-anchor="middle">200 kHz</text><text x="430.8" y="551" font-family="Liberation Sans" font-size="7.5" fill="#d8d8d8" text-anchor="middle">400 kHz</text><text x="481.4" y="551" font-family="Liberation Sans" font-size="7.5" fill="#d8d8d8" text-anchor="middle">600 kHz</text><text x="532.0" y="551" font-family="Liberation Sans" font-size="7.5" fill="#d8d8d8" text-anchor="middle">800 kHz</text><text x="582.6" y="551" font-family="Liberation Sans" font-size="7.5" fill="#d8d8d8" text-anchor="middle">1 MHz</text><text x="645" y="427.0" font-family="Liberation Sans" font-size="7.5" fill="#d8d8d8" text-anchor="end">1 ns</text><text x="645" y="459.1" font-family="Liberation Sans" font-size="7.5" fill="#d8d8d8" text-anchor="end">100 ps</text><text x="645" y="491.2" font-family="Liberation Sans" font-size="7.5" fill="#d8d8d8" text-anchor="end">10 ps</text><text x="645" y="523.3" font-family="Liberation Sans" font-size="7.5" fill="#d8d8d8" text-anchor="end">1 ps</text></svg>
<svg style="left:624px;top:396px" width="19" height="18"><polygon points="0,0 19,0 19,18" fill="#6a6a6a"/><circle cx="13.5" cy="4.5" r="2.3" fill="none" stroke="#e0e0e0" stroke-width="1"/><line x1="11.8" y1="6.2" x2="8.5" y2="9.5" stroke="#e0e0e0" stroke-width="1.2"/></svg>
<div class="b" style="left:650px;top:378.5px;width:318px;height:13.5px;background:#3c3c3c"></div>
<div class="b" style="left:650px;top:392px;width:318px;height:161px;background:#000"></div>
<div class="t " style="left:657.5px;top:382.08px;font-size:9px;color:#e8e8e8;font-weight:400;">Waveform View</div>
<svg style="left:750px;top:378px" width="120" height="15"><path d="M7.5,3.5 h-3 v9 h3 M112.5,3.5 h3 v9 h-3 M5,8.2 H115" fill="none" stroke="#cfcfcf" stroke-width="1"/><rect x="55.5" y="4" width="7" height="9" fill="#3a3a3a" stroke="#e8902c"/><polygon points="55,0 63,0 59,3" fill="#e8902c"/><text x="59" y="11.5" font-size="7" text-anchor="middle" font-family="Liberation Sans" fill="#e8c090">T</text></svg>
<svg style="left:650px;top:410px" width="318" height="56"><g fill="#7e7600"><rect x="0.0" y="7" width="1.8" height="41"/><rect x="3.6" y="7" width="1.8" height="41"/><rect x="7.2" y="7" width="2.2" height="41"/><rect x="10.3" y="7" width="2.2" height="41"/><rect x="13.4" y="7" width="3.4" height="41"/><rect x="17.9" y="7" width="2.2" height="41"/><rect x="21.2" y="7" width="1.8" height="41"/><rect x="23.9" y="7" width="2.2" height="41"/><rect x="27.2" y="7" width="3.4" height="41"/><rect x="32.4" y="7" width="3.4" height="41"/><rect x="37.6" y="7" width="2.2" height="41"/><rect x="40.7" y="7" width="1.8" height="41"/><rect x="43.4" y="7" width="3.0" height="41"/><rect x="47.8" y="7" width="2.2" height="41"/><rect x="51.1" y="7" width="2.6" height="41"/><rect x="55.5" y="7" width="2.6" height="41"/><rect x="59.2" y="7" width="2.2" height="41"/><rect x="62.5" y="7" width="3.0" height="41"/><rect x="66.4" y="7" width="1.8" height="41"/><rect x="69.3" y="7" width="2.6" height="41"/><rect x="73.0" y="7" width="2.2" height="41"/><rect x="76.3" y="7" width="3.0" height="41"/><rect x="80.2" y="7" width="1.8" height="41"/><rect x="83.8" y="7" width="2.2" height="41"/><rect x="87.1" y="7" width="3.0" height="41"/><rect x="91.5" y="7" width="2.2" height="41"/><rect x="95.1" y="7" width="2.2" height="41"/><rect x="99.1" y="7" width="1.8" height="41"/><rect x="102.3" y="7" width="2.6" height="41"/><rect x="106.3" y="7" width="2.6" height="41"/><rect x="110.7" y="7" width="3.0" height="41"/><rect x="115.1" y="7" width="2.2" height="41"/><rect x="118.2" y="7" width="2.6" height="41"/><rect x="121.9" y="7" width="3.4" height="41"/><rect x="126.7" y="7" width="1.8" height="41"/><rect x="129.6" y="7" width="2.2" height="41"/><rect x="132.7" y="7" width="3.4" height="41"/><rect x="137.5" y="7" width="1.8" height="41"/><rect x="141.1" y="7" width="2.6" height="41"/><rect x="145.1" y="7" width="2.2" height="41"/><rect x="148.2" y="7" width="3.0" height="41"/><rect x="152.3" y="7" width="2.6" height="41"/><rect x="156.7" y="7" width="3.0" height="41"/><rect x="160.6" y="7" width="3.4" height="41"/><rect x="164.9" y="7" width="2.6" height="41"/><rect x="168.4" y="7" width="1.8" height="41"/><rect x="171.3" y="7" width="2.2" height="41"/><rect x="174.9" y="7" width="2.2" height="41"/><rect x="178.2" y="7" width="3.0" height="41"/><rect x="182.1" y="7" width="3.0" height="41"/><rect x="186.5" y="7" width="2.6" height="41"/><rect x="190.9" y="7" width="3.4" height="41"/><rect x="195.2" y="7" width="1.8" height="41"/><rect x="198.8" y="7" width="2.2" height="41"/><rect x="202.8" y="7" width="1.8" height="41"/><rect x="206.0" y="7" width="3.0" height="41"/><rect x="210.8" y="7" width="2.6" height="41"/><rect x="214.5" y="7" width="1.8" height="41"/><rect x="217.2" y="7" width="3.0" height="41"/><rect x="221.6" y="7" width="3.0" height="41"/><rect x="225.7" y="7" width="1.8" height="41"/><rect x="228.6" y="7" width="1.8" height="41"/><rect x="231.3" y="7" width="3.4" height="41"/><rect x="235.8" y="7" width="2.2" height="41"/><rect x="239.4" y="7" width="2.2" height="41"/><rect x="243.4" y="7" width="3.4" height="41"/><rect x="248.6" y="7" width="2.2" height="41"/><rect x="251.9" y="7" width="3.4" height="41"/><rect x="257.1" y="7" width="2.6" height="41"/><rect x="261.5" y="7" width="2.6" height="41"/><rect x="265.2" y="7" width="2.6" height="41"/><rect x="268.7" y="7" width="3.4" height="41"/><rect x="273.5" y="7" width="2.2" height="41"/><rect x="277.1" y="7" width="3.0" height="41"/><rect x="281.2" y="7" width="1.8" height="41"/><rect x="283.9" y="7" width="3.0" height="41"/><rect x="288.0" y="7" width="2.2" height="41"/><rect x="291.3" y="7" width="3.0" height="41"/><rect x="295.7" y="7" width="2.2" height="41"/><rect x="299.7" y="7" width="2.6" height="41"/><rect x="303.4" y="7" width="2.6" height="41"/><rect x="306.9" y="7" width="1.8" height="41"/><rect x="310.5" y="7" width="3.4" height="41"/><rect x="315.3" y="7" width="2.6" height="41"/></g><g fill="#e2d810"><path d="M0.0,0.5 h1.1 l0.7,2 v6 h-1.8 z"/><path d="M3.6,1 h1.1 l0.7,2 v6 h-1.8 z"/><path d="M7.2,0.5 h1.3 l0.9,2 v6 h-2.2 z"/><path d="M10.3,0 h1.3 l0.9,2 v6 h-2.2 z"/><path d="M13.4,0.5 h2.0 l1.4,2 v6 h-3.4 z"/><path d="M17.9,0 h1.3 l0.9,2 v6 h-2.2 z"/><path d="M21.2,0.5 h1.1 l0.7,2 v6 h-1.8 z"/><path d="M23.9,0.5 h1.3 l0.9,2 v6 h-2.2 z"/><path d="M27.2,1 h2.0 l1.4,2 v6 h-3.4 z"/><path d="M32.4,0 h2.0 l1.4,2 v6 h-3.4 z"/><path d="M37.6,0 h1.3 l0.9,2 v6 h-2.2 z"/><path d="M40.7,0 h1.1 l0.7,2 v6 h-1.8 z"/><path d="M43.4,0.5 h1.8 l1.2,2 v6 h-3.0 z"/><path d="M47.8,0.5 h1.3 l0.9,2 v6 h-2.2 z"/><path d="M51.1,0.5 h1.6 l1.0,2 v6 h-2.6 z"/><path d="M55.5,1 h1.6 l1.0,2 v6 h-2.6 z"/><path d="M59.2,0.5 h1.3 l0.9,2 v6 h-2.2 z"/><path d="M62.5,0 h1.8 l1.2,2 v6 h-3.0 z"/><path d="M66.4,0 h1.1 l0.7,2 v6 h-1.8 z"/><path d="M69.3,0 h1.6 l1.0,2 v6 h-2.6 z"/><path d="M73.0,0 h1.3 l0.9,2 v6 h-2.2 z"/><path d="M76.3,1 h1.8 l1.2,2 v6 h-3.0 z"/><path d="M80.2,1 h1.1 l0.7,2 v6 h-1.8 z"/><path d="M83.8,0.5 h1.3 l0.9,2 v6 h-2.2 z"/><path d="M87.1,0.5 h1.8 l1.2,2 v6 h-3.0 z"/><path d="M91.5,0.5 h1.3 l0.9,2 v6 h-2.2 z"/><path d="M95.1,1 h1.3 l0.9,2 v6 h-2.2 z"/><path d="M99.1,0.5 h1.1 l0.7,2 v6 h-1.8 z"/><path d="M102.3,1 h1.6 l1.0,2 v6 h-2.6 z"/><path d="M106.3,0 h1.6 l1.0,2 v6 h-2.6 z"/><path d="M110.7,0.5 h1.8 l1.2,2 v6 h-3.0 z"/><path d="M115.1,0 h1.3 l0.9,2 v6 h-2.2 z"/><path d="M118.2,0 h1.6 l1.0,2 v6 h-2.6 z"/><path d="M121.9,0.5 h2.0 l1.4,2 v6 h-3.4 z"/><path d="M126.7,0 h1.1 l0.7,2 v6 h-1.8 z"/><path d="M129.6,0.5 h1.3 l0.9,2 v6 h-2.2 z"/><path d="M132.7,0.5 h2.0 l1.4,2 v6 h-3.4 z"/><path d="M137.5,0 h1.1 l0.7,2 v6 h-1.8 z"/><path d="M141.1,0 h1.6 l1.0,2 v6 h-2.6 z"/><path d="M145.1,0.5 h1.3 l0.9,2 v6 h-2.2 z"/><path d="M148.2,0.5 h1.8 l1.2,2 v6 h-3.0 z"/><path d="M152.3,0.5 h1.6 l1.0,2 v6 h-2.6 z"/><path d="M156.7,0.5 h1.8 l1.2,2 v6 h-3.0 z"/><path d="M160.6,0.5 h2.0 l1.4,2 v6 h-3.4 z"/><path d="M164.9,0 h1.6 l1.0,2 v6 h-2.6 z"/><path d="M168.4,1 h1.1 l0.7,2 v6 h-1.8 z"/><path d="M171.3,0.5 h1.3 l0.9,2 v6 h-2.2 z"/><path d="M174.9,0.5 h1.3 l0.9,2 v6 h-2.2 z"/><path d="M178.2,0 h1.8 l1.2,2 v6 h-3.0 z"/><path d="M182.1,0 h1.8 l1.2,2 v6 h-3.0 z"/><path d="M186.5,1 h1.6 l1.0,2 v6 h-2.6 z"/><path d="M190.9,0 h2.0 l1.4,2 v6 h-3.4 z"/><path d="M195.2,1 h1.1 l0.7,2 v6 h-1.8 z"/><path d="M198.8,1 h1.3 l0.9,2 v6 h-2.2 z"/><path d="M202.8,0.5 h1.1 l0.7,2 v6 h-1.8 z"/><path d="M206.0,0 h1.8 l1.2,2 v6 h-3.0 z"/><path d="M210.8,1 h1.6 l1.0,2 v6 h-2.6 z"/><path d="M214.5,1 h1.1 l0.7,2 v6 h-1.8 z"/><path d="M217.2,1 h1.8 l1.2,2 v6 h-3.0 z"/><path d="M221.6,0 h1.8 l1.2,2 v6 h-3.0 z"/><path d="M225.7,0 h1.1 l0.7,2 v6 h-1.8 z"/><path d="M228.6,0.5 h1.1 l0.7,2 v6 h-1.8 z"/><path d="M231.3,1 h2.0 l1.4,2 v6 h-3.4 z"/><path d="M235.8,0.5 h1.3 l0.9,2 v6 h-2.2 z"/><path d="M239.4,0.5 h1.3 l0.9,2 v6 h-2.2 z"/><path d="M243.4,1 h2.0 l1.4,2 v6 h-3.4 z"/><path d="M248.6,0.5 h1.3 l0.9,2 v6 h-2.2 z"/><path d="M251.9,1 h2.0 l1.4,2 v6 h-3.4 z"/><path d="M257.1,0.5 h1.6 l1.0,2 v6 h-2.6 z"/><path d="M261.5,0.5 h1.6 l1.0,2 v6 h-2.6 z"/><path d="M265.2,0.5 h1.6 l1.0,2 v6 h-2.6 z"/><path d="M268.7,0.5 h2.0 l1.4,2 v6 h-3.4 z"/><path d="M273.5,1 h1.3 l0.9,2 v6 h-2.2 z"/><path d="M277.1,0 h1.8 l1.2,2 v6 h-3.0 z"/><path d="M281.2,1 h1.1 l0.7,2 v6 h-1.8 z"/><path d="M283.9,0 h1.8 l1.2,2 v6 h-3.0 z"/><path d="M288.0,0.5 h1.3 l0.9,2 v6 h-2.2 z"/><path d="M291.3,0 h1.8 l1.2,2 v6 h-3.0 z"/><path d="M295.7,1 h1.3 l0.9,2 v6 h-2.2 z"/><path d="M299.7,0 h1.6 l1.0,2 v6 h-2.6 z"/><path d="M303.4,1 h1.6 l1.0,2 v6 h-2.6 z"/><path d="M306.9,0 h1.1 l0.7,2 v6 h-1.8 z"/><path d="M310.5,0 h2.0 l1.4,2 v6 h-3.4 z"/><path d="M315.3,0.5 h1.6 l1.0,2 v6 h-2.6 z"/></g><g fill="#e2d810" opacity="0.9"><rect x="0.0" y="47" width="1.8" height="7"/><rect x="3.6" y="48" width="1.8" height="8"/><rect x="7.2" y="48" width="2.2" height="7"/><rect x="10.3" y="48" width="2.2" height="8"/><rect x="13.4" y="47" width="3.4" height="7"/><rect x="17.9" y="48" width="2.2" height="6"/><rect x="21.2" y="47" width="1.8" height="7"/><rect x="23.9" y="48" width="2.2" height="7"/><rect x="27.2" y="48" width="3.4" height="8"/><rect x="32.4" y="47" width="3.4" height="8"/><rect x="37.6" y="48" width="2.2" height="6"/><rect x="40.7" y="48" width="1.8" height="7"/><rect x="43.4" y="47" width="3.0" height="7"/><rect x="47.8" y="47" width="2.2" height="7"/><rect x="51.1" y="47" width="2.6" height="8"/><rect x="55.5" y="48" width="2.6" height="8"/><rect x="59.2" y="47" width="2.2" height="6"/><rect x="62.5" y="48" width="3.0" height="6"/><rect x="66.4" y="47" width="1.8" height="7"/><rect x="69.3" y="48" width="2.6" height="8"/><rect x="73.0" y="47" width="2.2" height="7"/><rect x="76.3" y="47" width="3.0" height="6"/><rect x="80.2" y="47" width="1.8" height="6"/><rect x="83.8" y="48" width="2.2" height="8"/><rect x="87.1" y="47" width="3.0" height="6"/><rect x="91.5" y="47" width="2.2" height="7"/><rect x="95.1" y="47" width="2.2" height="6"/><rect x="99.1" y="47" width="1.8" height="7"/><rect x="102.3" y="48" width="2.6" height="8"/><rect x="106.3" y="47" width="2.6" height="6"/><rect x="110.7" y="47" width="3.0" height="6"/><rect x="115.1" y="48" width="2.2" height="8"/><rect x="118.2" y="47" width="2.6" height="8"/><rect x="121.9" y="48" width="3.4" height="6"/><rect x="126.7" y="47" width="1.8" height="7"/><rect x="129.6" y="48" width="2.2" height="7"/><rect x="132.7" y="47" width="3.4" height="7"/><rect x="137.5" y="47" width="1.8" height="7"/><rect x="141.1" y="47" width="2.6" height="8"/><rect x="145.1" y="47" width="2.2" height="8"/><rect x="148.2" y="47" width="3.0" height="7"/><rect x="152.3" y="48" width="2.6" height="6"/><rect x="156.7" y="48" width="3.0" height="7"/><rect x="160.6" y="48" width="3.4" height="6"/><rect x="164.9" y="48" width="2.6" height="8"/><rect x="168.4" y="47" width="1.8" height="7"/><rect x="171.3" y="47" width="2.2" height="7"/><rect x="174.9" y="48" width="2.2" height="6"/><rect x="178.2" y="48" width="3.0" height="7"/><rect x="182.1" y="47" width="3.0" height="7"/><rect x="186.5" y="47" width="2.6" height="6"/><rect x="190.9" y="47" width="3.4" height="7"/><rect x="195.2" y="48" width="1.8" height="6"/><rect x="198.8" y="47" width="2.2" height="8"/><rect x="202.8" y="47" width="1.8" height="7"/><rect x="206.0" y="47" width="3.0" height="8"/><rect x="210.8" y="48" width="2.6" height="7"/><rect x="214.5" y="48" width="1.8" height="8"/><rect x="217.2" y="48" width="3.0" height="8"/><rect x="221.6" y="48" width="3.0" height="7"/><rect x="225.7" y="48" width="1.8" height="8"/><rect x="228.6" y="47" width="1.8" height="7"/><rect x="231.3" y="47" width="3.4" height="8"/><rect x="235.8" y="47" width="2.2" height="8"/><rect x="239.4" y="47" width="2.2" height="8"/><rect x="243.4" y="48" width="3.4" height="8"/><rect x="248.6" y="48" width="2.2" height="6"/><rect x="251.9" y="48" width="3.4" height="7"/><rect x="257.1" y="48" width="2.6" height="7"/><rect x="261.5" y="47" width="2.6" height="6"/><rect x="265.2" y="48" width="2.6" height="7"/><rect x="268.7" y="48" width="3.4" height="8"/><rect x="273.5" y="47" width="2.2" height="7"/><rect x="277.1" y="47" width="3.0" height="6"/><rect x="281.2" y="47" width="1.8" height="7"/><rect x="283.9" y="48" width="3.0" height="7"/><rect x="288.0" y="47" width="2.2" height="8"/><rect x="291.3" y="48" width="3.0" height="8"/><rect x="295.7" y="48" width="2.2" height="7"/><rect x="299.7" y="47" width="2.6" height="6"/><rect x="303.4" y="48" width="2.6" height="8"/><rect x="306.9" y="48" width="1.8" height="8"/><rect x="310.5" y="47" width="3.4" height="8"/><rect x="315.3" y="47" width="2.6" height="7"/></g><rect x="0" y="49.5" width="318" height="2" fill="#e2d810"/></svg>
<svg style="left:650px;top:487px" width="318" height="57"><g fill="#1b7479"><rect x="0.0" y="7" width="1.8" height="42"/><rect x="2.8" y="7" width="2.2" height="42"/><rect x="6.2" y="7" width="2.2" height="42"/><rect x="9.8" y="7" width="1.8" height="42"/><rect x="12.4" y="7" width="1.8" height="42"/><rect x="15.4" y="7" width="3.4" height="42"/><rect x="20.0" y="7" width="1.8" height="42"/><rect x="23.2" y="7" width="2.6" height="42"/><rect x="26.6" y="7" width="3.4" height="42"/><rect x="31.0" y="7" width="3.4" height="42"/><rect x="35.2" y="7" width="3.0" height="42"/><rect x="39.2" y="7" width="2.6" height="42"/><rect x="42.8" y="7" width="3.0" height="42"/><rect x="46.6" y="7" width="2.6" height="42"/><rect x="50.0" y="7" width="1.8" height="42"/><rect x="52.6" y="7" width="2.2" height="42"/><rect x="56.2" y="7" width="1.8" height="42"/><rect x="59.4" y="7" width="1.8" height="42"/><rect x="62.0" y="7" width="3.4" height="42"/><rect x="66.6" y="7" width="2.2" height="42"/><rect x="69.8" y="7" width="3.0" height="42"/><rect x="74.0" y="7" width="3.0" height="42"/><rect x="78.0" y="7" width="3.4" height="42"/><rect x="82.6" y="7" width="3.4" height="42"/><rect x="86.8" y="7" width="1.8" height="42"/><rect x="89.8" y="7" width="2.2" height="42"/><rect x="93.2" y="7" width="2.6" height="42"/><rect x="96.6" y="7" width="2.2" height="42"/><rect x="100.2" y="7" width="2.6" height="42"/><rect x="104.2" y="7" width="1.8" height="42"/><rect x="107.4" y="7" width="1.8" height="42"/><rect x="110.2" y="7" width="3.0" height="42"/><rect x="114.2" y="7" width="1.8" height="42"/><rect x="116.8" y="7" width="2.2" height="42"/><rect x="120.2" y="7" width="1.8" height="42"/><rect x="123.2" y="7" width="2.2" height="42"/><rect x="126.8" y="7" width="1.8" height="42"/><rect x="129.6" y="7" width="3.4" height="42"/><rect x="133.8" y="7" width="3.0" height="42"/><rect x="137.6" y="7" width="3.4" height="42"/><rect x="142.2" y="7" width="2.6" height="42"/><rect x="146.2" y="7" width="3.0" height="42"/><rect x="150.2" y="7" width="3.4" height="42"/><rect x="154.8" y="7" width="3.4" height="42"/><rect x="159.2" y="7" width="2.2" height="42"/><rect x="162.8" y="7" width="3.0" height="42"/><rect x="167.0" y="7" width="2.2" height="42"/><rect x="170.2" y="7" width="3.4" height="42"/><rect x="174.8" y="7" width="2.6" height="42"/><rect x="178.4" y="7" width="3.4" height="42"/><rect x="182.8" y="7" width="1.8" height="42"/><rect x="186.0" y="7" width="1.8" height="42"/><rect x="188.6" y="7" width="1.8" height="42"/><rect x="191.4" y="7" width="2.6" height="42"/><rect x="195.4" y="7" width="2.2" height="42"/><rect x="199.0" y="7" width="3.0" height="42"/><rect x="202.8" y="7" width="2.6" height="42"/><rect x="206.8" y="7" width="2.2" height="42"/><rect x="210.2" y="7" width="2.6" height="42"/><rect x="213.6" y="7" width="3.4" height="42"/><rect x="218.0" y="7" width="2.2" height="42"/><rect x="221.4" y="7" width="3.0" height="42"/><rect x="225.6" y="7" width="3.0" height="42"/><rect x="229.4" y="7" width="1.8" height="42"/><rect x="232.2" y="7" width="1.8" height="42"/><rect x="234.8" y="7" width="3.4" height="42"/><rect x="239.2" y="7" width="3.4" height="42"/><rect x="243.8" y="7" width="3.0" height="42"/><rect x="247.8" y="7" width="1.8" height="42"/><rect x="251.0" y="7" width="2.6" height="42"/><rect x="254.6" y="7" width="2.2" height="42"/><rect x="257.8" y="7" width="3.4" height="42"/><rect x="262.6" y="7" width="1.8" height="42"/><rect x="265.8" y="7" width="1.8" height="42"/><rect x="268.4" y="7" width="3.0" height="42"/><rect x="272.6" y="7" width="1.8" height="42"/><rect x="275.2" y="7" width="2.2" height="42"/><rect x="278.6" y="7" width="1.8" height="42"/><rect x="281.2" y="7" width="3.4" height="42"/><rect x="285.6" y="7" width="2.6" height="42"/><rect x="289.0" y="7" width="2.6" height="42"/><rect x="292.6" y="7" width="2.2" height="42"/><rect x="295.6" y="7" width="1.8" height="42"/><rect x="298.4" y="7" width="1.8" height="42"/><rect x="301.0" y="7" width="2.2" height="42"/><rect x="304.4" y="7" width="2.6" height="42"/><rect x="308.2" y="7" width="2.2" height="42"/><rect x="311.2" y="7" width="3.4" height="42"/><rect x="315.8" y="7" width="1.8" height="42"/></g><g fill="#2cc0c8"><path d="M0.0,1 h1.1 l0.7,2 v6 h-1.8 z"/><path d="M2.8,1 h1.3 l0.9,2 v6 h-2.2 z"/><path d="M6.2,0 h1.3 l0.9,2 v6 h-2.2 z"/><path d="M9.8,0 h1.1 l0.7,2 v6 h-1.8 z"/><path d="M12.4,0 h1.1 l0.7,2 v6 h-1.8 z"/><path d="M15.4,0 h2.0 l1.4,2 v6 h-3.4 z"/><path d="M20.0,1 h1.1 l0.7,2 v6 h-1.8 z"/><path d="M23.2,1 h1.6 l1.0,2 v6 h-2.6 z"/><path d="M26.6,1 h2.0 l1.4,2 v6 h-3.4 z"/><path d="M31.0,0 h2.0 l1.4,2 v6 h-3.4 z"/><path d="M35.2,0.5 h1.8 l1.2,2 v6 h-3.0 z"/><path d="M39.2,1 h1.6 l1.0,2 v6 h-2.6 z"/><path d="M42.8,0.5 h1.8 l1.2,2 v6 h-3.0 z"/><path d="M46.6,0 h1.6 l1.0,2 v6 h-2.6 z"/><path d="M50.0,1 h1.1 l0.7,2 v6 h-1.8 z"/><path d="M52.6,1 h1.3 l0.9,2 v6 h-2.2 z"/><path d="M56.2,1 h1.1 l0.7,2 v6 h-1.8 z"/><path d="M59.4,0 h1.1 l0.7,2 v6 h-1.8 z"/><path d="M62.0,0.5 h2.0 l1.4,2 v6 h-3.4 z"/><path d="M66.6,0.5 h1.3 l0.9,2 v6 h-2.2 z"/><path d="M69.8,1 h1.8 l1.2,2 v6 h-3.0 z"/><path d="M74.0,0 h1.8 l1.2,2 v6 h-3.0 z"/><path d="M78.0,0 h2.0 l1.4,2 v6 h-3.4 z"/><path d="M82.6,0.5 h2.0 l1.4,2 v6 h-3.4 z"/><path d="M86.8,0 h1.1 l0.7,2 v6 h-1.8 z"/><path d="M89.8,1 h1.3 l0.9,2 v6 h-2.2 z"/><path d="M93.2,0.5 h1.6 l1.0,2 v6 h-2.6 z"/><path d="M96.6,0 h1.3 l0.9,2 v6 h-2.2 z"/><path d="M100.2,0 h1.6 l1.0,2 v6 h-2.6 z"/><path d="M104.2,0.5 h1.1 l0.7,2 v6 h-1.8 z"/><path d="M107.4,0.5 h1.1 l0.7,2 v6 h-1.8 z"/><path d="M110.2,1 h1.8 l1.2,2 v6 h-3.0 z"/><path d="M114.2,0.5 h1.1 l0.7,2 v6 h-1.8 z"/><path d="M116.8,1 h1.3 l0.9,2 v6 h-2.2 z"/><path d="M120.2,0 h1.1 l0.7,2 v6 h-1.8 z"/><path d="M123.2,1 h1.3 l0.9,2 v6 h-2.2 z"/><path d="M126.8,0 h1.1 l0.7,2 v6 h-1.8 z"/><path d="M129.6,0.5 h2.0 l1.4,2 v6 h-3.4 z"/><path d="M133.8,0.5 h1.8 l1.2,2 v6 h-3.0 z"/><path d="M137.6,1 h2.0 l1.4,2 v6 h-3.4 z"/><path d="M142.2,0 h1.6 l1.0,2 v6 h-2.6 z"/><path d="M146.2,0 h1.8 l1.2,2 v6 h-3.0 z"/><path d="M150.2,1 h2.0 l1.4,2 v6 h-3.4 z"/><path d="M154.8,0.5 h2.0 l1.4,2 v6 h-3.4 z"/><path d="M159.2,0.5 h1.3 l0.9,2 v6 h-2.2 z"/><path d="M162.8,0 h1.8 l1.2,2 v6 h-3.0 z"/><path d="M167.0,0.5 h1.3 l0.9,2 v6 h-2.2 z"/><path d="M170.2,0.5 h2.0 l1.4,2 v6 h-3.4 z"/><path d="M174.8,0.5 h1.6 l1.0,2 v6 h-2.6 z"/><path d="M178.4,1 h2.0 l1.4,2 v6 h-3.4 z"/><path d="M182.8,1 h1.1 l0.7,2 v6 h-1.8 z"/><path d="M186.0,0 h1.1 l0.7,2 v6 h-1.8 z"/><path d="M188.6,0 h1.1 l0.7,2 v6 h-1.8 z"/><path d="M191.4,1 h1.6 l1.0,2 v6 h-2.6 z"/><path d="M195.4,0.5 h1.3 l0.9,2 v6 h-2.2 z"/><path d="M199.0,0 h1.8 l1.2,2 v6 h-3.0 z"/><path d="M202.8,0 h1.6 l1.0,2 v6 h-2.6 z"/><path d="M206.8,0 h1.3 l0.9,2 v6 h-2.2 z"/><path d="M210.2,0 h1.6 l1.0,2 v6 h-2.6 z"/><path d="M213.6,0.5 h2.0 l1.4,2 v6 h-3.4 z"/><path d="M218.0,0 h1.3 l0.9,2 v6 h-2.2 z"/><path d="M221.4,0 h1.8 l1.2,2 v6 h-3.0 z"/><path d="M225.6,1 h1.8 l1.2,2 v6 h-3.0 z"/><path d="M229.4,0 h1.1 l0.7,2 v6 h-1.8 z"/><path d="M232.2,1 h1.1 l0.7,2 v6 h-1.8 z"/><path d="M234.8,1 h2.0 l1.4,2 v6 h-3.4 z"/><path d="M239.2,1 h2.0 l1.4,2 v6 h-3.4 z"/><path d="M243.8,0 h1.8 l1.2,2 v6 h-3.0 z"/><path d="M247.8,0.5 h1.1 l0.7,2 v6 h-1.8 z"/><path d="M251.0,0 h1.6 l1.0,2 v6 h-2.6 z"/><path d="M254.6,0.5 h1.3 l0.9,2 v6 h-2.2 z"/><path d="M257.8,0.5 h2.0 l1.4,2 v6 h-3.4 z"/><path d="M262.6,1 h1.1 l0.7,2 v6 h-1.8 z"/><path d="M265.8,0.5 h1.1 l0.7,2 v6 h-1.8 z"/><path d="M268.4,0.5 h1.8 l1.2,2 v6 h-3.0 z"/><path d="M272.6,0.5 h1.1 l0.7,2 v6 h-1.8 z"/><path d="M275.2,1 h1.3 l0.9,2 v6 h-2.2 z"/><path d="M278.6,0 h1.1 l0.7,2 v6 h-1.8 z"/><path d="M281.2,1 h2.0 l1.4,2 v6 h-3.4 z"/><path d="M285.6,0.5 h1.6 l1.0,2 v6 h-2.6 z"/><path d="M289.0,0.5 h1.6 l1.0,2 v6 h-2.6 z"/><path d="M292.6,0.5 h1.3 l0.9,2 v6 h-2.2 z"/><path d="M295.6,1 h1.1 l0.7,2 v6 h-1.8 z"/><path d="M298.4,1 h1.1 l0.7,2 v6 h-1.8 z"/><path d="M301.0,0 h1.3 l0.9,2 v6 h-2.2 z"/><path d="M304.4,0.5 h1.6 l1.0,2 v6 h-2.6 z"/><path d="M308.2,0.5 h1.3 l0.9,2 v6 h-2.2 z"/><path d="M311.2,1 h2.0 l1.4,2 v6 h-3.4 z"/><path d="M315.8,0 h1.1 l0.7,2 v6 h-1.8 z"/></g><g fill="#2cc0c8" opacity="0.9"><rect x="0.0" y="48" width="1.8" height="7"/><rect x="2.8" y="49" width="2.2" height="8"/><rect x="6.2" y="49" width="2.2" height="8"/><rect x="9.8" y="49" width="1.8" height="8"/><rect x="12.4" y="48" width="1.8" height="8"/><rect x="15.4" y="49" width="3.4" height="8"/><rect x="20.0" y="48" width="1.8" height="7"/><rect x="23.2" y="49" width="2.6" height="6"/><rect x="26.6" y="48" width="3.4" height="7"/><rect x="31.0" y="48" width="3.4" height="8"/><rect x="35.2" y="49" width="3.0" height="8"/><rect x="39.2" y="49" width="2.6" height="8"/><rect x="42.8" y="48" width="3.0" height="7"/><rect x="46.6" y="49" width="2.6" height="6"/><rect x="50.0" y="49" width="1.8" height="7"/><rect x="52.6" y="48" width="2.2" height="6"/><rect x="56.2" y="49" width="1.8" height="6"/><rect x="59.4" y="49" width="1.8" height="8"/><rect x="62.0" y="49" width="3.4" height="7"/><rect x="66.6" y="49" width="2.2" height="8"/><rect x="69.8" y="49" width="3.0" height="8"/><rect x="74.0" y="49" width="3.0" height="6"/><rect x="78.0" y="49" width="3.4" height="7"/><rect x="82.6" y="48" width="3.4" height="8"/><rect x="86.8" y="48" width="1.8" height="6"/><rect x="89.8" y="49" width="2.2" height="7"/><rect x="93.2" y="49" width="2.6" height="7"/><rect x="96.6" y="49" width="2.2" height="6"/><rect x="100.2" y="49" width="2.6" height="8"/><rect x="104.2" y="48" width="1.8" height="7"/><rect x="107.4" y="49" width="1.8" height="8"/><rect x="110.2" y="49" width="3.0" height="7"/><rect x="114.2" y="48" width="1.8" height="6"/><rect x="116.8" y="48" width="2.2" height="8"/><rect x="120.2" y="49" width="1.8" height="7"/><rect x="123.2" y="48" width="2.2" height="8"/><rect x="126.8" y="49" width="1.8" height="6"/><rect x="129.6" y="49" width="3.4" height="7"/><rect x="133.8" y="49" width="3.0" height="8"/><rect x="137.6" y="48" width="3.4" height="6"/><rect x="142.2" y="49" width="2.6" height="7"/><rect x="146.2" y="48" width="3.0" height="6"/><rect x="150.2" y="48" width="3.4" height="6"/><rect x="154.8" y="48" width="3.4" height="8"/><rect x="159.2" y="49" width="2.2" height="6"/><rect x="162.8" y="48" width="3.0" height="8"/><rect x="167.0" y="48" width="2.2" height="6"/><rect x="170.2" y="48" width="3.4" height="8"/><rect x="174.8" y="49" width="2.6" height="7"/><rect x="178.4" y="49" width="3.4" height="6"/><rect x="182.8" y="49" width="1.8" height="7"/><rect x="186.0" y="48" width="1.8" height="7"/><rect x="188.6" y="49" width="1.8" height="7"/><rect x="191.4" y="49" width="2.6" height="6"/><rect x="195.4" y="48" width="2.2" height="8"/><rect x="199.0" y="49" width="3.0" height="8"/><rect x="202.8" y="48" width="2.6" height="7"/><rect x="206.8" y="48" width="2.2" height="6"/><rect x="210.2" y="49" width="2.6" height="8"/><rect x="213.6" y="48" width="3.4" height="6"/><rect x="218.0" y="48" width="2.2" height="7"/><rect x="221.4" y="49" width="3.0" height="7"/><rect x="225.6" y="48" width="3.0" height="8"/><rect x="229.4" y="48" width="1.8" height="7"/><rect x="232.2" y="49" width="1.8" height="7"/><rect x="234.8" y="49" width="3.4" height="8"/><rect x="239.2" y="48" width="3.4" height="8"/><rect x="243.8" y="49" width="3.0" height="7"/><rect x="247.8" y="49" width="1.8" height="6"/><rect x="251.0" y="48" width="2.6" height="6"/><rect x="254.6" y="49" width="2.2" height="8"/><rect x="257.8" y="49" width="3.4" height="7"/><rect x="262.6" y="49" width="1.8" height="7"/><rect x="265.8" y="48" width="1.8" height="6"/><rect x="268.4" y="49" width="3.0" height="6"/><rect x="272.6" y="49" width="1.8" height="6"/><rect x="275.2" y="49" width="2.2" height="7"/><rect x="278.6" y="49" width="1.8" height="6"/><rect x="281.2" y="48" width="3.4" height="6"/><rect x="285.6" y="49" width="2.6" height="7"/><rect x="289.0" y="49" width="2.6" height="6"/><rect x="292.6" y="48" width="2.2" height="7"/><rect x="295.6" y="49" width="1.8" height="8"/><rect x="298.4" y="49" width="1.8" height="7"/><rect x="301.0" y="48" width="2.2" height="8"/><rect x="304.4" y="49" width="2.6" height="7"/><rect x="308.2" y="48" width="2.2" height="7"/><rect x="311.2" y="49" width="3.4" height="6"/><rect x="315.8" y="48" width="1.8" height="7"/></g><rect x="0" y="50.5" width="318" height="2" fill="#2cc0c8"/></svg>
<div class="b" style="left:650px;top:472px;width:318px;height:1px;background:#8a8a8a"></div>
<svg style="left:651px;top:456px" width="22" height="14"><polygon points="0.5,0.5 15,0.5 21,7 15,13.5 0.5,13.5" fill="#f2e43a"/><text x="4" y="10" font-size="7" font-family="Liberation Sans" fill="#333">C1</text></svg>
<svg style="left:651px;top:533px" width="22" height="14"><polygon points="0.5,0.5 15,0.5 21,7 15,13.5 0.5,13.5" fill="#0b2a2c" stroke="#2ec8d4" stroke-width="0.8"/><text x="4" y="10" font-size="7" font-family="Liberation Sans" fill="#aee">C2</text></svg>
<svg style="left:802px;top:392px" width="14" height="20"><polygon points="1,1 13,1 7,6" fill="#e8902c"/><rect x="2" y="6.5" width="10" height="11" fill="#111" stroke="#e8902c"/><text x="7" y="15" font-size="8" text-anchor="middle" font-family="Liberation Sans" fill="#e8c090">T</text></svg>
<svg style="left:954px;top:430px" width="14" height="14"><polygon points="0,7 7,1 7,13" fill="#f0e020"/><rect x="6" y="5.5" width="8" height="3" fill="#f0e020"/></svg>
<svg style="left:946px;top:397px" width="19" height="18"><polygon points="0,0 19,0 19,18" fill="#6a6a6a"/><circle cx="13.5" cy="4.5" r="2.3" fill="none" stroke="#e0e0e0" stroke-width="1"/><line x1="11.8" y1="6.2" x2="8.5" y2="9.5" stroke="#e0e0e0" stroke-width="1.2"/></svg>
</body></html>
